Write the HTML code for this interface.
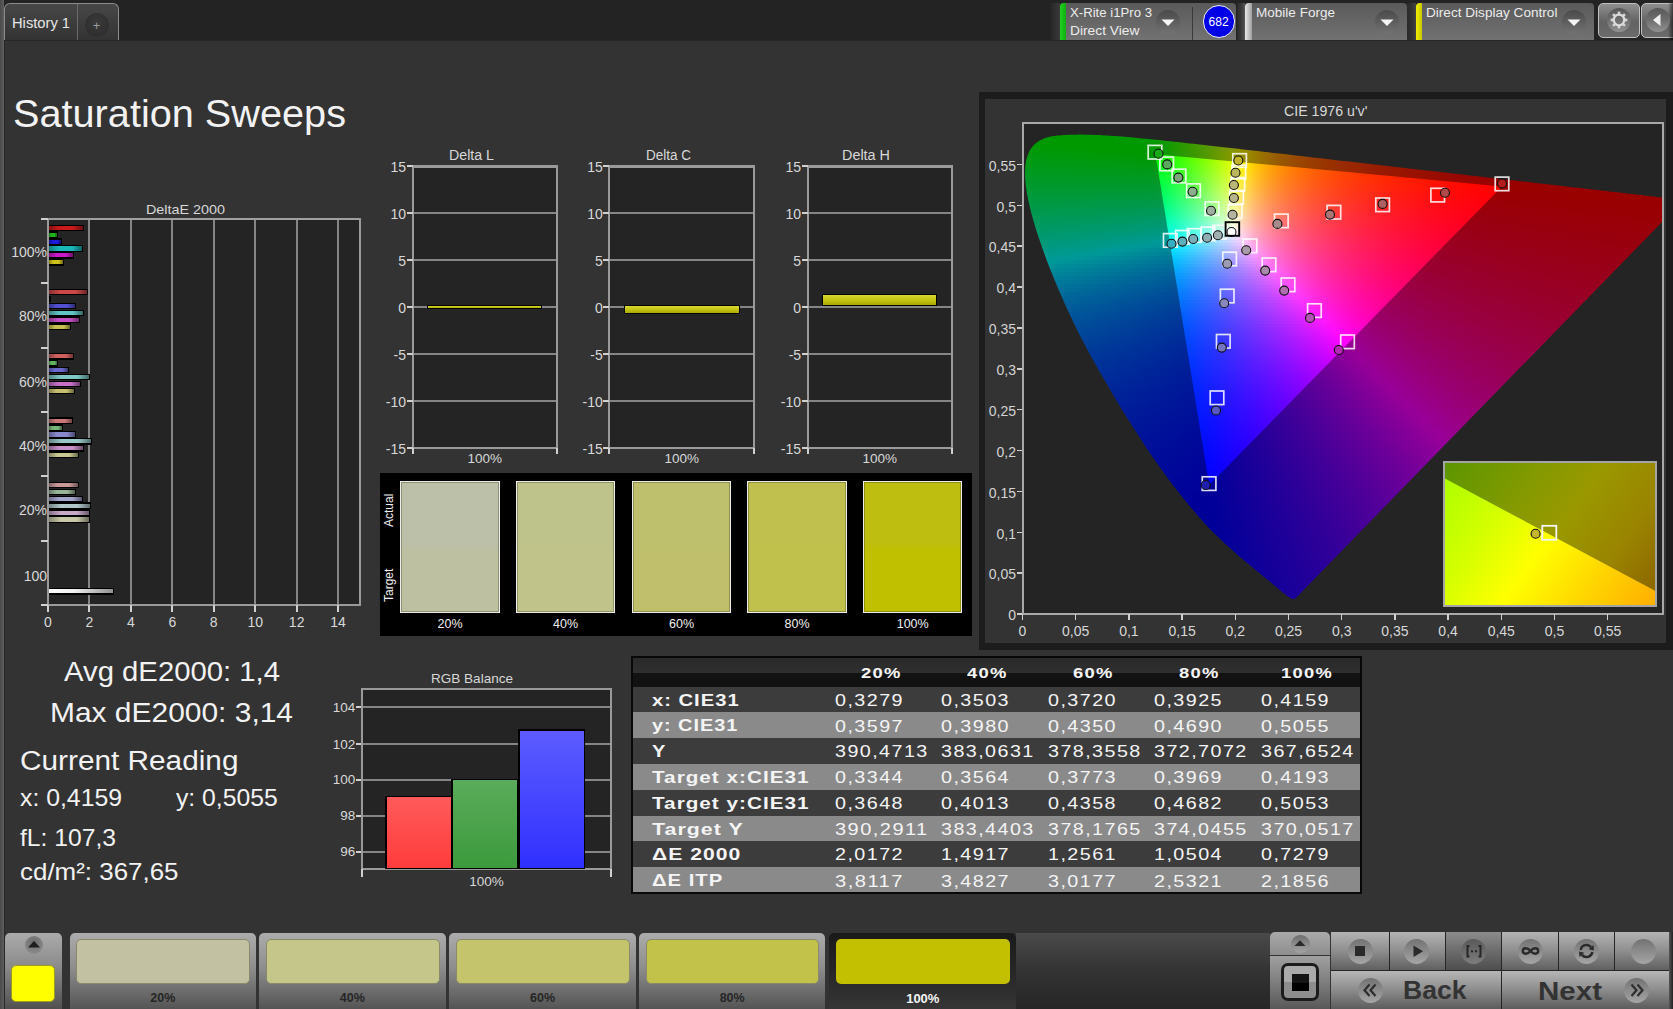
<!DOCTYPE html>
<html><head><meta charset="utf-8"><style>
html,body{margin:0;padding:0;}
body{width:1673px;height:1009px;overflow:hidden;position:relative;background:#333333;font-family:"Liberation Sans", sans-serif;}
.a{position:absolute;box-sizing:border-box;}
.t{position:absolute;white-space:pre;font-family:"Liberation Sans", sans-serif;}
</style></head><body>
<div class="a" style="left:0.00px;top:0.00px;width:1673.00px;height:40.00px;background:#232323"></div>
<div class="a" style="left:0.00px;top:0.00px;width:4.00px;height:1009.00px;background:linear-gradient(90deg,#4a4a4a,#5e5e5e)"></div>
<div class="a" style="left:4.00px;top:40.00px;width:1669.00px;height:1.00px;background:#262626"></div>
<div class="a" style="left:4.00px;top:40.00px;width:1.00px;height:969.00px;background:#282828"></div>
<div class="a" style="left:4.00px;top:3.00px;width:115.00px;height:37.00px;background:linear-gradient(#474747,#333333);border:1px solid #8c8c8c;border-bottom:none;border-radius:6px 6px 0 0"></div>
<div class="a" style="left:77.00px;top:4.00px;width:1.00px;height:36.00px;background:#6a6a6a"></div>
<div class="t" style="left:12.00px;top:16.10px;font-size:14px;line-height:14px;color:#e6e6e6;font-weight:400;transform:scaleX(1.0501);transform-origin:0 0;">History 1</div>
<div class="a" style="left:84.50px;top:13.00px;width:24.00px;height:24.00px;border-radius:50%;background:radial-gradient(circle at 50% 40%,#3a3a3a,#2f2f2f 70%,#3a3a3a)"></div>
<div class="t" style="left:92.70px;top:18.95px;font-size:13px;line-height:13px;color:#9a9a9a;font-weight:400;">+</div>
<div class="t" style="left:13.00px;top:94.35px;font-size:39px;line-height:39px;color:#f2f2f2;font-weight:400;transform:scaleX(1.0172);transform-origin:0 0;">Saturation Sweeps</div>
<div class="a" style="left:48.00px;top:219.00px;width:312.00px;height:386.00px;background:#242424"></div>
<div class="a" style="left:88.00px;top:219.00px;width:2.00px;height:386.00px;background:#858585"></div>
<div class="a" style="left:130.00px;top:219.00px;width:2.00px;height:386.00px;background:#858585"></div>
<div class="a" style="left:171.00px;top:219.00px;width:2.00px;height:386.00px;background:#858585"></div>
<div class="a" style="left:213.00px;top:219.00px;width:2.00px;height:386.00px;background:#858585"></div>
<div class="a" style="left:254.00px;top:219.00px;width:2.00px;height:386.00px;background:#858585"></div>
<div class="a" style="left:296.00px;top:219.00px;width:2.00px;height:386.00px;background:#858585"></div>
<div class="a" style="left:337.00px;top:219.00px;width:2.00px;height:386.00px;background:#858585"></div>
<div class="a" style="left:47.00px;top:218.00px;width:314.00px;height:2.00px;background:#a0a0a0"></div>
<div class="a" style="left:359.00px;top:218.00px;width:2.00px;height:387.00px;background:#9a9a9a"></div>
<div class="a" style="left:47.00px;top:218.00px;width:2.00px;height:388.00px;background:#9a9a9a"></div>
<div class="a" style="left:47.00px;top:604.00px;width:314.00px;height:2.00px;background:#9a9a9a"></div>
<div class="t" style="left:146.20px;top:202.53px;font-size:13.5px;line-height:13.5px;color:#d8d8d8;font-weight:400;transform:scaleX(1.0631);transform-origin:0 0;">DeltaE 2000</div>
<div class="a" style="left:41.00px;top:218.00px;width:7.00px;height:2.00px;background:#d0d0d0"></div>
<div class="a" style="left:41.00px;top:282.30px;width:7.00px;height:2.00px;background:#d0d0d0"></div>
<div class="a" style="left:41.00px;top:346.60px;width:7.00px;height:2.00px;background:#d0d0d0"></div>
<div class="a" style="left:41.00px;top:410.90px;width:7.00px;height:2.00px;background:#d0d0d0"></div>
<div class="a" style="left:41.00px;top:475.20px;width:7.00px;height:2.00px;background:#d0d0d0"></div>
<div class="a" style="left:41.00px;top:539.50px;width:7.00px;height:2.00px;background:#d0d0d0"></div>
<div class="a" style="left:41.00px;top:603.80px;width:7.00px;height:2.00px;background:#d0d0d0"></div>
<div class="a" style="left:47.00px;top:605.00px;width:2.00px;height:7.00px;background:#d0d0d0"></div>
<div class="t" style="left:44.10px;top:614.60px;font-size:14px;line-height:14px;color:#d8d8d8;font-weight:400;">0</div>
<div class="a" style="left:88.44px;top:605.00px;width:2.00px;height:7.00px;background:#d0d0d0"></div>
<div class="t" style="left:85.54px;top:614.60px;font-size:14px;line-height:14px;color:#d8d8d8;font-weight:400;">2</div>
<div class="a" style="left:129.88px;top:605.00px;width:2.00px;height:7.00px;background:#d0d0d0"></div>
<div class="t" style="left:126.98px;top:614.60px;font-size:14px;line-height:14px;color:#d8d8d8;font-weight:400;">4</div>
<div class="a" style="left:171.32px;top:605.00px;width:2.00px;height:7.00px;background:#d0d0d0"></div>
<div class="t" style="left:168.42px;top:614.60px;font-size:14px;line-height:14px;color:#d8d8d8;font-weight:400;">6</div>
<div class="a" style="left:212.76px;top:605.00px;width:2.00px;height:7.00px;background:#d0d0d0"></div>
<div class="t" style="left:209.86px;top:614.60px;font-size:14px;line-height:14px;color:#d8d8d8;font-weight:400;">8</div>
<div class="a" style="left:254.20px;top:605.00px;width:2.00px;height:7.00px;background:#d0d0d0"></div>
<div class="t" style="left:247.41px;top:614.60px;font-size:14px;line-height:14px;color:#d8d8d8;font-weight:400;">10</div>
<div class="a" style="left:295.64px;top:605.00px;width:2.00px;height:7.00px;background:#d0d0d0"></div>
<div class="t" style="left:288.85px;top:614.60px;font-size:14px;line-height:14px;color:#d8d8d8;font-weight:400;">12</div>
<div class="a" style="left:337.08px;top:605.00px;width:2.00px;height:7.00px;background:#d0d0d0"></div>
<div class="t" style="left:330.29px;top:614.60px;font-size:14px;line-height:14px;color:#d8d8d8;font-weight:400;">14</div>
<div class="t" style="left:11.19px;top:245.40px;font-size:14px;line-height:14px;color:#d8d8d8;font-weight:400;">100%</div>
<div class="t" style="left:18.97px;top:309.00px;font-size:14px;line-height:14px;color:#d8d8d8;font-weight:400;">80%</div>
<div class="t" style="left:18.97px;top:374.80px;font-size:14px;line-height:14px;color:#d8d8d8;font-weight:400;">60%</div>
<div class="t" style="left:18.97px;top:438.60px;font-size:14px;line-height:14px;color:#d8d8d8;font-weight:400;">40%</div>
<div class="t" style="left:18.97px;top:502.80px;font-size:14px;line-height:14px;color:#d8d8d8;font-weight:400;">20%</div>
<div class="t" style="left:23.64px;top:568.80px;font-size:14px;line-height:14px;color:#d8d8d8;font-weight:400;">100</div>
<div class="a" style="left:49.00px;top:224.50px;width:34.50px;height:6.60px;background:#000"></div>
<div class="a" style="left:49.00px;top:225.70px;width:33.50px;height:4.20px;background:linear-gradient(90deg,#c81a1aaa 0%,#c81a1a 30%,#c81a1a 70%,#c81a1a88 100%)"></div>
<div class="a" style="left:49.00px;top:231.40px;width:9.00px;height:6.60px;background:#000"></div>
<div class="a" style="left:49.00px;top:232.60px;width:8.00px;height:4.20px;background:linear-gradient(90deg,#1ab41aaa 0%,#1ab41a 30%,#1ab41a 70%,#1ab41a88 100%)"></div>
<div class="a" style="left:49.00px;top:238.30px;width:13.00px;height:6.60px;background:#000"></div>
<div class="a" style="left:49.00px;top:239.50px;width:12.00px;height:4.20px;background:linear-gradient(90deg,#1a1ad8aa 0%,#1a1ad8 30%,#1a1ad8 70%,#1a1ad888 100%)"></div>
<div class="a" style="left:49.00px;top:245.20px;width:34.00px;height:6.60px;background:#000"></div>
<div class="a" style="left:49.00px;top:246.40px;width:33.00px;height:4.20px;background:linear-gradient(90deg,#1ab8b8aa 0%,#1ab8b8 30%,#1ab8b8 70%,#1ab8b888 100%)"></div>
<div class="a" style="left:49.00px;top:252.10px;width:25.00px;height:6.60px;background:#000"></div>
<div class="a" style="left:49.00px;top:253.30px;width:24.00px;height:4.20px;background:linear-gradient(90deg,#c81ac8aa 0%,#c81ac8 30%,#c81ac8 70%,#c81ac888 100%)"></div>
<div class="a" style="left:49.00px;top:259.00px;width:15.00px;height:6.60px;background:#000"></div>
<div class="a" style="left:49.00px;top:260.20px;width:14.00px;height:4.20px;background:linear-gradient(90deg,#ccc01aaa 0%,#ccc01a 30%,#ccc01a 70%,#ccc01a88 100%)"></div>
<div class="a" style="left:49.00px;top:288.80px;width:38.50px;height:6.60px;background:#000"></div>
<div class="a" style="left:49.00px;top:290.00px;width:37.50px;height:4.20px;background:linear-gradient(90deg,#cc4848aa 0%,#cc4848 30%,#cc4848 70%,#cc484888 100%)"></div>
<div class="a" style="left:49.00px;top:295.70px;width:1.50px;height:6.60px;background:#000"></div>
<div class="a" style="left:49.00px;top:302.60px;width:27.40px;height:6.60px;background:#000"></div>
<div class="a" style="left:49.00px;top:303.80px;width:26.40px;height:4.20px;background:linear-gradient(90deg,#5050d0aa 0%,#5050d0 30%,#5050d0 70%,#5050d088 100%)"></div>
<div class="a" style="left:49.00px;top:309.50px;width:34.80px;height:6.60px;background:#000"></div>
<div class="a" style="left:49.00px;top:310.70px;width:33.80px;height:4.20px;background:linear-gradient(90deg,#60c4c4aa 0%,#60c4c4 30%,#60c4c4 70%,#60c4c488 100%)"></div>
<div class="a" style="left:49.00px;top:316.40px;width:30.50px;height:6.60px;background:#000"></div>
<div class="a" style="left:49.00px;top:317.60px;width:29.50px;height:4.20px;background:linear-gradient(90deg,#c450c4aa 0%,#c450c4 30%,#c450c4 70%,#c450c488 100%)"></div>
<div class="a" style="left:49.00px;top:323.30px;width:21.50px;height:6.60px;background:#000"></div>
<div class="a" style="left:49.00px;top:324.50px;width:20.50px;height:4.20px;background:linear-gradient(90deg,#c8c050aa 0%,#c8c050 30%,#c8c050 70%,#c8c05088 100%)"></div>
<div class="a" style="left:49.00px;top:353.10px;width:24.50px;height:6.60px;background:#000"></div>
<div class="a" style="left:49.00px;top:354.30px;width:23.50px;height:4.20px;background:linear-gradient(90deg,#d06060aa 0%,#d06060 30%,#d06060 70%,#d0606088 100%)"></div>
<div class="a" style="left:49.00px;top:360.00px;width:9.30px;height:6.60px;background:#000"></div>
<div class="a" style="left:49.00px;top:361.20px;width:8.30px;height:4.20px;background:linear-gradient(90deg,#60b460aa 0%,#60b460 30%,#60b460 70%,#60b46088 100%)"></div>
<div class="a" style="left:49.00px;top:366.90px;width:19.70px;height:6.60px;background:#000"></div>
<div class="a" style="left:49.00px;top:368.10px;width:18.70px;height:4.20px;background:linear-gradient(90deg,#6868ccaa 0%,#6868cc 30%,#6868cc 70%,#6868cc88 100%)"></div>
<div class="a" style="left:49.00px;top:373.80px;width:40.70px;height:6.60px;background:#000"></div>
<div class="a" style="left:49.00px;top:375.00px;width:39.70px;height:4.20px;background:linear-gradient(90deg,#80c8c8aa 0%,#80c8c8 30%,#80c8c8 70%,#80c8c888 100%)"></div>
<div class="a" style="left:49.00px;top:380.70px;width:31.50px;height:6.60px;background:#000"></div>
<div class="a" style="left:49.00px;top:381.90px;width:30.50px;height:4.20px;background:linear-gradient(90deg,#c870c8aa 0%,#c870c8 30%,#c870c8 70%,#c870c888 100%)"></div>
<div class="a" style="left:49.00px;top:387.60px;width:25.70px;height:6.60px;background:#000"></div>
<div class="a" style="left:49.00px;top:388.80px;width:24.70px;height:4.20px;background:linear-gradient(90deg,#c8c070aa 0%,#c8c070 30%,#c8c070 70%,#c8c07088 100%)"></div>
<div class="a" style="left:49.00px;top:417.40px;width:23.50px;height:6.60px;background:#000"></div>
<div class="a" style="left:49.00px;top:418.60px;width:22.50px;height:4.20px;background:linear-gradient(90deg,#cc7878aa 0%,#cc7878 30%,#cc7878 70%,#cc787888 100%)"></div>
<div class="a" style="left:49.00px;top:424.30px;width:13.50px;height:6.60px;background:#000"></div>
<div class="a" style="left:49.00px;top:425.50px;width:12.50px;height:4.20px;background:linear-gradient(90deg,#78b478aa 0%,#78b478 30%,#78b478 70%,#78b47888 100%)"></div>
<div class="a" style="left:49.00px;top:431.20px;width:27.40px;height:6.60px;background:#000"></div>
<div class="a" style="left:49.00px;top:432.40px;width:26.40px;height:4.20px;background:linear-gradient(90deg,#8888ccaa 0%,#8888cc 30%,#8888cc 70%,#8888cc88 100%)"></div>
<div class="a" style="left:49.00px;top:438.10px;width:42.90px;height:6.60px;background:#000"></div>
<div class="a" style="left:49.00px;top:439.30px;width:41.90px;height:4.20px;background:linear-gradient(90deg,#98c8c8aa 0%,#98c8c8 30%,#98c8c8 70%,#98c8c888 100%)"></div>
<div class="a" style="left:49.00px;top:445.00px;width:35.40px;height:6.60px;background:#000"></div>
<div class="a" style="left:49.00px;top:446.20px;width:34.40px;height:4.20px;background:linear-gradient(90deg,#c890c8aa 0%,#c890c8 30%,#c890c8 70%,#c890c888 100%)"></div>
<div class="a" style="left:49.00px;top:451.90px;width:30.00px;height:6.60px;background:#000"></div>
<div class="a" style="left:49.00px;top:453.10px;width:29.00px;height:4.20px;background:linear-gradient(90deg,#c8c890aa 0%,#c8c890 30%,#c8c890 70%,#c8c89088 100%)"></div>
<div class="a" style="left:49.00px;top:481.70px;width:30.20px;height:6.60px;background:#000"></div>
<div class="a" style="left:49.00px;top:482.90px;width:29.20px;height:4.20px;background:linear-gradient(90deg,#c89898aa 0%,#c89898 30%,#c89898 70%,#c8989888 100%)"></div>
<div class="a" style="left:49.00px;top:488.60px;width:26.80px;height:6.60px;background:#000"></div>
<div class="a" style="left:49.00px;top:489.80px;width:25.80px;height:4.20px;background:linear-gradient(90deg,#98b498aa 0%,#98b498 30%,#98b498 70%,#98b49888 100%)"></div>
<div class="a" style="left:49.00px;top:495.50px;width:34.30px;height:6.60px;background:#000"></div>
<div class="a" style="left:49.00px;top:496.70px;width:33.30px;height:4.20px;background:linear-gradient(90deg,#a4a4ccaa 0%,#a4a4cc 30%,#a4a4cc 70%,#a4a4cc88 100%)"></div>
<div class="a" style="left:49.00px;top:502.40px;width:42.40px;height:6.60px;background:#000"></div>
<div class="a" style="left:49.00px;top:503.60px;width:41.40px;height:4.20px;background:linear-gradient(90deg,#b0c8c8aa 0%,#b0c8c8 30%,#b0c8c8 70%,#b0c8c888 100%)"></div>
<div class="a" style="left:49.00px;top:509.30px;width:40.50px;height:6.60px;background:#000"></div>
<div class="a" style="left:49.00px;top:510.50px;width:39.50px;height:4.20px;background:linear-gradient(90deg,#c8a8c8aa 0%,#c8a8c8 30%,#c8a8c8 70%,#c8a8c888 100%)"></div>
<div class="a" style="left:49.00px;top:516.20px;width:40.50px;height:6.60px;background:#000"></div>
<div class="a" style="left:49.00px;top:517.40px;width:39.50px;height:4.20px;background:linear-gradient(90deg,#c8c8a8aa 0%,#c8c8a8 30%,#c8c8a8 70%,#c8c8a888 100%)"></div>
<div class="a" style="left:49.00px;top:587.50px;width:65.00px;height:7.00px;background:#000"></div>
<div class="a" style="left:49.00px;top:588.50px;width:64.00px;height:4.80px;background:linear-gradient(90deg,#ffffff,#f0f0f0 40%,#909090)"></div>
<div class="a" style="left:412.50px;top:166.30px;width:144.50px;height:281.50px;background:#242424"></div>
<div class="a" style="left:412.50px;top:212.00px;width:144.50px;height:2.00px;background:#858585"></div>
<div class="a" style="left:412.50px;top:259.00px;width:144.50px;height:2.00px;background:#858585"></div>
<div class="a" style="left:412.50px;top:306.00px;width:144.50px;height:2.00px;background:#858585"></div>
<div class="a" style="left:412.50px;top:353.00px;width:144.50px;height:2.00px;background:#858585"></div>
<div class="a" style="left:412.50px;top:400.00px;width:144.50px;height:2.00px;background:#858585"></div>
<div class="a" style="left:411.50px;top:164.80px;width:146.50px;height:3.00px;background:#9a9a9a"></div>
<div class="a" style="left:411.50px;top:446.80px;width:146.50px;height:2.00px;background:#9a9a9a"></div>
<div class="a" style="left:411.50px;top:165.30px;width:2.00px;height:283.50px;background:#9a9a9a"></div>
<div class="a" style="left:556.00px;top:165.30px;width:2.00px;height:283.50px;background:#9a9a9a"></div>
<div class="a" style="left:406.50px;top:165.30px;width:6.00px;height:2.00px;background:#d0d0d0"></div>
<div class="t" style="left:390.42px;top:160.30px;font-size:14px;line-height:14px;color:#d8d8d8;font-weight:400;">15</div>
<div class="a" style="left:406.50px;top:212.22px;width:6.00px;height:2.00px;background:#d0d0d0"></div>
<div class="t" style="left:390.42px;top:207.22px;font-size:14px;line-height:14px;color:#d8d8d8;font-weight:400;">10</div>
<div class="a" style="left:406.50px;top:259.13px;width:6.00px;height:2.00px;background:#d0d0d0"></div>
<div class="t" style="left:398.20px;top:254.13px;font-size:14px;line-height:14px;color:#d8d8d8;font-weight:400;">5</div>
<div class="a" style="left:406.50px;top:306.04px;width:6.00px;height:2.00px;background:#d0d0d0"></div>
<div class="t" style="left:398.20px;top:301.04px;font-size:14px;line-height:14px;color:#d8d8d8;font-weight:400;">0</div>
<div class="a" style="left:406.50px;top:352.96px;width:6.00px;height:2.00px;background:#d0d0d0"></div>
<div class="t" style="left:393.55px;top:347.96px;font-size:14px;line-height:14px;color:#d8d8d8;font-weight:400;">-5</div>
<div class="a" style="left:406.50px;top:399.88px;width:6.00px;height:2.00px;background:#d0d0d0"></div>
<div class="t" style="left:385.77px;top:394.88px;font-size:14px;line-height:14px;color:#d8d8d8;font-weight:400;">-10</div>
<div class="a" style="left:406.50px;top:446.79px;width:6.00px;height:2.00px;background:#d0d0d0"></div>
<div class="t" style="left:385.77px;top:441.79px;font-size:14px;line-height:14px;color:#d8d8d8;font-weight:400;">-15</div>
<div class="a" style="left:411.50px;top:447.80px;width:2.00px;height:6.00px;background:#d0d0d0"></div>
<div class="a" style="left:556.00px;top:447.80px;width:2.00px;height:6.00px;background:#d0d0d0"></div>
<div class="t" style="left:448.75px;top:148.40px;font-size:14px;line-height:14px;color:#d8d8d8;font-weight:400;transform:scaleX(1.0144);transform-origin:0 0;">Delta L</div>
<div class="t" style="left:467.48px;top:452.22px;font-size:13.5px;line-height:13.5px;color:#d8d8d8;font-weight:400;">100%</div>
<div class="a" style="left:427.40px;top:305.00px;width:115.10px;height:4.40px;background:#000"></div>
<div class="a" style="left:428.40px;top:306.00px;width:113.10px;height:2.10px;background:linear-gradient(#d8d830,#c0c010 60%,#a8a800)"></div>
<div class="a" style="left:609.30px;top:166.30px;width:144.70px;height:281.50px;background:#242424"></div>
<div class="a" style="left:609.30px;top:212.00px;width:144.70px;height:2.00px;background:#858585"></div>
<div class="a" style="left:609.30px;top:259.00px;width:144.70px;height:2.00px;background:#858585"></div>
<div class="a" style="left:609.30px;top:306.00px;width:144.70px;height:2.00px;background:#858585"></div>
<div class="a" style="left:609.30px;top:353.00px;width:144.70px;height:2.00px;background:#858585"></div>
<div class="a" style="left:609.30px;top:400.00px;width:144.70px;height:2.00px;background:#858585"></div>
<div class="a" style="left:608.30px;top:164.80px;width:146.70px;height:3.00px;background:#9a9a9a"></div>
<div class="a" style="left:608.30px;top:446.80px;width:146.70px;height:2.00px;background:#9a9a9a"></div>
<div class="a" style="left:608.30px;top:165.30px;width:2.00px;height:283.50px;background:#9a9a9a"></div>
<div class="a" style="left:753.00px;top:165.30px;width:2.00px;height:283.50px;background:#9a9a9a"></div>
<div class="a" style="left:603.30px;top:165.30px;width:6.00px;height:2.00px;background:#d0d0d0"></div>
<div class="t" style="left:587.22px;top:160.30px;font-size:14px;line-height:14px;color:#d8d8d8;font-weight:400;">15</div>
<div class="a" style="left:603.30px;top:212.22px;width:6.00px;height:2.00px;background:#d0d0d0"></div>
<div class="t" style="left:587.22px;top:207.22px;font-size:14px;line-height:14px;color:#d8d8d8;font-weight:400;">10</div>
<div class="a" style="left:603.30px;top:259.13px;width:6.00px;height:2.00px;background:#d0d0d0"></div>
<div class="t" style="left:595.00px;top:254.13px;font-size:14px;line-height:14px;color:#d8d8d8;font-weight:400;">5</div>
<div class="a" style="left:603.30px;top:306.04px;width:6.00px;height:2.00px;background:#d0d0d0"></div>
<div class="t" style="left:595.00px;top:301.04px;font-size:14px;line-height:14px;color:#d8d8d8;font-weight:400;">0</div>
<div class="a" style="left:603.30px;top:352.96px;width:6.00px;height:2.00px;background:#d0d0d0"></div>
<div class="t" style="left:590.35px;top:347.96px;font-size:14px;line-height:14px;color:#d8d8d8;font-weight:400;">-5</div>
<div class="a" style="left:603.30px;top:399.88px;width:6.00px;height:2.00px;background:#d0d0d0"></div>
<div class="t" style="left:582.57px;top:394.88px;font-size:14px;line-height:14px;color:#d8d8d8;font-weight:400;">-10</div>
<div class="a" style="left:603.30px;top:446.79px;width:6.00px;height:2.00px;background:#d0d0d0"></div>
<div class="t" style="left:582.57px;top:441.79px;font-size:14px;line-height:14px;color:#d8d8d8;font-weight:400;">-15</div>
<div class="a" style="left:608.30px;top:447.80px;width:2.00px;height:6.00px;background:#d0d0d0"></div>
<div class="a" style="left:753.00px;top:447.80px;width:2.00px;height:6.00px;background:#d0d0d0"></div>
<div class="t" style="left:645.65px;top:148.40px;font-size:14px;line-height:14px;color:#d8d8d8;font-weight:400;transform:scaleX(0.9639);transform-origin:0 0;">Delta C</div>
<div class="t" style="left:664.38px;top:452.22px;font-size:13.5px;line-height:13.5px;color:#d8d8d8;font-weight:400;">100%</div>
<div class="a" style="left:624.00px;top:305.00px;width:116.00px;height:9.00px;background:#000"></div>
<div class="a" style="left:625.00px;top:306.00px;width:114.00px;height:6.70px;background:linear-gradient(#d8d830,#c0c010 60%,#a8a800)"></div>
<div class="a" style="left:807.60px;top:166.30px;width:144.40px;height:281.50px;background:#242424"></div>
<div class="a" style="left:807.60px;top:212.00px;width:144.40px;height:2.00px;background:#858585"></div>
<div class="a" style="left:807.60px;top:259.00px;width:144.40px;height:2.00px;background:#858585"></div>
<div class="a" style="left:807.60px;top:306.00px;width:144.40px;height:2.00px;background:#858585"></div>
<div class="a" style="left:807.60px;top:353.00px;width:144.40px;height:2.00px;background:#858585"></div>
<div class="a" style="left:807.60px;top:400.00px;width:144.40px;height:2.00px;background:#858585"></div>
<div class="a" style="left:806.60px;top:164.80px;width:146.40px;height:3.00px;background:#9a9a9a"></div>
<div class="a" style="left:806.60px;top:446.80px;width:146.40px;height:2.00px;background:#9a9a9a"></div>
<div class="a" style="left:806.60px;top:165.30px;width:2.00px;height:283.50px;background:#9a9a9a"></div>
<div class="a" style="left:951.00px;top:165.30px;width:2.00px;height:283.50px;background:#9a9a9a"></div>
<div class="a" style="left:801.60px;top:165.30px;width:6.00px;height:2.00px;background:#d0d0d0"></div>
<div class="t" style="left:785.52px;top:160.30px;font-size:14px;line-height:14px;color:#d8d8d8;font-weight:400;">15</div>
<div class="a" style="left:801.60px;top:212.22px;width:6.00px;height:2.00px;background:#d0d0d0"></div>
<div class="t" style="left:785.52px;top:207.22px;font-size:14px;line-height:14px;color:#d8d8d8;font-weight:400;">10</div>
<div class="a" style="left:801.60px;top:259.13px;width:6.00px;height:2.00px;background:#d0d0d0"></div>
<div class="t" style="left:793.30px;top:254.13px;font-size:14px;line-height:14px;color:#d8d8d8;font-weight:400;">5</div>
<div class="a" style="left:801.60px;top:306.04px;width:6.00px;height:2.00px;background:#d0d0d0"></div>
<div class="t" style="left:793.30px;top:301.04px;font-size:14px;line-height:14px;color:#d8d8d8;font-weight:400;">0</div>
<div class="a" style="left:801.60px;top:352.96px;width:6.00px;height:2.00px;background:#d0d0d0"></div>
<div class="t" style="left:788.65px;top:347.96px;font-size:14px;line-height:14px;color:#d8d8d8;font-weight:400;">-5</div>
<div class="a" style="left:801.60px;top:399.88px;width:6.00px;height:2.00px;background:#d0d0d0"></div>
<div class="t" style="left:780.87px;top:394.88px;font-size:14px;line-height:14px;color:#d8d8d8;font-weight:400;">-10</div>
<div class="a" style="left:801.60px;top:446.79px;width:6.00px;height:2.00px;background:#d0d0d0"></div>
<div class="t" style="left:780.87px;top:441.79px;font-size:14px;line-height:14px;color:#d8d8d8;font-weight:400;">-15</div>
<div class="a" style="left:806.60px;top:447.80px;width:2.00px;height:6.00px;background:#d0d0d0"></div>
<div class="a" style="left:951.00px;top:447.80px;width:2.00px;height:6.00px;background:#d0d0d0"></div>
<div class="t" style="left:842.30px;top:148.40px;font-size:14px;line-height:14px;color:#d8d8d8;font-weight:400;transform:scaleX(1.0281);transform-origin:0 0;">Delta H</div>
<div class="t" style="left:862.53px;top:452.22px;font-size:13.5px;line-height:13.5px;color:#d8d8d8;font-weight:400;">100%</div>
<div class="a" style="left:822.30px;top:293.70px;width:114.50px;height:12.40px;background:#000"></div>
<div class="a" style="left:823.30px;top:294.70px;width:112.50px;height:10.10px;background:linear-gradient(#d8d830,#c0c010 60%,#a8a800)"></div>
<div class="a" style="left:380.00px;top:473.00px;width:591.50px;height:163.30px;background:#000"></div>
<div class="a" style="left:400.30px;top:481.40px;width:99.60px;height:131.20px;border:1px solid #ececec;box-shadow:inset 0 0 0 1px rgba(60,60,20,0.35);background:linear-gradient(#bcc0a8 0%,#bcc0a8 47%,#bec0a2 53%,#bec0a2 100%)"></div>
<div class="t" style="left:437.58px;top:617.88px;font-size:12.5px;line-height:12.5px;color:#f0f0f0;font-weight:400;">20%</div>
<div class="a" style="left:515.80px;top:481.40px;width:99.60px;height:131.20px;border:1px solid #ececec;box-shadow:inset 0 0 0 1px rgba(60,60,20,0.35);background:linear-gradient(#bec38c 0%,#bec38c 47%,#c0c48a 53%,#c0c48a 100%)"></div>
<div class="t" style="left:553.08px;top:617.88px;font-size:12.5px;line-height:12.5px;color:#f0f0f0;font-weight:400;">40%</div>
<div class="a" style="left:631.80px;top:481.40px;width:99.60px;height:131.20px;border:1px solid #ececec;box-shadow:inset 0 0 0 1px rgba(60,60,20,0.35);background:linear-gradient(#bec06e 0%,#bec06e 47%,#c0c06c 53%,#c0c06c 100%)"></div>
<div class="t" style="left:669.08px;top:617.88px;font-size:12.5px;line-height:12.5px;color:#f0f0f0;font-weight:400;">60%</div>
<div class="a" style="left:747.30px;top:481.40px;width:99.60px;height:131.20px;border:1px solid #ececec;box-shadow:inset 0 0 0 1px rgba(60,60,20,0.35);background:linear-gradient(#bfc04e 0%,#bfc04e 47%,#c0c04c 53%,#c0c04c 100%)"></div>
<div class="t" style="left:784.58px;top:617.88px;font-size:12.5px;line-height:12.5px;color:#f0f0f0;font-weight:400;">80%</div>
<div class="a" style="left:862.90px;top:481.40px;width:99.60px;height:131.20px;border:1px solid #ececec;box-shadow:inset 0 0 0 1px rgba(60,60,20,0.35);background:linear-gradient(#bebe10 0%,#bebe10 47%,#c0c000 53%,#c0c000 100%)"></div>
<div class="t" style="left:896.71px;top:617.88px;font-size:12.5px;line-height:12.5px;color:#f0f0f0;font-weight:400;">100%</div>
<div class="t" style="left:0.00px;top:-10.20px;font-size:12px;line-height:12px;color:#f0f0f0;font-weight:400;transform:rotate(-90deg);transform-origin:0 0;left:383px;top:527px;">Actual</div>
<div class="t" style="left:0.00px;top:-10.20px;font-size:12px;line-height:12px;color:#f0f0f0;font-weight:400;transform:rotate(-90deg);transform-origin:0 0;left:383px;top:602px;">Target</div>
<div class="a" style="left:979.00px;top:92.00px;width:694.00px;height:558.00px;background:#1c1c1c"></div>
<div class="a" style="left:985.00px;top:99.00px;width:681.00px;height:544.00px;background:#333333"></div>
<div class="a" style="left:1023px;top:123px;width:639px;height:491px;background:#242424;overflow:hidden"><div style="position:absolute;left:0px;top:5px;width:639px;height:474px;clip-path:polygon(272.4px 470.4px,272.3px 470.5px,272.1px 470.6px,271.9px 470.7px,271.7px 470.8px,271.5px 470.9px,271.3px 471.0px,271.1px 471.0px,270.9px 471.0px,270.7px 471.1px,270.5px 471.1px,270.3px 471.0px,270.0px 471.0px,269.7px 470.9px,269.3px 470.8px,268.9px 470.7px,268.4px 470.6px,268.0px 470.4px,267.6px 470.2px,267.1px 470.0px,266.7px 469.7px,266.3px 469.4px,265.8px 469.1px,265.3px 468.7px,264.8px 468.4px,264.3px 468.0px,263.7px 467.6px,263.1px 467.1px,262.5px 466.6px,261.8px 466.1px,261.1px 465.5px,260.3px 464.9px,259.5px 464.2px,258.6px 463.5px,257.7px 462.8px,256.7px 462.0px,255.8px 461.2px,254.7px 460.3px,253.7px 459.4px,252.6px 458.5px,251.4px 457.5px,250.3px 456.5px,249.0px 455.5px,247.7px 454.4px,246.4px 453.3px,245.0px 452.1px,243.6px 451.0px,242.1px 449.7px,240.5px 448.4px,238.8px 447.0px,237.0px 445.6px,235.2px 444.1px,233.3px 442.5px,231.3px 440.9px,229.3px 439.2px,227.2px 437.5px,225.1px 435.8px,222.9px 434.0px,220.6px 432.1px,218.3px 430.1px,215.8px 428.0px,213.3px 425.8px,210.7px 423.5px,208.0px 421.1px,205.2px 418.6px,202.3px 415.9px,199.3px 413.1px,196.2px 410.1px,193.2px 407.2px,190.0px 404.0px,186.6px 400.7px,183.1px 397.0px,179.4px 392.9px,175.5px 388.4px,171.3px 383.6px,167.0px 378.4px,162.5px 373.0px,157.8px 367.2px,153.1px 361.1px,148.2px 354.7px,143.2px 347.9px,138.0px 340.8px,132.7px 333.4px,127.4px 325.7px,122.0px 317.7px,116.5px 309.3px,110.9px 300.6px,105.2px 291.6px,99.5px 282.4px,93.8px 273.0px,88.2px 263.6px,82.7px 254.1px,77.0px 244.4px,71.5px 234.5px,66.0px 224.7px,60.7px 214.8px,55.7px 205.2px,51.0px 195.6px,46.5px 186.0px,42.1px 176.4px,38.0px 167.0px,34.0px 157.9px,30.4px 149.1px,26.9px 140.5px,23.7px 132.2px,20.7px 124.1px,18.0px 116.3px,15.4px 108.8px,13.1px 101.8px,11.1px 95.1px,9.3px 88.7px,7.7px 82.7px,6.4px 77.1px,5.2px 71.7px,4.2px 66.6px,3.4px 61.8px,2.8px 57.4px,2.4px 53.2px,2.1px 49.3px,2.0px 45.6px,2.1px 42.1px,2.3px 38.8px,2.6px 35.7px,3.1px 32.8px,3.8px 30.2px,4.6px 27.7px,5.5px 25.3px,6.5px 23.1px,7.7px 21.1px,9.0px 19.2px,10.4px 17.6px,12.0px 16.0px,13.6px 14.6px,15.2px 13.4px,17.0px 12.3px,18.9px 11.4px,20.9px 10.5px,22.9px 9.8px,25.0px 9.2px,27.2px 8.6px,29.4px 8.2px,31.6px 7.9px,33.9px 7.6px,36.3px 7.4px,38.7px 7.2px,41.1px 7.0px,43.5px 6.9px,46.0px 6.8px,48.5px 6.7px,51.0px 6.7px,53.5px 6.7px,56.0px 6.6px,58.5px 6.6px,61.0px 6.7px,63.6px 6.7px,66.1px 6.8px,68.7px 6.8px,71.2px 6.9px,73.8px 7.0px,76.4px 7.1px,79.1px 7.3px,81.7px 7.4px,84.4px 7.6px,87.2px 7.8px,89.9px 7.9px,92.7px 8.1px,95.6px 8.3px,98.5px 8.6px,101.4px 8.8px,104.4px 9.1px,107.4px 9.3px,110.4px 9.6px,113.5px 9.9px,116.7px 10.2px,119.9px 10.5px,123.1px 10.8px,126.4px 11.1px,129.8px 11.4px,133.2px 11.8px,136.6px 12.1px,140.1px 12.5px,143.7px 12.9px,147.4px 13.3px,151.1px 13.7px,154.9px 14.1px,158.7px 14.5px,162.6px 14.9px,166.6px 15.4px,170.6px 15.8px,174.7px 16.3px,178.9px 16.7px,183.2px 17.2px,187.5px 17.7px,191.9px 18.2px,196.4px 18.7px,200.9px 19.2px,205.6px 19.7px,210.3px 20.3px,215.0px 20.8px,219.9px 21.4px,224.8px 21.9px,229.8px 22.5px,234.9px 23.1px,240.1px 23.7px,245.3px 24.3px,250.6px 24.9px,256.0px 25.5px,261.5px 26.1px,267.0px 26.8px,272.6px 27.4px,278.3px 28.1px,284.0px 28.7px,289.9px 29.4px,295.8px 30.1px,301.8px 30.8px,307.8px 31.5px,313.9px 32.2px,320.0px 32.9px,326.2px 33.6px,332.5px 34.3px,338.8px 35.0px,345.2px 35.7px,351.5px 36.5px,357.9px 37.2px,364.4px 37.9px,370.9px 38.7px,377.4px 39.4px,383.8px 40.2px,390.2px 40.9px,396.5px 41.7px,402.8px 42.4px,409.1px 43.1px,415.3px 43.8px,421.5px 44.5px,427.7px 45.2px,433.9px 45.9px,440.1px 46.6px,446.2px 47.4px,452.3px 48.1px,458.3px 48.7px,464.2px 49.4px,469.9px 50.1px,475.6px 50.7px,481.2px 51.3px,486.6px 52.0px,492.0px 52.6px,497.2px 53.2px,502.4px 53.8px,507.4px 54.3px,512.4px 54.9px,517.2px 55.5px,521.9px 56.0px,526.5px 56.5px,530.9px 57.1px,535.2px 57.6px,539.4px 58.0px,543.5px 58.5px,547.5px 59.0px,551.3px 59.4px,555.1px 59.8px,558.7px 60.3px,562.2px 60.7px,565.6px 61.0px,568.9px 61.4px,572.1px 61.8px,575.1px 62.1px,577.9px 62.4px,580.5px 62.7px,583.2px 63.1px,586.2px 63.4px,589.7px 63.8px,593.9px 64.3px,598.6px 64.8px,603.7px 65.4px,608.8px 66.0px,613.5px 66.6px,617.8px 67.0px,621.5px 67.5px,624.9px 67.9px,628.1px 68.2px,631.0px 68.6px,633.7px 68.9px,636.3px 69.2px,638.5px 69.4px,640.4px 69.6px,642.1px 69.8px,643.7px 70.0px,645.4px 70.2px,647.3px 70.4px,649.5px 70.7px,652.0px 71.0px,654.6px 71.3px,657.0px 71.5px,659.1px 71.8px,660.5px 71.9px)"><div style="position:absolute;left:0;top:0px;width:639px;height:4px;background:linear-gradient(90deg,#009900 0px,#009900 16px,#009900 32px,#009900 48px,#009900 64px,#009900 80px,#009900 96px,#009900 112px,#009900 128px,#159900 144px,#2c9900 160px,#469900 176px,#629900 192px,#819900 208px,#999000 224px,#997500 240px,#996100 256px,#995100 272px,#994400 288px,#993a00 304px,#993200 320px,#992a00 336px,#992400 352px,#991f00 368px,#991a00 384px,#991600 400px,#991200 416px,#990f00 432px,#990c00 448px,#990900 464px,#990700 480px,#990500 496px,#990300 512px,#990100 528px,#990000 544px,#990000 560px,#990000 576px,#990000 592px,#990000 608px,#990000 624px,#990000 639px)"></div><div style="position:absolute;left:0;top:4px;width:639px;height:4px;background:linear-gradient(90deg,#009900 0px,#009900 16px,#009900 32px,#009900 48px,#009900 64px,#009900 80px,#009900 96px,#009900 112px,#009900 128px,#149900 144px,#2c9900 160px,#469900 176px,#629900 192px,#819900 208px,#998f00 224px,#997400 240px,#996000 256px,#995000 272px,#994300 288px,#993900 304px,#993100 320px,#992a00 336px,#992300 352px,#991e00 368px,#991900 384px,#991500 400px,#991200 416px,#990e00 432px,#990b00 448px,#990900 464px,#990600 480px,#990400 496px,#990200 512px,#990000 528px,#990000 544px,#990000 560px,#990000 576px,#990000 592px,#990000 608px,#990000 624px,#990000 639px)"></div><div style="position:absolute;left:0;top:8px;width:639px;height:4px;background:linear-gradient(90deg,#009900 0px,#009900 16px,#009900 32px,#009900 48px,#009900 64px,#009900 80px,#009900 96px,#009900 112px,#009900 128px,#149900 144px,#2c9900 160px,#469900 176px,#629900 192px,#829900 208px,#998e00 224px,#997300 240px,#995f00 256px,#994f00 272px,#994300 288px,#993800 304px,#993000 320px,#992900 336px,#992300 352px,#991d00 368px,#991900 384px,#991500 400px,#991100 416px,#990e00 432px,#990b00 448px,#990800 464px,#990600 480px,#990400 496px,#990200 512px,#990000 528px,#990000 544px,#990000 560px,#990000 576px,#990000 592px,#990000 608px,#990000 624px,#990000 639px)"></div><div style="position:absolute;left:0;top:12px;width:639px;height:4px;background:linear-gradient(90deg,#009900 0px,#009900 16px,#009900 32px,#009900 48px,#009900 64px,#009900 80px,#009900 96px,#009900 112px,#009900 128px,#139900 144px,#2b9900 160px,#469900 176px,#639900 192px,#829900 208px,#998d00 224px,#997200 240px,#995e00 256px,#994e00 272px,#994200 288px,#993800 304px,#992f00 320px,#992800 336px,#992200 352px,#991d00 368px,#991800 384px,#991400 400px,#991100 416px,#990d00 432px,#990a00 448px,#990800 464px,#990500 480px,#990300 496px,#990100 512px,#990000 528px,#990000 544px,#990000 560px,#990000 576px,#990000 592px,#990000 608px,#990000 624px,#990000 639px)"></div><div style="position:absolute;left:0;top:16px;width:639px;height:4px;background:linear-gradient(90deg,#009904 0px,#009903 16px,#009901 32px,#009900 48px,#009900 64px,#009900 80px,#009900 96px,#009900 112px,#009900 128px,#129900 144px,#2b9900 160px,#459900 176px,#639900 192px,#839900 208px,#998c00 224px,#997100 240px,#995d00 256px,#994d00 272px,#994100 288px,#993700 304px,#992f00 320px,#992700 336px,#992100 352px,#991c00 368px,#991800 384px,#991400 400px,#991000 416px,#990d00 432px,#990a00 448px,#990700 464px,#990500 480px,#990300 496px,#990100 512px,#990000 528px,#990000 544px,#990000 560px,#990000 576px,#990000 592px,#990000 608px,#990000 624px,#990000 639px)"></div><div style="position:absolute;left:0;top:20px;width:639px;height:4px;background:linear-gradient(90deg,#009908 0px,#009907 16px,#009905 32px,#009904 48px,#009902 64px,#009901 80px,#009900 96px,#009900 112px,#009900 128px,#119900 144px,#2a9900 160px,#459900 176px,#639900 192px,#849900 208px,#998b00 224px,#997000 240px,#995c00 256px,#994d00 272px,#994000 288px,#993600 304px,#992e00 320px,#992700 336px,#992100 352px,#991b00 368px,#991700 384px,#991300 400px,#990f00 416px,#990c00 432px,#990900 448px,#990700 464px,#990400 480px,#990200 496px,#990000 512px,#990000 528px,#990000 544px,#990000 560px,#990000 576px,#990000 592px,#990000 608px,#990000 624px,#990000 639px)"></div><div style="position:absolute;left:0;top:24px;width:639px;height:4px;background:linear-gradient(90deg,#00990c 0px,#00990b 16px,#00990a 32px,#009908 48px,#009907 64px,#009905 80px,#009904 96px,#009902 112px,#009900 128px,#119900 144px,#2a9900 160px,#459900 176px,#639900 192px,#849900 208px,#998a00 224px,#996f00 240px,#995b00 256px,#994c00 272px,#993f00 288px,#993500 304px,#992d00 320px,#992600 336px,#992000 352px,#991b00 368px,#991600 384px,#991200 400px,#990f00 416px,#990c00 432px,#990900 448px,#990600 464px,#990400 480px,#990200 496px,#990000 512px,#990000 528px,#990000 544px,#990000 560px,#990000 576px,#990000 592px,#990000 608px,#990000 624px,#990000 639px)"></div><div style="position:absolute;left:0;top:28px;width:639px;height:4px;background:linear-gradient(90deg,#009910 0px,#00990f 16px,#00990e 32px,#00990d 48px,#00990b 64px,#00990a 80px,#009909 96px,#009907 112px,#009906 128px,#109904 144px,#299902 160px,#459900 176px,#639900 192px,#859900 208px,#998a00 224px,#996e00 240px,#995a00 256px,#994b00 272px,#993e00 288px,#993400 304px,#992c00 320px,#992500 336px,#991f00 352px,#991a00 368px,#991600 384px,#991200 400px,#990e00 416px,#990b00 432px,#990800 448px,#990600 464px,#990300 480px,#990100 496px,#990000 512px,#990000 528px,#990000 544px,#990000 560px,#990000 576px,#990000 592px,#990000 608px,#990000 624px,#990000 639px)"></div><div style="position:absolute;left:0;top:32px;width:639px;height:4px;background:linear-gradient(90deg,#009914 0px,#009913 16px,#009912 32px,#009911 48px,#009910 64px,#00990f 80px,#00990e 96px,#00990c 112px,#00990b 128px,#0f9909 144px,#299908 160px,#449906 176px,#639904 192px,#859901 208px,#998900 224px,#996d00 240px,#995900 256px,#994a00 272px,#993e00 288px,#993400 304px,#992b00 320px,#992500 336px,#991f00 352px,#991900 368px,#991500 384px,#991100 400px,#990e00 416px,#990b00 432px,#990800 448px,#990500 464px,#990300 480px,#990100 496px,#990000 512px,#990000 528px,#990000 544px,#990000 560px,#990000 576px,#990000 592px,#990000 608px,#990000 624px,#990000 639px)"></div><div style="position:absolute;left:0;top:36px;width:639px;height:4px;background:linear-gradient(90deg,#009918 0px,#009917 16px,#009916 32px,#009916 48px,#009915 64px,#009914 80px,#009913 96px,#009912 112px,#009910 128px,#0e990f 144px,#28990e 160px,#44990c 176px,#63990a 192px,#869908 208px,#998805 224px,#996c02 240px,#995800 256px,#994900 272px,#993d00 288px,#993300 304px,#992b00 320px,#992400 336px,#991e00 352px,#991900 368px,#991400 384px,#991100 400px,#990d00 416px,#990a00 432px,#990700 448px,#990500 464px,#990200 480px,#990000 496px,#990000 512px,#990000 528px,#990000 544px,#990000 560px,#990000 576px,#990000 592px,#990000 608px,#990000 624px,#990000 639px)"></div><div style="position:absolute;left:0;top:40px;width:639px;height:4px;background:linear-gradient(90deg,#00991c 0px,#00991c 16px,#00991b 32px,#00991a 48px,#009919 64px,#009919 80px,#009918 96px,#009917 112px,#009916 128px,#0d9915 144px,#279914 160px,#449912 176px,#649911 192px,#87990f 208px,#99870c 224px,#996b08 240px,#995705 256px,#994803 272px,#993c01 288px,#993200 304px,#992a00 320px,#992300 336px,#991d00 352px,#991800 368px,#991400 384px,#991000 400px,#990c00 416px,#990900 432px,#990700 448px,#990400 464px,#990200 480px,#990000 496px,#990000 512px,#990000 528px,#990000 544px,#990000 560px,#990000 576px,#990000 592px,#990000 608px,#990000 624px,#990000 639px)"></div><div style="position:absolute;left:0;top:44px;width:639px;height:4px;background:linear-gradient(90deg,#009920 0px,#009920 16px,#00991f 32px,#00991f 48px,#00991e 64px,#00991e 80px,#00991d 96px,#00991c 112px,#00991c 128px,#0d991b 144px,#27991a 160px,#449919 176px,#649918 192px,#879916 208px,#998612 224px,#996a0d 240px,#99560a 256px,#994707 272px,#993b05 288px,#993103 304px,#992902 320px,#992201 336px,#991c00 352px,#991700 368px,#991300 384px,#990f00 400px,#990c00 416px,#990900 432px,#990600 448px,#990400 464px,#990100 480px,#990000 496px,#990000 512px,#990000 528px,#990000 544px,#990000 560px,#990000 576px,#990000 592px,#990000 608px,#990000 624px,#990000 639px)"></div><div style="position:absolute;left:0;top:48px;width:639px;height:4px;background:linear-gradient(90deg,#009925 0px,#009924 16px,#009924 32px,#009924 48px,#009923 64px,#009923 80px,#009922 96px,#009922 112px,#009921 128px,#0c9921 144px,#269920 160px,#43991f 176px,#64991f 192px,#88991e 208px,#998519 224px,#996913 240px,#99550f 256px,#99460b 272px,#993a09 288px,#993007 304px,#992805 320px,#992203 336px,#991c02 352px,#991701 368px,#991200 384px,#990f00 400px,#990b00 416px,#990800 432px,#990600 448px,#990300 464px,#990100 480px,#990000 496px,#990000 512px,#990000 528px,#990000 544px,#990000 560px,#990000 576px,#990000 592px,#990000 608px,#990000 624px,#990000 639px)"></div><div style="position:absolute;left:0;top:52px;width:639px;height:4px;background:linear-gradient(90deg,#009929 0px,#009929 16px,#009929 32px,#009929 48px,#009928 64px,#009928 80px,#009928 96px,#009928 112px,#009927 128px,#0b9927 144px,#269927 160px,#439926 176px,#649926 192px,#899925 208px,#998420 224px,#996819 240px,#995414 256px,#994510 272px,#99390d 288px,#992f0a 304px,#992708 320px,#992106 336px,#991b05 352px,#991604 368px,#991203 384px,#990e02 400px,#990b01 416px,#990800 432px,#990500 448px,#990300 464px,#990000 480px,#990000 496px,#990000 512px,#990000 528px,#990000 544px,#990000 560px,#990000 576px,#990000 592px,#990000 608px,#990000 624px,#990000 639px)"></div><div style="position:absolute;left:0;top:56px;width:639px;height:4px;background:linear-gradient(90deg,#00992e 0px,#00992e 16px,#00992e 32px,#00992e 48px,#00992d 64px,#00992d 80px,#00992d 96px,#00992d 112px,#00992d 128px,#0a992d 144px,#25992d 160px,#43992d 176px,#64992d 192px,#89992d 208px,#998326 224px,#99671e 240px,#995318 256px,#994414 272px,#993810 288px,#992f0e 304px,#99270b 320px,#992009 336px,#991a08 352px,#991506 368px,#991105 384px,#990d04 400px,#990a03 416px,#990702 432px,#990501 448px,#990200 464px,#990000 480px,#990000 496px,#990000 512px,#990000 528px,#990000 544px,#990000 560px,#990000 576px,#990000 592px,#990000 608px,#990000 624px,#990000 639px)"></div><div style="position:absolute;left:0;top:60px;width:639px;height:4px;background:linear-gradient(90deg,#009932 0px,#009932 16px,#009932 32px,#009933 48px,#009933 64px,#009933 80px,#009933 96px,#009933 112px,#009934 128px,#099934 144px,#249934 160px,#439934 176px,#649935 192px,#8a9935 208px,#99822d 224px,#996624 240px,#99521d 256px,#994318 272px,#993714 288px,#992e11 304px,#99260e 320px,#991f0c 336px,#991a0a 352px,#991509 368px,#991007 384px,#990d06 400px,#990a05 416px,#990704 432px,#990403 448px,#990202 464px,#990001 480px,#990001 496px,#990000 512px,#990000 528px,#990000 544px,#990000 560px,#990000 576px,#990000 592px,#990000 608px,#990000 624px,#990000 639px)"></div><div style="position:absolute;left:0;top:64px;width:639px;height:4px;background:linear-gradient(90deg,#009937 0px,#009937 16px,#009937 32px,#009938 48px,#009938 64px,#009938 80px,#009939 96px,#009939 112px,#00993a 128px,#08993a 144px,#24993b 160px,#42993c 176px,#65993d 192px,#8b993d 208px,#998134 224px,#99652a 240px,#995122 256px,#99421d 272px,#993618 288px,#992d15 304px,#992512 320px,#991e0f 336px,#99190d 352px,#99140b 368px,#99100a 384px,#990c08 400px,#990907 416px,#990606 432px,#990305 448px,#990104 464px,#990003 480px,#990002 496px,#990002 512px,#990001 528px,#990000 544px,#990000 560px,#990000 576px,#990000 592px,#990000 608px,#990000 624px,#990000 639px)"></div><div style="position:absolute;left:0;top:68px;width:639px;height:4px;background:linear-gradient(90deg,#00993b 0px,#00993c 16px,#00993c 32px,#00993d 48px,#00993d 64px,#00993e 80px,#00993f 96px,#009940 112px,#009940 128px,#079941 144px,#239942 160px,#429943 176px,#659945 192px,#8c9946 208px,#99803c 224px,#996430 240px,#995028 256px,#994121 272px,#99361c 288px,#992c18 304px,#992415 320px,#991e12 336px,#991810 352px,#99130e 368px,#990f0c 384px,#990c0a 400px,#990809 416px,#990508 432px,#990307 448px,#990106 464px,#990005 480px,#990004 496px,#990003 512px,#990003 528px,#990002 544px,#990001 560px,#990001 576px,#990000 592px,#990000 608px,#990000 624px,#990000 639px)"></div><div style="position:absolute;left:0;top:72px;width:639px;height:4px;background:linear-gradient(90deg,#009940 0px,#009941 16px,#009941 32px,#009942 48px,#009943 64px,#009944 80px,#009945 96px,#009946 112px,#009947 128px,#069948 144px,#22994a 160px,#42994b 176px,#65994d 192px,#8c994f 208px,#997e43 224px,#996336 240px,#994f2d 256px,#994026 272px,#993520 288px,#992b1c 304px,#992318 320px,#991d15 336px,#991712 352px,#991310 368px,#990e0e 384px,#990b0d 400px,#99080b 416px,#99050a 432px,#990209 448px,#990007 464px,#990006 480px,#990006 496px,#990005 512px,#990004 528px,#990003 544px,#990003 560px,#990002 576px,#990002 592px,#990001 608px,#990001 624px,#990000 639px)"></div><div style="position:absolute;left:0;top:76px;width:639px;height:4px;background:linear-gradient(90deg,#009945 0px,#009946 16px,#009947 32px,#009948 48px,#009949 64px,#00994a 80px,#00994b 96px,#00994c 112px,#00994e 128px,#05994f 144px,#229951 160px,#429953 176px,#659955 192px,#8d9958 208px,#997d4a 224px,#99623c 240px,#994e32 256px,#993f2a 272px,#993424 288px,#992a1f 304px,#99231b 320px,#991c18 336px,#991715 352px,#991213 368px,#990e11 384px,#990a0f 400px,#99070d 416px,#99040c 432px,#99020a 448px,#990009 464px,#990008 480px,#990007 496px,#990006 512px,#990005 528px,#990005 544px,#990004 560px,#990003 576px,#990003 592px,#990002 608px,#990002 624px,#990001 639px)"></div><div style="position:absolute;left:0;top:80px;width:639px;height:4px;background:linear-gradient(90deg,#00994a 0px,#00994b 16px,#00994c 32px,#00994d 48px,#00994e 64px,#009950 80px,#009951 96px,#009953 112px,#009955 128px,#049957 144px,#219959 160px,#41995b 176px,#65995e 192px,#8e9961 208px,#997c52 224px,#996142 240px,#994d37 256px,#993e2f 272px,#993328 288px,#992923 304px,#99221f 320px,#991b1b 336px,#991618 352px,#991115 368px,#990d13 384px,#990a11 400px,#99060f 416px,#99040e 432px,#99010c 448px,#99000b 464px,#99000a 480px,#990009 496px,#990008 512px,#990007 528px,#990006 544px,#990005 560px,#990005 576px,#990004 592px,#990003 608px,#990003 624px,#990002 639px)"></div><div style="position:absolute;left:0;top:84px;width:639px;height:4px;background:linear-gradient(90deg,#00994f 0px,#009950 16px,#009951 32px,#009953 48px,#009954 64px,#009956 80px,#009958 96px,#00995a 112px,#00995c 128px,#03995e 144px,#209961 160px,#419964 176px,#659967 192px,#8f996b 208px,#997b59 224px,#996049 240px,#994c3d 256px,#993d33 272px,#99322c 288px,#992827 304px,#992122 320px,#991a1e 336px,#99151b 352px,#991018 368px,#990c15 384px,#990913 400px,#990611 416px,#990310 432px,#99010e 448px,#99000d 464px,#99000c 480px,#99000a 496px,#990009 512px,#990008 528px,#990008 544px,#990007 560px,#990006 576px,#990005 592px,#990005 608px,#990004 624px,#990004 639px)"></div><div style="position:absolute;left:0;top:88px;width:639px;height:4px;background:linear-gradient(90deg,#009954 0px,#009955 16px,#009957 32px,#009959 48px,#00995a 64px,#00995c 80px,#00995e 96px,#009961 112px,#009963 128px,#029966 144px,#209969 160px,#41996d 176px,#669970 192px,#909975 208px,#997a61 224px,#995f4f 240px,#994b42 256px,#993c38 272px,#993130 288px,#99282a 304px,#992025 320px,#991a21 336px,#99141e 352px,#99101b 368px,#990c18 384px,#990816 400px,#990514 416px,#990212 432px,#990010 448px,#99000f 464px,#99000d 480px,#99000c 496px,#99000b 512px,#99000a 528px,#990009 544px,#990008 560px,#990007 576px,#990007 592px,#990006 608px,#990005 624px,#990005 639px)"></div><div style="position:absolute;left:0;top:92px;width:639px;height:4px;background:linear-gradient(90deg,#009959 0px,#00995b 16px,#00995d 32px,#00995e 48px,#009960 64px,#009963 80px,#009965 96px,#009968 112px,#00996b 128px,#01996e 144px,#1f9971 160px,#409975 176px,#66997a 192px,#91997f 208px,#997969 224px,#995d55 240px,#994a47 256px,#993b3d 272px,#993035 288px,#99272e 304px,#991f29 320px,#991924 336px,#991420 352px,#990f1d 368px,#990b1a 384px,#990818 400px,#990516 416px,#990214 432px,#990012 448px,#990010 464px,#99000f 480px,#99000e 496px,#99000d 512px,#99000b 528px,#99000a 544px,#99000a 560px,#990009 576px,#990008 592px,#990007 608px,#990007 624px,#990006 639px)"></div><div style="position:absolute;left:0;top:96px;width:639px;height:4px;background:linear-gradient(90deg,#00995f 0px,#009960 16px,#009962 32px,#009964 48px,#009967 64px,#009969 80px,#00996c 96px,#00996f 112px,#009972 128px,#009976 144px,#1e997a 160px,#40997f 176px,#669984 192px,#92998a 208px,#997871 224px,#995c5c 240px,#99494d 256px,#993a42 272px,#992f39 288px,#992632 304px,#991e2c 320px,#991827 336px,#991323 352px,#990e20 368px,#990a1d 384px,#99071a 400px,#990418 416px,#990116 432px,#990014 448px,#990012 464px,#990011 480px,#99000f 496px,#99000e 512px,#99000d 528px,#99000c 544px,#99000b 560px,#99000a 576px,#990009 592px,#990008 608px,#990008 624px,#990007 639px)"></div><div style="position:absolute;left:0;top:100px;width:639px;height:4px;background:linear-gradient(90deg,#009964 0px,#009966 16px,#009968 32px,#00996b 48px,#00996d 64px,#009970 80px,#009973 96px,#009976 112px,#00997a 128px,#00997e 144px,#1d9983 160px,#409988 176px,#66998e 192px,#939995 208px,#997679 224px,#995b63 240px,#994852 256px,#993946 272px,#992e3d 288px,#992536 304px,#991d2f 320px,#99172a 336px,#991226 352px,#990e22 368px,#990a1f 384px,#99061c 400px,#99031a 416px,#990118 432px,#990016 448px,#990014 464px,#990012 480px,#990011 496px,#990010 512px,#99000e 528px,#99000d 544px,#99000c 560px,#99000b 576px,#99000a 592px,#99000a 608px,#990009 624px,#990008 639px)"></div><div style="position:absolute;left:0;top:104px;width:639px;height:4px;background:linear-gradient(90deg,#009969 0px,#00996c 16px,#00996e 32px,#009971 48px,#009974 64px,#009977 80px,#00997a 96px,#00997e 112px,#009982 128px,#009987 144px,#1c998c 160px,#3f9992 176px,#679999 192px,#8d9299 208px,#997581 224px,#995a69 240px,#994658 256px,#99384b 272px,#992d41 288px,#992439 304px,#991c33 320px,#99162e 336px,#991129 352px,#990d25 368px,#990922 384px,#99061f 400px,#99031c 416px,#99001a 432px,#990018 448px,#990016 464px,#990014 480px,#990013 496px,#990011 512px,#990010 528px,#99000f 544px,#99000e 560px,#99000d 576px,#99000c 592px,#99000b 608px,#99000a 624px,#990009 639px)"></div><div style="position:absolute;left:0;top:108px;width:639px;height:4px;background:linear-gradient(90deg,#00996f 0px,#009971 16px,#009974 32px,#009977 48px,#00997a 64px,#00997e 80px,#009982 96px,#009986 112px,#00998b 128px,#009990 144px,#1b9996 160px,#3e9699 176px,#608f99 192px,#848899 208px,#99748a 224px,#995970 240px,#99455e 256px,#993750 272px,#992c46 288px,#99233d 304px,#991c36 320px,#991631 336px,#99102c 352px,#990c28 368px,#990824 384px,#990521 400px,#99021e 416px,#99001c 432px,#99001a 448px,#990018 464px,#990016 480px,#990014 496px,#990013 512px,#990012 528px,#990010 544px,#99000f 560px,#99000e 576px,#99000d 592px,#99000c 608px,#99000b 624px,#99000b 639px)"></div><div style="position:absolute;left:0;top:112px;width:639px;height:4px;background:linear-gradient(90deg,#009975 0px,#009977 16px,#00997a 32px,#00997e 48px,#009981 64px,#009985 80px,#009989 96px,#00998e 112px,#009993 128px,#009999 144px,#199399 160px,#398d99 176px,#5a8699 192px,#7c7f99 208px,#997392 224px,#995777 240px,#994464 256px,#993655 272px,#992b4a 288px,#992241 304px,#991b3a 320px,#991534 336px,#99102f 352px,#990b2a 368px,#990827 384px,#990423 400px,#990120 416px,#99001e 432px,#99001c 448px,#99001a 464px,#990018 480px,#990016 496px,#990014 512px,#990013 528px,#990012 544px,#990011 560px,#99000f 576px,#99000e 592px,#99000d 608px,#99000d 624px,#99000c 639px)"></div><div style="position:absolute;left:0;top:116px;width:639px;height:4px;background:linear-gradient(90deg,#00997a 0px,#00997d 16px,#009981 32px,#009984 48px,#009988 64px,#00998c 80px,#009991 96px,#009996 112px,#009699 128px,#009099 144px,#178a99 160px,#358499 176px,#557e99 192px,#757799 208px,#977099 224px,#99567e 240px,#994369 256px,#99355a 272px,#992a4e 288px,#992145 304px,#991a3d 320px,#991437 336px,#990f32 352px,#990b2d 368px,#990729 384px,#990426 400px,#990123 416px,#990020 432px,#99001e 448px,#99001b 464px,#990019 480px,#990018 496px,#990016 512px,#990015 528px,#990013 544px,#990012 560px,#990011 576px,#990010 592px,#99000f 608px,#99000e 624px,#99000d 639px)"></div><div style="position:absolute;left:0;top:120px;width:639px;height:4px;background:linear-gradient(90deg,#009980 0px,#009984 16px,#009987 32px,#00998b 48px,#00998f 64px,#009994 80px,#009999 96px,#009499 112px,#008e99 128px,#008899 144px,#158299 160px,#327c99 176px,#507699 192px,#6f6f99 208px,#8f6999 224px,#995585 240px,#99426f 256px,#99345f 272px,#992953 288px,#992049 304px,#991941 320px,#99133a 336px,#990e35 352px,#990a30 368px,#99062c 384px,#990328 400px,#990025 416px,#990022 432px,#990020 448px,#99001d 464px,#99001b 480px,#990019 496px,#990018 512px,#990016 528px,#990015 544px,#990013 560px,#990012 576px,#990011 592px,#990010 608px,#99000f 624px,#99000e 639px)"></div><div style="position:absolute;left:0;top:124px;width:639px;height:4px;background:linear-gradient(90deg,#009986 0px,#00998a 16px,#00998e 32px,#009992 48px,#009997 64px,#009799 80px,#009199 96px,#008c99 112px,#008799 128px,#008199 144px,#137b99 160px,#2f7599 176px,#4b6f99 192px,#696999 208px,#876299 224px,#99548c 240px,#994175 256px,#993264 272px,#992857 288px,#991f4d 304px,#991845 320px,#99123e 336px,#990d38 352px,#990933 368px,#99052e 384px,#99022a 400px,#990027 416px,#990024 432px,#990022 448px,#99001f 464px,#99001d 480px,#99001b 496px,#990019 512px,#990018 528px,#990016 544px,#990015 560px,#990013 576px,#990012 592px,#990011 608px,#990010 624px,#99000f 639px)"></div><div style="position:absolute;left:0;top:128px;width:639px;height:4px;background:linear-gradient(90deg,#00998c 0px,#009990 16px,#009994 32px,#009999 48px,#009499 64px,#008f99 80px,#008a99 96px,#008599 112px,#008099 128px,#007a99 144px,#117499 160px,#2c6f99 176px,#476999 192px,#636299 208px,#815c99 224px,#995294 240px,#993f7b 256px,#99316a 272px,#99275c 288px,#991e51 304px,#991748 320px,#991141 336px,#990c3b 352px,#990835 368px,#990531 384px,#99022d 400px,#990029 416px,#990026 432px,#990024 448px,#990021 464px,#99001f 480px,#99001d 496px,#99001b 512px,#990019 528px,#990018 544px,#990016 560px,#990015 576px,#990014 592px,#990012 608px,#990011 624px,#990010 639px)"></div><div style="position:absolute;left:0;top:132px;width:639px;height:4px;background:linear-gradient(90deg,#009993 0px,#009997 16px,#009799 32px,#009299 48px,#008d99 64px,#008999 80px,#008499 96px,#007e99 112px,#007999 128px,#007499 144px,#106e99 160px,#296999 176px,#436399 192px,#5e5d99 208px,#7a5699 224px,#975099 240px,#993e82 256px,#99306f 272px,#992560 288px,#991d55 304px,#99164c 320px,#991044 336px,#990c3e 352px,#990838 368px,#990433 384px,#99012f 400px,#99002c 416px,#990028 432px,#990026 448px,#990023 464px,#990021 480px,#99001e 496px,#99001d 512px,#99001b 528px,#990019 544px,#990018 560px,#990016 576px,#990015 592px,#990014 608px,#990013 624px,#990012 639px)"></div><div style="position:absolute;left:0;top:136px;width:639px;height:4px;background:linear-gradient(90deg,#009999 0px,#009599 16px,#009099 32px,#008c99 48px,#008799 64px,#008299 80px,#007d99 96px,#007899 112px,#007399 128px,#006e99 144px,#0e6899 160px,#276399 176px,#405d99 192px,#5a5799 208px,#755199 224px,#904b99 240px,#993d88 256px,#992f74 272px,#992465 288px,#991c59 304px,#99154f 320px,#991047 336px,#990b41 352px,#99073b 368px,#990336 384px,#990032 400px,#99002e 416px,#99002b 432px,#990028 448px,#990025 464px,#990022 480px,#990020 496px,#99001e 512px,#99001c 528px,#99001b 544px,#990019 560px,#990018 576px,#990016 592px,#990015 608px,#990014 624px,#990013 639px)"></div><div style="position:absolute;left:0;top:140px;width:639px;height:4px;background:linear-gradient(90deg,#009399 0px,#008e99 16px,#008a99 32px,#008699 48px,#008199 64px,#007c99 80px,#007899 96px,#007399 112px,#006e99 128px,#006899 144px,#0d6399 160px,#245e99 176px,#3d5899 192px,#565299 208px,#6f4c99 224px,#8a4699 240px,#993c8e 256px,#992e79 272px,#99236a 288px,#991b5d 304px,#991453 320px,#990f4b 336px,#990a44 352px,#99063e 368px,#990339 384px,#990034 400px,#990030 416px,#99002d 432px,#99002a 448px,#990027 464px,#990024 480px,#990022 496px,#990020 512px,#99001e 528px,#99001c 544px,#99001a 560px,#990019 576px,#990018 592px,#990016 608px,#990015 624px,#990014 639px)"></div><div style="position:absolute;left:0;top:144px;width:639px;height:4px;background:linear-gradient(90deg,#008d99 0px,#008999 16px,#008499 32px,#008099 48px,#007c99 64px,#007799 80px,#007299 96px,#006d99 112px,#006899 128px,#006399 144px,#0b5e99 160px,#225999 176px,#3a5399 192px,#524e99 208px,#6a4899 224px,#844299 240px,#993a94 256px,#992d7f 272px,#99226e 288px,#991a61 304px,#991357 320px,#990e4e 336px,#990947 352px,#990541 368px,#99023b 384px,#990037 400px,#990032 416px,#99002f 432px,#99002c 448px,#990029 464px,#990026 480px,#990024 496px,#990021 512px,#99001f 528px,#99001e 544px,#99001c 560px,#99001a 576px,#990019 592px,#990018 608px,#990016 624px,#990015 639px)"></div><div style="position:absolute;left:0;top:148px;width:639px;height:4px;background:linear-gradient(90deg,#008799 0px,#008399 16px,#007f99 32px,#007b99 48px,#007699 64px,#007299 80px,#006d99 96px,#006899 112px,#006499 128px,#005f99 144px,#0a5a99 160px,#205499 176px,#374f99 192px,#4e4a99 208px,#664499 224px,#7e3e99 240px,#973899 256px,#992b84 272px,#992173 288px,#991966 304px,#99125b 320px,#990d52 336px,#99084a 352px,#990443 368px,#99013e 384px,#990039 400px,#990035 416px,#990031 432px,#99002e 448px,#99002b 464px,#990028 480px,#990025 496px,#990023 512px,#990021 528px,#99001f 544px,#99001d 560px,#99001c 576px,#99001a 592px,#990019 608px,#990018 624px,#990016 639px)"></div><div style="position:absolute;left:0;top:152px;width:639px;height:4px;background:linear-gradient(90deg,#008299 0px,#007e99 16px,#007a99 32px,#007699 48px,#007199 64px,#006d99 80px,#006899 96px,#006499 112px,#005f99 128px,#005a99 144px,#095599 160px,#1e5099 176px,#344b99 192px,#4a4699 208px,#614099 224px,#793a99 240px,#913599 256px,#992a8a 272px,#992078 288px,#99186a 304px,#99115e 320px,#990c55 336px,#99074d 352px,#990446 368px,#990040 384px,#99003b 400px,#990037 416px,#990033 432px,#990030 448px,#99002c 464px,#99002a 480px,#990027 496px,#990025 512px,#990023 528px,#990021 544px,#99001f 560px,#99001d 576px,#99001c 592px,#99001a 608px,#990019 624px,#990018 639px)"></div><div style="position:absolute;left:0;top:156px;width:639px;height:4px;background:linear-gradient(90deg,#007d99 0px,#007999 16px,#007599 32px,#007199 48px,#006d99 64px,#006899 80px,#006499 96px,#005f99 112px,#005b99 128px,#005699 144px,#085199 160px,#1c4c99 176px,#324799 192px,#474299 208px,#5d3c99 224px,#743799 240px,#8b3199 256px,#99298f 272px,#991f7d 288px,#99176e 304px,#991062 320px,#990b58 336px,#990750 352px,#990349 368px,#990043 384px,#99003e 400px,#990039 416px,#990035 432px,#990032 448px,#99002e 464px,#99002b 480px,#990029 496px,#990026 512px,#990024 528px,#990022 544px,#990020 560px,#99001f 576px,#99001d 592px,#99001b 608px,#99001a 624px,#990019 639px)"></div><div style="position:absolute;left:0;top:160px;width:639px;height:4px;background:linear-gradient(90deg,#007999 0px,#007599 16px,#007199 32px,#006d99 48px,#006899 64px,#006499 80px,#006099 96px,#005b99 112px,#005799 128px,#005299 144px,#074d99 160px,#1b4899 176px,#2f4399 192px,#443e99 208px,#5a3999 224px,#703499 240px,#862e99 256px,#992895 272px,#991e82 288px,#991672 304px,#990f66 320px,#990a5c 336px,#990653 352px,#99024c 368px,#990046 384px,#990040 400px,#99003c 416px,#990037 432px,#990034 448px,#990030 464px,#99002d 480px,#99002b 496px,#990028 512px,#990026 528px,#990024 544px,#990022 560px,#990020 576px,#99001e 592px,#99001d 608px,#99001b 624px,#99001a 639px)"></div><div style="position:absolute;left:0;top:164px;width:639px;height:4px;background:linear-gradient(90deg,#007499 0px,#007099 16px,#006c99 32px,#006899 48px,#006499 64px,#006099 80px,#005c99 96px,#005799 112px,#005399 128px,#004e99 144px,#064a99 160px,#194599 176px,#2d4099 192px,#413b99 208px,#563699 224px,#6b3199 240px,#812b99 256px,#972699 272px,#991c87 288px,#991577 304px,#990e6a 320px,#99095f 336px,#990556 352px,#99014f 368px,#990049 384px,#990043 400px,#99003e 416px,#99003a 432px,#990036 448px,#990032 464px,#99002f 480px,#99002c 496px,#99002a 512px,#990027 528px,#990025 544px,#990023 560px,#990021 576px,#990020 592px,#99001e 608px,#99001d 624px,#99001b 639px)"></div><div style="position:absolute;left:0;top:168px;width:639px;height:4px;background:linear-gradient(90deg,#007099 0px,#006c99 16px,#006899 32px,#006499 48px,#006099 64px,#005c99 80px,#005899 96px,#005499 112px,#004f99 128px,#004b99 144px,#054699 160px,#184299 176px,#2b3d99 192px,#3f3899 208px,#533399 224px,#672e99 240px,#7c2999 256px,#922399 272px,#991b8c 288px,#99147b 304px,#990d6e 320px,#990863 336px,#99045a 352px,#990052 368px,#99004b 384px,#990045 400px,#990040 416px,#99003c 432px,#990038 448px,#990034 464px,#990031 480px,#99002e 496px,#99002b 512px,#990029 528px,#990027 544px,#990025 560px,#990023 576px,#990021 592px,#99001f 608px,#99001e 624px,#99001c 639px)"></div><div style="position:absolute;left:0;top:172px;width:639px;height:4px;background:linear-gradient(90deg,#006c99 0px,#006899 16px,#006599 32px,#006199 48px,#005d99 64px,#005999 80px,#005499 96px,#005099 112px,#004c99 128px,#004899 144px,#044399 160px,#163f99 176px,#293a99 192px,#3c3599 208px,#503099 224px,#632b99 240px,#782699 256px,#8d2199 272px,#991a91 288px,#99127f 304px,#990c72 320px,#990766 336px,#99035d 352px,#990055 368px,#99004e 384px,#990048 400px,#990043 416px,#99003e 432px,#99003a 448px,#990036 464px,#990033 480px,#990030 496px,#99002d 512px,#99002b 528px,#990028 544px,#990026 560px,#990024 576px,#990022 592px,#990021 608px,#99001f 624px,#99001e 639px)"></div><div style="position:absolute;left:0;top:176px;width:639px;height:4px;background:linear-gradient(90deg,#006899 0px,#006599 16px,#006199 32px,#005d99 48px,#005999 64px,#005599 80px,#005199 96px,#004d99 112px,#004999 128px,#004499 144px,#034099 160px,#153c99 176px,#273799 192px,#3a3299 208px,#4d2e99 224px,#602999 240px,#742499 256px,#881f99 272px,#991996 288px,#991184 304px,#990b76 320px,#99066a 336px,#990260 352px,#990058 368px,#990051 384px,#99004a 400px,#990045 416px,#990040 432px,#99003c 448px,#990038 464px,#990035 480px,#990032 496px,#99002f 512px,#99002c 528px,#99002a 544px,#990028 560px,#990026 576px,#990024 592px,#990022 608px,#990020 624px,#99001f 639px)"></div><div style="position:absolute;left:0;top:180px;width:639px;height:4px;background:linear-gradient(90deg,#006599 0px,#006199 16px,#005d99 32px,#005a99 48px,#005699 64px,#005299 80px,#004e99 96px,#004a99 112px,#004699 128px,#004199 144px,#023d99 160px,#143999 176px,#253499 192px,#373099 208px,#4a2b99 224px,#5d2699 240px,#702199 256px,#831c99 272px,#971799 288px,#991088 304px,#990a7a 320px,#99056d 336px,#990163 352px,#99005b 368px,#990053 384px,#99004d 400px,#990047 416px,#990042 432px,#99003e 448px,#99003a 464px,#990037 480px,#990033 496px,#990030 512px,#99002e 528px,#99002b 544px,#990029 560px,#990027 576px,#990025 592px,#990023 608px,#990022 624px,#990020 639px)"></div><div style="position:absolute;left:0;top:184px;width:639px;height:4px;background:linear-gradient(90deg,#006199 0px,#005e99 16px,#005a99 32px,#005699 48px,#005399 64px,#004f99 80px,#004b99 96px,#004799 112px,#004399 128px,#003f99 144px,#023a99 160px,#133699 176px,#243299 192px,#352d99 208px,#472999 224px,#592499 240px,#6c1f99 256px,#7f1a99 272px,#921699 288px,#990f8d 304px,#99097e 320px,#990471 336px,#990067 352px,#99005e 368px,#990056 384px,#990050 400px,#99004a 416px,#990045 432px,#990040 448px,#99003c 464px,#990038 480px,#990035 496px,#990032 512px,#99002f 528px,#99002d 544px,#99002b 560px,#990028 576px,#990026 592px,#990025 608px,#990023 624px,#990021 639px)"></div><div style="position:absolute;left:0;top:188px;width:639px;height:4px;background:linear-gradient(90deg,#005e99 0px,#005b99 16px,#005799 32px,#005399 48px,#005099 64px,#004c99 80px,#004899 96px,#004499 112px,#004099 128px,#003c99 144px,#013899 160px,#113499 176px,#222f99 192px,#332b99 208px,#452699 224px,#562299 240px,#681d99 256px,#7b1999 272px,#8e1499 288px,#990e91 304px,#990882 320px,#990475 336px,#99006a 352px,#990061 368px,#990059 384px,#990052 400px,#99004c 416px,#990047 432px,#990042 448px,#99003e 464px,#99003a 480px,#990037 496px,#990034 512px,#990031 528px,#99002e 544px,#99002c 560px,#99002a 576px,#990028 592px,#990026 608px,#990024 624px,#990023 639px)"></div><div style="position:absolute;left:0;top:192px;width:639px;height:4px;background:linear-gradient(90deg,#005b99 0px,#005799 16px,#005499 32px,#005099 48px,#004d99 64px,#004999 80px,#004599 96px,#004199 112px,#003d99 128px,#003999 144px,#003599 160px,#103199 176px,#212d99 192px,#312999 208px,#422499 224px,#532099 240px,#651b99 256px,#771799 272px,#891299 288px,#990d96 304px,#990786 320px,#990378 336px,#99006d 352px,#990064 368px,#99005c 384px,#990055 400px,#99004f 416px,#990049 432px,#990044 448px,#990040 464px,#99003c 480px,#990039 496px,#990036 512px,#990033 528px,#990030 544px,#99002e 560px,#99002b 576px,#990029 592px,#990027 608px,#990025 624px,#990024 639px)"></div><div style="position:absolute;left:0;top:196px;width:639px;height:4px;background:linear-gradient(90deg,#005899 0px,#005599 16px,#005199 32px,#004e99 48px,#004a99 64px,#004699 80px,#004399 96px,#003f99 112px,#003b99 128px,#003799 144px,#003399 160px,#0f2f99 176px,#1f2b99 192px,#2f2799 208px,#402299 224px,#511e99 240px,#621999 256px,#731599 272px,#851099 288px,#970c99 304px,#99068a 320px,#99027c 336px,#990071 352px,#990067 368px,#99005f 384px,#990057 400px,#990051 416px,#99004c 432px,#990047 448px,#990042 464px,#99003e 480px,#99003b 496px,#990037 512px,#990034 528px,#990032 544px,#99002f 560px,#99002d 576px,#99002b 592px,#990029 608px,#990027 624px,#990025 639px)"></div><div style="position:absolute;left:0;top:200px;width:639px;height:4px;background:linear-gradient(90deg,#005599 0px,#005299 16px,#004e99 32px,#004b99 48px,#004799 64px,#004499 80px,#004099 96px,#003c99 112px,#003899 128px,#003599 144px,#003199 160px,#0e2d99 176px,#1e2999 192px,#2e2599 208px,#3e2099 224px,#4e1c99 240px,#5f1899 256px,#701399 272px,#810f99 288px,#930a99 304px,#99058e 320px,#990180 336px,#990074 352px,#99006a 368px,#990061 384px,#99005a 400px,#990054 416px,#99004e 432px,#990049 448px,#990044 464px,#990040 480px,#99003c 496px,#990039 512px,#990036 528px,#990033 544px,#990031 560px,#99002e 576px,#99002c 592px,#99002a 608px,#990028 624px,#990026 639px)"></div><div style="position:absolute;left:0;top:204px;width:639px;height:4px;background:linear-gradient(90deg,#005299 0px,#004f99 16px,#004c99 32px,#004899 48px,#004599 64px,#004199 80px,#003e99 96px,#003a99 112px,#003699 128px,#003299 144px,#002f99 160px,#0d2b99 176px,#1d2799 192px,#2c2399 208px,#3c1f99 224px,#4c1a99 240px,#5c1699 256px,#6d1299 272px,#7d0d99 288px,#8f0999 304px,#990492 320px,#990084 336px,#990077 352px,#99006d 368px,#990064 384px,#99005d 400px,#990056 416px,#990050 432px,#99004b 448px,#990046 464px,#990042 480px,#99003e 496px,#99003b 512px,#990038 528px,#990035 544px,#990032 560px,#990030 576px,#99002d 592px,#99002b 608px,#990029 624px,#990028 639px)"></div><div style="position:absolute;left:0;top:208px;width:639px;height:4px;background:linear-gradient(90deg,#005099 0px,#004c99 16px,#004999 32px,#004699 48px,#004299 64px,#003f99 80px,#003b99 96px,#003899 112px,#003499 128px,#003099 144px,#002d99 160px,#0c2999 176px,#1b2599 192px,#2a2199 208px,#3a1d99 224px,#491999 240px,#591499 256px,#691099 272px,#7a0c99 288px,#8b0799 304px,#990396 320px,#990087 336px,#99007b 352px,#990070 368px,#990067 384px,#99005f 400px,#990058 416px,#990052 432px,#99004d 448px,#990048 464px,#990044 480px,#990040 496px,#99003d 512px,#990039 528px,#990036 544px,#990034 560px,#990031 576px,#99002f 592px,#99002d 608px,#99002b 624px,#990029 639px)"></div><div style="position:absolute;left:0;top:212px;width:639px;height:4px;background:linear-gradient(90deg,#004d99 0px,#004a99 16px,#004799 32px,#004399 48px,#004099 64px,#003d99 80px,#003999 96px,#003699 112px,#003299 128px,#002e99 144px,#002b99 160px,#0c2799 176px,#1a2399 192px,#291f99 208px,#381b99 224px,#471799 240px,#571399 256px,#660f99 272px,#760b99 288px,#870699 304px,#970299 320px,#99008b 336px,#99007e 352px,#990073 368px,#99006a 384px,#990062 400px,#99005b 416px,#990055 432px,#99004f 448px,#99004a 464px,#990046 480px,#990042 496px,#99003e 512px,#99003b 528px,#990038 544px,#990035 560px,#990033 576px,#990030 592px,#99002e 608px,#99002c 624px,#99002a 639px)"></div><div style="position:absolute;left:0;top:216px;width:639px;height:4px;background:linear-gradient(90deg,#004b99 0px,#004899 16px,#004499 32px,#004199 48px,#003e99 64px,#003a99 80px,#003799 96px,#003399 112px,#003099 128px,#002c99 144px,#002999 160px,#0b2599 176px,#192199 192px,#271d99 208px,#361999 224px,#451699 240px,#541199 256px,#630d99 272px,#730999 288px,#830599 304px,#930199 320px,#99008f 336px,#990082 352px,#990077 368px,#99006d 384px,#990065 400px,#99005d 416px,#990057 432px,#990051 448px,#99004c 464px,#990048 480px,#990044 496px,#990040 512px,#99003d 528px,#99003a 544px,#990037 560px,#990034 576px,#990032 592px,#99002f 608px,#99002d 624px,#99002b 639px)"></div><div style="position:absolute;left:0;top:220px;width:639px;height:4px;background:linear-gradient(90deg,#004899 0px,#004599 16px,#004299 32px,#003f99 48px,#003c99 64px,#003899 80px,#003599 96px,#003199 112px,#002e99 128px,#002a99 144px,#002799 160px,#0a2399 176px,#182099 192px,#261c99 208px,#341899 224px,#431499 240px,#521099 256px,#610c99 272px,#700899 288px,#800499 304px,#8f0099 320px,#990093 336px,#990085 352px,#99007a 368px,#990070 384px,#990067 400px,#990060 416px,#990059 432px,#990054 448px,#99004e 464px,#99004a 480px,#990046 496px,#990042 512px,#99003e 528px,#99003b 544px,#990038 560px,#990035 576px,#990033 592px,#990031 608px,#99002f 624px,#99002d 639px)"></div><div style="position:absolute;left:0;top:224px;width:639px;height:4px;background:linear-gradient(90deg,#004699 0px,#004399 16px,#004099 32px,#003d99 48px,#003a99 64px,#003699 80px,#003399 96px,#003099 112px,#002c99 128px,#002999 144px,#002599 160px,#092299 176px,#171e99 192px,#251a99 208px,#331699 224px,#411399 240px,#4f0f99 256px,#5e0b99 272px,#6d0799 288px,#7c0399 304px,#8c0099 320px,#990097 336px,#990089 352px,#99007d 368px,#990073 384px,#99006a 400px,#990062 416px,#99005c 432px,#990056 448px,#990051 464px,#99004c 480px,#990047 496px,#990044 512px,#990040 528px,#99003d 544px,#99003a 560px,#990037 576px,#990034 592px,#990032 608px,#990030 624px,#99002e 639px)"></div><div style="position:absolute;left:0;top:228px;width:639px;height:4px;background:linear-gradient(90deg,#004499 0px,#004199 16px,#003e99 32px,#003b99 48px,#003899 64px,#003499 80px,#003199 96px,#002e99 112px,#002a99 128px,#002799 144px,#002399 160px,#092099 176px,#161c99 192px,#231999 208px,#311599 224px,#3f1199 240px,#4d0d99 256px,#5c0a99 272px,#6a0699 288px,#790299 304px,#880099 320px,#970099 336px,#99008c 352px,#990080 368px,#990076 384px,#99006d 400px,#990065 416px,#99005e 432px,#990058 448px,#990053 464px,#99004e 480px,#990049 496px,#990045 512px,#990042 528px,#99003e 544px,#99003b 560px,#990038 576px,#990036 592px,#990033 608px,#990031 624px,#99002f 639px)"></div><div style="position:absolute;left:0;top:232px;width:639px;height:4px;background:linear-gradient(90deg,#004299 0px,#003f99 16px,#003c99 32px,#003999 48px,#003699 64px,#003299 80px,#002f99 96px,#002c99 112px,#002999 128px,#002599 144px,#002299 160px,#081e99 176px,#151b99 192px,#221799 208px,#301499 224px,#3d1099 240px,#4b0c99 256px,#590899 272px,#670599 288px,#760199 304px,#850099 320px,#940099 336px,#990090 352px,#990083 368px,#990079 384px,#990070 400px,#990068 416px,#990061 432px,#99005a 448px,#990055 464px,#990050 480px,#99004b 496px,#990047 512px,#990043 528px,#990040 544px,#99003d 560px,#99003a 576px,#990037 592px,#990035 608px,#990032 624px,#990030 639px)"></div><div style="position:absolute;left:0;top:236px;width:639px;height:4px;background:linear-gradient(90deg,#004099 0px,#003d99 16px,#003a99 32px,#003799 48px,#003499 64px,#003199 80px,#002e99 96px,#002a99 112px,#002799 128px,#002499 144px,#002099 160px,#071d99 176px,#141999 192px,#211699 208px,#2e1299 224px,#3b0f99 240px,#490b99 256px,#570799 272px,#650499 288px,#730099 304px,#810099 320px,#900099 336px,#990093 352px,#990087 368px,#99007c 384px,#990072 400px,#99006a 416px,#990063 432px,#99005d 448px,#990057 464px,#990052 480px,#99004d 496px,#990049 512px,#990045 528px,#990042 544px,#99003e 560px,#99003b 576px,#990039 592px,#990036 608px,#990034 624px,#990032 639px)"></div><div style="position:absolute;left:0;top:240px;width:639px;height:4px;background:linear-gradient(90deg,#003e99 0px,#003b99 16px,#003899 32px,#003599 48px,#003299 64px,#002f99 80px,#002c99 96px,#002999 112px,#002599 128px,#002299 144px,#001f99 160px,#071c99 176px,#131899 192px,#201599 208px,#2d1199 224px,#3a0e99 240px,#470a99 256px,#550699 272px,#620399 288px,#700099 304px,#7e0099 320px,#8d0099 336px,#990097 352px,#99008a 368px,#99007f 384px,#990075 400px,#99006d 416px,#990065 432px,#99005f 448px,#990059 464px,#990054 480px,#99004f 496px,#99004b 512px,#990047 528px,#990043 544px,#990040 560px,#99003d 576px,#99003a 592px,#990037 608px,#990035 624px,#990033 639px)"></div><div style="position:absolute;left:0;top:244px;width:639px;height:4px;background:linear-gradient(90deg,#003c99 0px,#003999 16px,#003699 32px,#003399 48px,#003099 64px,#002d99 80px,#002a99 96px,#002799 112px,#002499 128px,#002199 144px,#001d99 160px,#061a99 176px,#121799 192px,#1f1399 208px,#2b1099 224px,#380c99 240px,#450999 256px,#520599 272px,#600299 288px,#6d0099 304px,#7b0099 320px,#890099 336px,#970099 352px,#99008d 368px,#990082 384px,#990078 400px,#99006f 416px,#990068 432px,#990061 448px,#99005b 464px,#990056 480px,#990051 496px,#99004c 512px,#990048 528px,#990045 544px,#990041 560px,#99003e 576px,#99003c 592px,#990039 608px,#990036 624px,#990034 639px)"></div><div style="position:absolute;left:0;top:248px;width:639px;height:4px;background:linear-gradient(90deg,#003a99 0px,#003899 16px,#003599 32px,#003299 48px,#002f99 64px,#002c99 80px,#002999 96px,#002699 112px,#002299 128px,#001f99 144px,#001c99 160px,#051999 176px,#111699 192px,#1e1299 208px,#2a0f99 224px,#370b99 240px,#430899 256px,#500499 272px,#5d0199 288px,#6b0099 304px,#780099 320px,#860099 336px,#940099 352px,#990091 368px,#990085 384px,#99007b 400px,#990072 416px,#99006a 432px,#990063 448px,#99005d 464px,#990058 480px,#990053 496px,#99004e 512px,#99004a 528px,#990046 544px,#990043 560px,#990040 576px,#99003d 592px,#99003a 608px,#990038 624px,#990036 639px)"></div><div style="position:absolute;left:0;top:252px;width:639px;height:4px;background:linear-gradient(90deg,#003999 0px,#003699 16px,#003399 32px,#003099 48px,#002d99 64px,#002a99 80px,#002799 96px,#002499 112px,#002199 128px,#001e99 144px,#001b99 160px,#051899 176px,#111499 192px,#1d1199 208px,#290e99 224px,#350a99 240px,#420799 256px,#4e0399 272px,#5b0099 288px,#680099 304px,#750099 320px,#830099 336px,#910099 352px,#990094 368px,#990088 384px,#99007d 400px,#990074 416px,#99006d 432px,#990066 448px,#99005f 464px,#99005a 480px,#990055 496px,#990050 512px,#99004c 528px,#990048 544px,#990045 560px,#990041 576px,#99003e 592px,#99003c 608px,#990039 624px,#990037 639px)"></div><div style="position:absolute;left:0;top:256px;width:639px;height:4px;background:linear-gradient(90deg,#003799 0px,#003499 16px,#003199 32px,#002e99 48px,#002c99 64px,#002999 80px,#002699 96px,#002399 112px,#002099 128px,#001d99 144px,#001999 160px,#041699 176px,#101399 192px,#1c1099 208px,#280d99 224px,#340999 240px,#400699 256px,#4c0299 272px,#590099 288px,#660099 304px,#730099 320px,#800099 336px,#8d0099 352px,#990097 368px,#99008b 384px,#990080 400px,#990077 416px,#99006f 432px,#990068 448px,#990061 464px,#99005c 480px,#990057 496px,#990052 512px,#99004e 528px,#99004a 544px,#990046 560px,#990043 576px,#990040 592px,#99003d 608px,#99003a 624px,#990038 639px)"></div><div style="position:absolute;left:0;top:260px;width:639px;height:4px;background:linear-gradient(90deg,#003599 0px,#003399 16px,#003099 32px,#002d99 48px,#002a99 64px,#002799 80px,#002499 96px,#002199 112px,#001e99 128px,#001b99 144px,#001899 160px,#041599 176px,#0f1299 192px,#1b0f99 208px,#260c99 224px,#320899 240px,#3e0599 256px,#4b0299 272px,#570099 288px,#630099 304px,#700099 320px,#7d0099 336px,#8a0099 352px,#970099 368px,#99008e 384px,#990083 400px,#99007a 416px,#990071 432px,#99006a 448px,#990064 464px,#99005e 480px,#990059 496px,#990054 512px,#99004f 528px,#99004b 544px,#990048 560px,#990044 576px,#990041 592px,#99003e 608px,#99003c 624px,#990039 639px)"></div><div style="position:absolute;left:0;top:264px;width:639px;height:4px;background:linear-gradient(90deg,#003499 0px,#003199 16px,#002e99 32px,#002b99 48px,#002999 64px,#002699 80px,#002399 96px,#002099 112px,#001d99 128px,#001a99 144px,#001799 160px,#031499 176px,#0e1199 192px,#1a0e99 208px,#250b99 224px,#310799 240px,#3d0499 256px,#490199 272px,#550099 288px,#610099 304px,#6e0099 320px,#7a0099 336px,#870099 352px,#940099 368px,#990091 384px,#990086 400px,#99007c 416px,#990074 432px,#99006c 448px,#990066 464px,#990060 480px,#99005a 496px,#990056 512px,#990051 528px,#99004d 544px,#990049 560px,#990046 576px,#990043 592px,#990040 608px,#99003d 624px,#99003b 639px)"></div><div style="position:absolute;left:0;top:268px;width:639px;height:4px;background:linear-gradient(90deg,#003299 0px,#003099 16px,#002d99 32px,#002a99 48px,#002799 64px,#002499 80px,#002299 96px,#001f99 112px,#001c99 128px,#001999 144px,#001699 160px,#031399 176px,#0e1099 192px,#190d99 208px,#240a99 224px,#300699 240px,#3b0399 256px,#470099 272px,#530099 288px,#5f0099 304px,#6b0099 320px,#780099 336px,#840099 352px,#910099 368px,#990094 384px,#990089 400px,#99007f 416px,#990076 432px,#99006f 448px,#990068 464px,#990062 480px,#99005c 496px,#990057 512px,#990053 528px,#99004f 544px,#99004b 560px,#990047 576px,#990044 592px,#990041 608px,#99003e 624px,#99003c 639px)"></div><div style="position:absolute;left:0;top:272px;width:639px;height:4px;background:linear-gradient(90deg,#003199 0px,#002e99 16px,#002b99 32px,#002999 48px,#002699 64px,#002399 80px,#002099 96px,#001e99 112px,#001b99 128px,#001899 144px,#001599 160px,#021299 176px,#0d0f99 192px,#180c99 208px,#230999 224px,#2e0599 240px,#3a0299 256px,#450099 272px,#510099 288px,#5d0099 304px,#690099 320px,#750099 336px,#810099 352px,#8e0099 368px,#990097 384px,#99008c 400px,#990082 416px,#990079 432px,#990071 448px,#99006a 464px,#990064 480px,#99005e 496px,#990059 512px,#990055 528px,#990050 544px,#99004d 560px,#990049 576px,#990046 592px,#990043 608px,#990040 624px,#99003d 639px)"></div><div style="position:absolute;left:0;top:276px;width:639px;height:4px;background:linear-gradient(90deg,#002f99 0px,#002d99 16px,#002a99 32px,#002799 48px,#002599 64px,#002299 80px,#001f99 96px,#001c99 112px,#001999 128px,#001799 144px,#001499 160px,#021199 176px,#0c0e99 192px,#170b99 208px,#220899 224px,#2d0599 240px,#380299 256px,#440099 272px,#4f0099 288px,#5b0099 304px,#670099 320px,#730099 336px,#7f0099 352px,#8b0099 368px,#970099 384px,#99008f 400px,#990084 416px,#99007b 432px,#990073 448px,#99006c 464px,#990066 480px,#990060 496px,#99005b 512px,#990056 528px,#990052 544px,#99004e 560px,#99004b 576px,#990047 592px,#990044 608px,#990041 624px,#99003f 639px)"></div><div style="position:absolute;left:0;top:280px;width:639px;height:4px;background:linear-gradient(90deg,#002e99 0px,#002b99 16px,#002999 32px,#002699 48px,#002399 64px,#002199 80px,#001e99 96px,#001b99 112px,#001899 128px,#001699 144px,#001399 160px,#011099 176px,#0c0d99 192px,#160a99 208px,#210799 224px,#2c0499 240px,#370199 256px,#420099 272px,#4e0099 288px,#590099 304px,#650099 320px,#700099 336px,#7c0099 352px,#880099 368px,#940099 384px,#990092 400px,#990087 416px,#99007e 432px,#990076 448px,#99006f 464px,#990068 480px,#990062 496px,#99005d 512px,#990058 528px,#990054 544px,#990050 560px,#99004c 576px,#990049 592px,#990045 608px,#990043 624px,#990040 639px)"></div><div style="position:absolute;left:0;top:284px;width:639px;height:4px;background:linear-gradient(90deg,#002c99 0px,#002a99 16px,#002799 32px,#002599 48px,#002299 64px,#001f99 80px,#001d99 96px,#001a99 112px,#001799 128px,#001499 144px,#001299 160px,#010f99 176px,#0b0c99 192px,#160999 208px,#200699 224px,#2b0399 240px,#360099 256px,#410099 272px,#4c0099 288px,#570099 304px,#620099 320px,#6e0099 336px,#7a0099 352px,#850099 368px,#910099 384px,#990095 400px,#99008a 416px,#990080 432px,#990078 448px,#990071 464px,#99006a 480px,#990064 496px,#99005f 512px,#99005a 528px,#990055 544px,#990051 560px,#99004e 576px,#99004a 592px,#990047 608px,#990044 624px,#990041 639px)"></div><div style="position:absolute;left:0;top:288px;width:639px;height:4px;background:linear-gradient(90deg,#002b99 0px,#002999 16px,#002699 32px,#002499 48px,#002199 64px,#001e99 80px,#001c99 96px,#001999 112px,#001699 128px,#001399 144px,#001199 160px,#000e99 176px,#0b0b99 192px,#150899 208px,#1f0599 224px,#2a0299 240px,#340099 256px,#3f0099 272px,#4a0099 288px,#550099 304px,#600099 320px,#6c0099 336px,#770099 352px,#830099 368px,#8f0099 384px,#990098 400px,#99008d 416px,#990083 432px,#99007b 448px,#990073 464px,#99006c 480px,#990066 496px,#990061 512px,#99005c 528px,#990057 544px,#990053 560px,#99004f 576px,#99004c 592px,#990048 608px,#990045 624px,#990043 639px)"></div><div style="position:absolute;left:0;top:292px;width:639px;height:4px;background:linear-gradient(90deg,#002a99 0px,#002799 16px,#002599 32px,#002299 48px,#002099 64px,#001d99 80px,#001b99 96px,#001899 112px,#001599 128px,#001299 144px,#001099 160px,#000d99 176px,#0a0a99 192px,#140799 208px,#1e0499 224px,#290199 240px,#330099 256px,#3e0099 272px,#490099 288px,#530099 304px,#5e0099 320px,#6a0099 336px,#750099 352px,#800099 368px,#8c0099 384px,#970099 400px,#99008f 416px,#990086 432px,#99007d 448px,#990075 464px,#99006e 480px,#990068 496px,#990063 512px,#99005e 528px,#990059 544px,#990055 560px,#990051 576px,#99004d 592px,#99004a 608px,#990047 624px,#990044 639px)"></div><div style="position:absolute;left:0;top:296px;width:639px;height:4px;background:linear-gradient(90deg,#002999 0px,#002699 16px,#002499 32px,#002199 48px,#001f99 64px,#001c99 80px,#001999 96px,#001799 112px,#001499 128px,#001199 144px,#000f99 160px,#000c99 176px,#090999 192px,#130699 208px,#1e0499 224px,#280199 240px,#320099 256px,#3d0099 272px,#470099 288px,#520099 304px,#5d0099 320px,#670099 336px,#730099 352px,#7e0099 368px,#890099 384px,#950099 400px,#990092 416px,#990088 432px,#99007f 448px,#990078 464px,#990071 480px,#99006a 496px,#990065 512px,#99005f 528px,#99005b 544px,#990056 560px,#990052 576px,#99004f 592px,#99004b 608px,#990048 624px,#990045 639px)"></div><div style="position:absolute;left:0;top:300px;width:639px;height:4px;background:linear-gradient(90deg,#002799 0px,#002599 16px,#002399 32px,#002099 48px,#001e99 64px,#001b99 80px,#001899 96px,#001699 112px,#001399 128px,#001199 144px,#000e99 160px,#000b99 176px,#090899 192px,#130699 208px,#1d0399 224px,#270099 240px,#310099 256px,#3b0099 272px,#460099 288px,#500099 304px,#5b0099 320px,#650099 336px,#700099 352px,#7b0099 368px,#860099 384px,#920099 400px,#990095 416px,#99008b 432px,#990082 448px,#99007a 464px,#990073 480px,#99006c 496px,#990066 512px,#990061 528px,#99005c 544px,#990058 560px,#990054 576px,#990050 592px,#99004d 608px,#990049 624px,#990047 639px)"></div><div style="position:absolute;left:0;top:304px;width:639px;height:4px;background:linear-gradient(90deg,#002699 0px,#002499 16px,#002199 32px,#001f99 48px,#001c99 64px,#001a99 80px,#001799 96px,#001599 112px,#001299 128px,#001099 144px,#000d99 160px,#000a99 176px,#080899 192px,#120599 208px,#1c0299 224px,#260099 240px,#300099 256px,#3a0099 272px,#440099 288px,#4e0099 304px,#590099 320px,#630099 336px,#6e0099 352px,#790099 368px,#840099 384px,#8f0099 400px,#990098 416px,#99008d 432px,#990084 448px,#99007c 464px,#990075 480px,#99006e 496px,#990068 512px,#990063 528px,#99005e 544px,#99005a 560px,#990055 576px,#990052 592px,#99004e 608px,#99004b 624px,#990048 639px)"></div><div style="position:absolute;left:0;top:308px;width:639px;height:4px;background:linear-gradient(90deg,#002599 0px,#002399 16px,#002099 32px,#001e99 48px,#001b99 64px,#001999 80px,#001699 96px,#001499 112px,#001199 128px,#000f99 144px,#000c99 160px,#000a99 176px,#080799 192px,#110499 208px,#1b0199 224px,#250099 240px,#2f0099 256px,#390099 272px,#430099 288px,#4d0099 304px,#570099 320px,#620099 336px,#6c0099 352px,#770099 368px,#820099 384px,#8c0099 400px,#970099 416px,#990090 432px,#990087 448px,#99007e 464px,#990077 480px,#990070 496px,#99006a 512px,#990065 528px,#990060 544px,#99005b 560px,#990057 576px,#990053 592px,#990050 608px,#99004c 624px,#990049 639px)"></div><div style="position:absolute;left:0;top:312px;width:639px;height:4px;background:linear-gradient(90deg,#002499 0px,#002299 16px,#001f99 32px,#001d99 48px,#001a99 64px,#001899 80px,#001699 96px,#001399 112px,#001099 128px,#000e99 144px,#000b99 160px,#000999 176px,#070699 192px,#110399 208px,#1a0199 224px,#240099 240px,#2e0099 256px,#370099 272px,#410099 288px,#4b0099 304px,#550099 320px,#600099 336px,#6a0099 352px,#750099 368px,#7f0099 384px,#8a0099 400px,#950099 416px,#990093 432px,#990089 448px,#990081 464px,#990079 480px,#990072 496px,#99006c 512px,#990067 528px,#990061 544px,#99005d 560px,#990059 576px,#990055 592px,#990051 608px,#99004e 624px,#99004b 639px)"></div><div style="position:absolute;left:0;top:316px;width:639px;height:4px;background:linear-gradient(90deg,#002399 0px,#002199 16px,#001e99 32px,#001c99 48px,#001999 64px,#001799 80px,#001599 96px,#001299 112px,#001099 128px,#000d99 144px,#000b99 160px,#000899 176px,#070599 192px,#100399 208px,#1a0099 224px,#230099 240px,#2d0099 256px,#360099 272px,#400099 288px,#4a0099 304px,#540099 320px,#5e0099 336px,#680099 352px,#720099 368px,#7d0099 384px,#870099 400px,#920099 416px,#990095 432px,#99008c 448px,#990083 464px,#99007b 480px,#990074 496px,#99006e 512px,#990068 528px,#990063 544px,#99005e 560px,#99005a 576px,#990056 592px,#990052 608px,#99004f 624px,#99004c 639px)"></div><div style="position:absolute;left:0;top:320px;width:639px;height:4px;background:linear-gradient(90deg,#002299 0px,#002099 16px,#001d99 32px,#001b99 48px,#001999 64px,#001699 80px,#001499 96px,#001199 112px,#000f99 128px,#000c99 144px,#000a99 160px,#000799 176px,#060599 192px,#100299 208px,#190099 224px,#220099 240px,#2c0099 256px,#350099 272px,#3f0099 288px,#480099 304px,#520099 320px,#5c0099 336px,#660099 352px,#700099 368px,#7b0099 384px,#850099 400px,#900099 416px,#990098 432px,#99008e 448px,#990085 464px,#99007d 480px,#990076 496px,#990070 512px,#99006a 528px,#990065 544px,#990060 560px,#99005c 576px,#990058 592px,#990054 608px,#990050 624px,#99004d 639px)"></div><div style="position:absolute;left:0;top:324px;width:639px;height:4px;background:linear-gradient(90deg,#002199 0px,#001f99 16px,#001c99 32px,#001a99 48px,#001899 64px,#001599 80px,#001399 96px,#001099 112px,#000e99 128px,#000b99 144px,#000999 160px,#000699 176px,#060499 192px,#0f0199 208px,#180099 224px,#210099 240px,#2b0099 256px,#340099 272px,#3d0099 288px,#470099 304px,#510099 320px,#5b0099 336px,#640099 352px,#6e0099 368px,#780099 384px,#830099 400px,#8d0099 416px,#970099 432px,#990090 448px,#990088 464px,#990080 480px,#990078 496px,#990072 512px,#99006c 528px,#990067 544px,#990062 560px,#99005d 576px,#990059 592px,#990055 608px,#990052 624px,#99004f 639px)"></div><div style="position:absolute;left:0;top:328px;width:639px;height:4px;background:linear-gradient(90deg,#002099 0px,#001e99 16px,#001b99 32px,#001999 48px,#001799 64px,#001499 80px,#001299 96px,#001099 112px,#000d99 128px,#000b99 144px,#000899 160px,#000699 176px,#060399 192px,#0e0199 208px,#170099 224px,#210099 240px,#2a0099 256px,#330099 272px,#3c0099 288px,#460099 304px,#4f0099 320px,#590099 336px,#630099 352px,#6c0099 368px,#760099 384px,#800099 400px,#8b0099 416px,#950099 432px,#990093 448px,#99008a 464px,#990082 480px,#99007a 496px,#990074 512px,#99006e 528px,#990068 544px,#990064 560px,#99005f 576px,#99005b 592px,#990057 608px,#990053 624px,#990050 639px)"></div><div style="position:absolute;left:0;top:332px;width:639px;height:4px;background:linear-gradient(90deg,#001f99 0px,#001d99 16px,#001a99 32px,#001899 48px,#001699 64px,#001399 80px,#001199 96px,#000f99 112px,#000c99 128px,#000a99 144px,#000899 160px,#000599 176px,#050399 192px,#0e0099 208px,#170099 224px,#200099 240px,#290099 256px,#320099 272px,#3b0099 288px,#440099 304px,#4e0099 320px,#570099 336px,#610099 352px,#6b0099 368px,#740099 384px,#7e0099 400px,#880099 416px,#920099 432px,#990095 448px,#99008c 464px,#990084 480px,#99007d 496px,#990076 512px,#990070 528px,#99006a 544px,#990065 560px,#990061 576px,#99005c 592px,#990058 608px,#990055 624px,#990051 639px)"></div><div style="position:absolute;left:0;top:336px;width:639px;height:4px;background:linear-gradient(90deg,#001e99 0px,#001c99 16px,#001999 32px,#001799 48px,#001599 64px,#001399 80px,#001099 96px,#000e99 112px,#000c99 128px,#000999 144px,#000799 160px,#000499 176px,#050299 192px,#0d0099 208px,#160099 224px,#1f0099 240px,#280099 256px,#310099 272px,#3a0099 288px,#430099 304px,#4c0099 320px,#560099 336px,#5f0099 352px,#690099 368px,#720099 384px,#7c0099 400px,#860099 416px,#900099 432px,#990098 448px,#99008f 464px,#990086 480px,#99007f 496px,#990078 512px,#990072 528px,#99006c 544px,#990067 560px,#990062 576px,#99005e 592px,#99005a 608px,#990056 624px,#990053 639px)"></div><div style="position:absolute;left:0;top:340px;width:639px;height:4px;background:linear-gradient(90deg,#001d99 0px,#001b99 16px,#001999 32px,#001699 48px,#001499 64px,#001299 80px,#001099 96px,#000d99 112px,#000b99 128px,#000999 144px,#000699 160px,#000499 176px,#040199 192px,#0d0099 208px,#150099 224px,#1e0099 240px,#270099 256px,#300099 272px,#390099 288px,#420099 304px,#4b0099 320px,#540099 336px,#5e0099 352px,#670099 368px,#700099 384px,#7a0099 400px,#840099 416px,#8e0099 432px,#970099 448px,#990091 464px,#990088 480px,#990081 496px,#99007a 512px,#990074 528px,#99006e 544px,#990069 560px,#990064 576px,#99005f 592px,#99005b 608px,#990057 624px,#990054 639px)"></div><div style="position:absolute;left:0;top:344px;width:639px;height:4px;background:linear-gradient(90deg,#001c99 0px,#001a99 16px,#001899 32px,#001699 48px,#001399 64px,#001199 80px,#000f99 96px,#000c99 112px,#000a99 128px,#000899 144px,#000699 160px,#000399 176px,#040199 192px,#0c0099 208px,#150099 224px,#1d0099 240px,#260099 256px,#2f0099 272px,#380099 288px,#410099 304px,#4a0099 320px,#530099 336px,#5c0099 352px,#650099 368px,#6f0099 384px,#780099 400px,#820099 416px,#8b0099 432px,#950099 448px,#990093 464px,#99008b 480px,#990083 496px,#99007c 512px,#990075 528px,#990070 544px,#99006a 560px,#990065 576px,#990061 592px,#99005d 608px,#990059 624px,#990055 639px)"></div><div style="position:absolute;left:0;top:348px;width:639px;height:4px;background:linear-gradient(90deg,#001b99 0px,#001999 16px,#001799 32px,#001599 48px,#001299 64px,#001099 80px,#000e99 96px,#000c99 112px,#000999 128px,#000799 144px,#000599 160px,#000399 176px,#040099 192px,#0c0099 208px,#140099 224px,#1d0099 240px,#250099 256px,#2e0099 272px,#370099 288px,#3f0099 304px,#480099 320px,#510099 336px,#5a0099 352px,#630099 368px,#6d0099 384px,#760099 400px,#7f0099 416px,#890099 432px,#930099 448px,#990096 464px,#99008d 480px,#990085 496px,#99007e 512px,#990077 528px,#990071 544px,#99006c 560px,#990067 576px,#990062 592px,#99005e 608px,#99005a 624px,#990057 639px)"></div><div style="position:absolute;left:0;top:352px;width:639px;height:4px;background:linear-gradient(90deg,#001a99 0px,#001899 16px,#001699 32px,#001499 48px,#001299 64px,#001099 80px,#000d99 96px,#000b99 112px,#000999 128px,#000799 144px,#000499 160px,#000299 176px,#030099 192px,#0b0099 208px,#140099 224px,#1c0099 240px,#240099 256px,#2d0099 272px,#360099 288px,#3e0099 304px,#470099 320px,#500099 336px,#590099 352px,#620099 368px,#6b0099 384px,#740099 400px,#7d0099 416px,#870099 432px,#900099 448px,#990098 464px,#99008f 480px,#990087 496px,#990080 512px,#990079 528px,#990073 544px,#99006e 560px,#990069 576px,#990064 592px,#990060 608px,#99005c 624px,#990058 639px)"></div><div style="position:absolute;left:0;top:356px;width:639px;height:4px;background:linear-gradient(90deg,#001999 0px,#001799 16px,#001599 32px,#001399 48px,#001199 64px,#000f99 80px,#000d99 96px,#000a99 112px,#000899 128px,#000699 144px,#000499 160px,#000199 176px,#030099 192px,#0b0099 208px,#130099 224px,#1b0099 240px,#240099 256px,#2c0099 272px,#350099 288px,#3d0099 304px,#460099 320px,#4f0099 336px,#570099 352px,#600099 368px,#690099 384px,#720099 400px,#7b0099 416px,#850099 432px,#8e0099 448px,#970099 464px,#990091 480px,#990089 496px,#990082 512px,#99007b 528px,#990075 544px,#99006f 560px,#99006a 576px,#990066 592px,#990061 608px,#99005d 624px,#99005a 639px)"></div><div style="position:absolute;left:0;top:360px;width:639px;height:4px;background:linear-gradient(90deg,#001999 0px,#001799 16px,#001499 32px,#001299 48px,#001099 64px,#000e99 80px,#000c99 96px,#000a99 112px,#000799 128px,#000599 144px,#000399 160px,#000199 176px,#020099 192px,#0a0099 208px,#130099 224px,#1b0099 240px,#230099 256px,#2b0099 272px,#340099 288px,#3c0099 304px,#450099 320px,#4d0099 336px,#560099 352px,#5f0099 368px,#680099 384px,#700099 400px,#7a0099 416px,#830099 432px,#8c0099 448px,#950099 464px,#990094 480px,#99008b 496px,#990084 512px,#99007d 528px,#990077 544px,#990071 560px,#99006c 576px,#990067 592px,#990063 608px,#99005f 624px,#99005b 639px)"></div><div style="position:absolute;left:0;top:364px;width:639px;height:4px;background:linear-gradient(90deg,#001899 0px,#001699 16px,#001499 32px,#001299 48px,#000f99 64px,#000d99 80px,#000b99 96px,#000999 112px,#000799 128px,#000599 144px,#000299 160px,#000099 176px,#020099 192px,#0a0099 208px,#120099 224px,#1a0099 240px,#220099 256px,#2a0099 272px,#330099 288px,#3b0099 304px,#430099 320px,#4c0099 336px,#540099 352px,#5d0099 368px,#660099 384px,#6f0099 400px,#780099 416px,#810099 432px,#8a0099 448px,#930099 464px,#990096 480px,#99008d 496px,#990086 512px,#99007f 528px,#990079 544px,#990073 560px,#99006e 576px,#990069 592px,#990064 608px,#990060 624px,#99005c 639px)"></div><div style="position:absolute;left:0;top:368px;width:639px;height:4px;background:linear-gradient(90deg,#001799 0px,#001599 16px,#001399 32px,#001199 48px,#000f99 64px,#000d99 80px,#000b99 96px,#000899 112px,#000699 128px,#000499 144px,#000299 160px,#000099 176px,#020099 192px,#0a0099 208px,#110099 224px,#190099 240px,#210099 256px,#2a0099 272px,#320099 288px,#3a0099 304px,#420099 320px,#4b0099 336px,#530099 352px,#5c0099 368px,#640099 384px,#6d0099 400px,#760099 416px,#7f0099 432px,#880099 448px,#910099 464px,#990098 480px,#990090 496px,#990088 512px,#990081 528px,#99007a 544px,#990075 560px,#99006f 576px,#99006a 592px,#990066 608px,#990062 624px,#99005e 639px)"></div><div style="position:absolute;left:0;top:372px;width:639px;height:4px;background:linear-gradient(90deg,#001699 0px,#001499 16px,#001299 32px,#001099 48px,#000e99 64px,#000c99 80px,#000a99 96px,#000899 112px,#000699 128px,#000399 144px,#000199 160px,#000099 176px,#010099 192px,#090099 208px,#110099 224px,#190099 240px,#210099 256px,#290099 272px,#310099 288px,#390099 304px,#410099 320px,#490099 336px,#520099 352px,#5a0099 368px,#630099 384px,#6b0099 400px,#740099 416px,#7d0099 432px,#860099 448px,#8e0099 464px,#970099 480px,#990092 496px,#99008a 512px,#990083 528px,#99007c 544px,#990076 560px,#990071 576px,#99006c 592px,#990067 608px,#990063 624px,#99005f 639px)"></div><div style="position:absolute;left:0;top:376px;width:639px;height:4px;background:linear-gradient(90deg,#001699 0px,#001499 16px,#001199 32px,#000f99 48px,#000d99 64px,#000b99 80px,#000999 96px,#000799 112px,#000599 128px,#000399 144px,#000199 160px,#000099 176px,#010099 192px,#090099 208px,#100099 224px,#180099 240px,#200099 256px,#280099 272px,#300099 288px,#380099 304px,#400099 320px,#480099 336px,#500099 352px,#590099 368px,#610099 384px,#6a0099 400px,#720099 416px,#7b0099 432px,#840099 448px,#8c0099 464px,#950099 480px,#990094 496px,#99008c 512px,#990085 528px,#99007e 544px,#990078 560px,#990073 576px,#99006d 592px,#990069 608px,#990064 624px,#990061 639px)"></div><div style="position:absolute;left:0;top:380px;width:639px;height:4px;background:linear-gradient(90deg,#001599 0px,#001399 16px,#001199 32px,#000f99 48px,#000d99 64px,#000b99 80px,#000999 96px,#000799 112px,#000499 128px,#000299 144px,#000099 160px,#000099 176px,#010099 192px,#080099 208px,#100099 224px,#180099 240px,#1f0099 256px,#270099 272px,#2f0099 288px,#370099 304px,#3f0099 320px,#470099 336px,#4f0099 352px,#570099 368px,#600099 384px,#680099 400px,#710099 416px,#790099 432px,#820099 448px,#8a0099 464px,#930099 480px,#990096 496px,#99008e 512px,#990087 528px,#990080 544px,#99007a 560px,#990074 576px,#99006f 592px,#99006a 608px,#990066 624px,#990062 639px)"></div><div style="position:absolute;left:0;top:384px;width:639px;height:4px;background:linear-gradient(90deg,#001499 0px,#001299 16px,#001099 32px,#000e99 48px,#000c99 64px,#000a99 80px,#000899 96px,#000699 112px,#000499 128px,#000299 144px,#000099 160px,#000099 176px,#010099 192px,#080099 208px,#0f0099 224px,#170099 240px,#1f0099 256px,#260099 272px,#2e0099 288px,#360099 304px,#3e0099 320px,#460099 336px,#4e0099 352px,#560099 368px,#5e0099 384px,#670099 400px,#6f0099 416px,#770099 432px,#800099 448px,#880099 464px,#910099 480px,#990098 496px,#990090 512px,#990089 528px,#990082 544px,#99007c 560px,#990076 576px,#990071 592px,#99006c 608px,#990067 624px,#990063 639px)"></div><div style="position:absolute;left:0;top:388px;width:639px;height:4px;background:linear-gradient(90deg,#001399 0px,#001199 16px,#000f99 32px,#000d99 48px,#000b99 64px,#000999 80px,#000799 96px,#000599 112px,#000399 128px,#000199 144px,#000099 160px,#000099 176px,#000099 192px,#080099 208px,#0f0099 224px,#160099 240px,#1e0099 256px,#260099 272px,#2d0099 288px,#350099 304px,#3d0099 320px,#450099 336px,#4d0099 352px,#550099 368px,#5d0099 384px,#650099 400px,#6d0099 416px,#760099 432px,#7e0099 448px,#860099 464px,#8f0099 480px,#980099 496px,#990092 512px,#99008b 528px,#990084 544px,#99007d 560px,#990078 576px,#990072 592px,#99006d 608px,#990069 624px,#990065 639px)"></div><div style="position:absolute;left:0;top:392px;width:639px;height:4px;background:linear-gradient(90deg,#001399 0px,#001199 16px,#000f99 32px,#000d99 48px,#000b99 64px,#000999 80px,#000799 96px,#000599 112px,#000399 128px,#000199 144px,#000099 160px,#000099 176px,#000099 192px,#070099 208px,#0f0099 224px,#160099 240px,#1d0099 256px,#250099 272px,#2d0099 288px,#340099 304px,#3c0099 320px,#440099 336px,#4c0099 352px,#530099 368px,#5b0099 384px,#630099 400px,#6c0099 416px,#740099 432px,#7c0099 448px,#840099 464px,#8d0099 480px,#950099 496px,#990094 512px,#99008d 528px,#990086 544px,#99007f 560px,#990079 576px,#990074 592px,#99006f 608px,#99006a 624px,#990066 639px)"></div><div style="position:absolute;left:0;top:396px;width:639px;height:4px;background:linear-gradient(90deg,#001299 0px,#001099 16px,#000e99 32px,#000c99 48px,#000a99 64px,#000899 80px,#000699 96px,#000499 112px,#000299 128px,#000099 144px,#000099 160px,#000099 176px,#000099 192px,#070099 208px,#0e0099 224px,#150099 240px,#1d0099 256px,#240099 272px,#2c0099 288px,#330099 304px,#3b0099 320px,#430099 336px,#4a0099 352px,#520099 368px,#5a0099 384px,#620099 400px,#6a0099 416px,#720099 432px,#7a0099 448px,#830099 464px,#8b0099 480px,#930099 496px,#990096 512px,#99008e 528px,#990087 544px,#990081 560px,#99007b 576px,#990076 592px,#990070 608px,#99006c 624px,#990068 639px)"></div><div style="position:absolute;left:0;top:400px;width:639px;height:4px;background:linear-gradient(90deg,#001199 0px,#000f99 16px,#000e99 32px,#000c99 48px,#000a99 64px,#000899 80px,#000699 96px,#000499 112px,#000299 128px,#000099 144px,#000099 160px,#000099 176px,#000099 192px,#060099 208px,#0e0099 224px,#150099 240px,#1c0099 256px,#240099 272px,#2b0099 288px,#320099 304px,#3a0099 320px,#420099 336px,#490099 352px,#510099 368px,#590099 384px,#610099 400px,#690099 416px,#710099 432px,#790099 448px,#810099 464px,#890099 480px,#910099 496px,#990098 512px,#990090 528px,#990089 544px,#990083 560px,#99007d 576px,#990077 592px,#990072 608px,#99006d 624px,#990069 639px)"></div><div style="position:absolute;left:0;top:404px;width:639px;height:4px;background:linear-gradient(90deg,#001199 0px,#000f99 16px,#000d99 32px,#000b99 48px,#000999 64px,#000799 80px,#000599 96px,#000399 112px,#000199 128px,#000099 144px,#000099 160px,#000099 176px,#000099 192px,#060099 208px,#0d0099 224px,#140099 240px,#1c0099 256px,#230099 272px,#2a0099 288px,#320099 304px,#390099 320px,#410099 336px,#480099 352px,#500099 368px,#570099 384px,#5f0099 400px,#670099 416px,#6f0099 432px,#770099 448px,#7f0099 464px,#870099 480px,#8f0099 496px,#980099 512px,#990092 528px,#99008b 544px,#990084 560px,#99007e 576px,#990079 592px,#990074 608px,#99006f 624px,#99006b 639px)"></div><div style="position:absolute;left:0;top:408px;width:639px;height:4px;background:linear-gradient(90deg,#001099 0px,#000e99 16px,#000c99 32px,#000a99 48px,#000899 64px,#000799 80px,#000599 96px,#000399 112px,#000199 128px,#000099 144px,#000099 160px,#000099 176px,#000099 192px,#060099 208px,#0d0099 224px,#140099 240px,#1b0099 256px,#220099 272px,#290099 288px,#310099 304px,#380099 320px,#400099 336px,#470099 352px,#4f0099 368px,#560099 384px,#5e0099 400px,#660099 416px,#6d0099 432px,#750099 448px,#7d0099 464px,#850099 480px,#8d0099 496px,#950099 512px,#990094 528px,#99008d 544px,#990086 560px,#990080 576px,#99007a 592px,#990075 608px,#990070 624px,#99006c 639px)"></div><div style="position:absolute;left:0;top:412px;width:639px;height:4px;background:linear-gradient(90deg,#000f99 0px,#000e99 16px,#000c99 32px,#000a99 48px,#000899 64px,#000699 80px,#000499 96px,#000299 112px,#000099 128px,#000099 144px,#000099 160px,#000099 176px,#000099 192px,#050099 208px,#0c0099 224px,#130099 240px,#1a0099 256px,#220099 272px,#290099 288px,#300099 304px,#370099 320px,#3f0099 336px,#460099 352px,#4d0099 368px,#550099 384px,#5d0099 400px,#640099 416px,#6c0099 432px,#740099 448px,#7c0099 464px,#830099 480px,#8b0099 496px,#930099 512px,#990096 528px,#99008f 544px,#990088 560px,#990082 576px,#99007c 592px,#990077 608px,#990072 624px,#99006d 639px)"></div><div style="position:absolute;left:0;top:416px;width:639px;height:4px;background:linear-gradient(90deg,#000f99 0px,#000d99 16px,#000b99 32px,#000999 48px,#000799 64px,#000699 80px,#000499 96px,#000299 112px,#000099 128px,#000099 144px,#000099 160px,#000099 176px,#000099 192px,#050099 208px,#0c0099 224px,#130099 240px,#1a0099 256px,#210099 272px,#280099 288px,#2f0099 304px,#360099 320px,#3e0099 336px,#450099 352px,#4c0099 368px,#540099 384px,#5b0099 400px,#630099 416px,#6a0099 432px,#720099 448px,#7a0099 464px,#820099 480px,#8a0099 496px,#920099 512px,#990098 528px,#990091 544px,#99008a 560px,#990084 576px,#99007e 592px,#990078 608px,#990073 624px,#99006f 639px)"></div><div style="position:absolute;left:0;top:420px;width:639px;height:4px;background:linear-gradient(90deg,#000e99 0px,#000c99 16px,#000b99 32px,#000999 48px,#000799 64px,#000599 80px,#000399 96px,#000199 112px,#000099 128px,#000099 144px,#000099 160px,#000099 176px,#000099 192px,#050099 208px,#0c0099 224px,#120099 240px,#190099 256px,#200099 272px,#270099 288px,#2e0099 304px,#350099 320px,#3d0099 336px,#440099 352px,#4b0099 368px,#530099 384px,#5a0099 400px,#610099 416px,#690099 432px,#710099 448px,#780099 464px,#800099 480px,#880099 496px,#900099 512px,#980099 528px,#990093 544px,#99008c 560px,#990085 576px,#99007f 592px,#99007a 608px,#990075 624px,#990070 639px)"></div><div style="position:absolute;left:0;top:424px;width:639px;height:4px;background:linear-gradient(90deg,#000e99 0px,#000c99 16px,#000a99 32px,#000899 48px,#000699 64px,#000499 80px,#000399 96px,#000199 112px,#000099 128px,#000099 144px,#000099 160px,#000099 176px,#000099 192px,#040099 208px,#0b0099 224px,#120099 240px,#190099 256px,#200099 272px,#270099 288px,#2e0099 304px,#350099 320px,#3c0099 336px,#430099 352px,#4a0099 368px,#510099 384px,#590099 400px,#600099 416px,#680099 432px,#6f0099 448px,#770099 464px,#7e0099 480px,#860099 496px,#8e0099 512px,#960099 528px,#990095 544px,#99008e 560px,#990087 576px,#990081 592px,#99007b 608px,#990076 624px,#990072 639px)"></div><div style="position:absolute;left:0;top:428px;width:639px;height:4px;background:linear-gradient(90deg,#000d99 0px,#000b99 16px,#000999 32px,#000899 48px,#000699 64px,#000499 80px,#000299 96px,#000099 112px,#000099 128px,#000099 144px,#000099 160px,#000099 176px,#000099 192px,#040099 208px,#0b0099 224px,#110099 240px,#180099 256px,#1f0099 272px,#260099 288px,#2d0099 304px,#340099 320px,#3b0099 336px,#420099 352px,#490099 368px,#500099 384px,#580099 400px,#5f0099 416px,#660099 432px,#6e0099 448px,#750099 464px,#7d0099 480px,#840099 496px,#8c0099 512px,#940099 528px,#990097 544px,#99008f 560px,#990089 576px,#990083 592px,#99007d 608px,#990078 624px,#990073 639px)"></div><div style="position:absolute;left:0;top:432px;width:639px;height:4px;background:linear-gradient(90deg,#000c99 0px,#000b99 16px,#000999 32px,#000799 48px,#000599 64px,#000399 80px,#000299 96px,#000099 112px,#000099 128px,#000099 144px,#000099 160px,#000099 176px,#000099 192px,#040099 208px,#0a0099 224px,#110099 240px,#180099 256px,#1e0099 272px,#250099 288px,#2c0099 304px,#330099 320px,#3a0099 336px,#410099 352px,#480099 368px,#4f0099 384px,#560099 400px,#5e0099 416px,#650099 432px,#6c0099 448px,#740099 464px,#7b0099 480px,#830099 496px,#8a0099 512px,#920099 528px,#990099 544px,#990091 560px,#99008a 576px,#990084 592px,#99007f 608px,#990079 624px,#990075 639px)"></div><div style="position:absolute;left:0;top:436px;width:639px;height:4px;background:linear-gradient(90deg,#000c99 0px,#000a99 16px,#000899 32px,#000799 48px,#000599 64px,#000399 80px,#000199 96px,#000099 112px,#000099 128px,#000099 144px,#000099 160px,#000099 176px,#000099 192px,#040099 208px,#0a0099 224px,#110099 240px,#170099 256px,#1e0099 272px,#250099 288px,#2b0099 304px,#320099 320px,#390099 336px,#400099 352px,#470099 368px,#4e0099 384px,#550099 400px,#5c0099 416px,#630099 432px,#6b0099 448px,#720099 464px,#790099 480px,#810099 496px,#880099 512px,#900099 528px,#980099 544px,#990093 560px,#99008c 576px,#990086 592px,#990080 608px,#99007b 624px,#990076 639px)"></div><div style="position:absolute;left:0;top:440px;width:639px;height:4px;background:linear-gradient(90deg,#000b99 0px,#000a99 16px,#000899 32px,#000699 48px,#000499 64px,#000399 80px,#000199 96px,#000099 112px,#000099 128px,#000099 144px,#000099 160px,#000099 176px,#000099 192px,#030099 208px,#0a0099 224px,#100099 240px,#170099 256px,#1d0099 272px,#240099 288px,#2b0099 304px,#310099 320px,#380099 336px,#3f0099 352px,#460099 368px,#4d0099 384px,#540099 400px,#5b0099 416px,#620099 432px,#690099 448px,#710099 464px,#780099 480px,#7f0099 496px,#870099 512px,#8e0099 528px,#960099 544px,#990095 560px,#99008e 576px,#990088 592px,#990082 608px,#99007c 624px,#990078 639px)"></div><div style="position:absolute;left:0;top:444px;width:639px;height:4px;background:linear-gradient(90deg,#000b99 0px,#000999 16px,#000799 32px,#000699 48px,#000499 64px,#000299 80px,#000099 96px,#000099 112px,#000099 128px,#000099 144px,#000099 160px,#000099 176px,#000099 192px,#030099 208px,#090099 224px,#100099 240px,#160099 256px,#1d0099 272px,#230099 288px,#2a0099 304px,#310099 320px,#370099 336px,#3e0099 352px,#450099 368px,#4c0099 384px,#530099 400px,#5a0099 416px,#610099 432px,#680099 448px,#6f0099 464px,#760099 480px,#7e0099 496px,#850099 512px,#8c0099 528px,#940099 544px,#990097 560px,#990090 576px,#990089 592px,#990083 608px,#99007e 624px,#990079 639px)"></div><div style="position:absolute;left:0;top:448px;width:639px;height:4px;background:linear-gradient(90deg,#000a99 0px,#000999 16px,#000799 32px,#000599 48px,#000399 64px,#000299 80px,#000099 96px,#000099 112px,#000099 128px,#000099 144px,#000099 160px,#000099 176px,#000099 192px,#030099 208px,#090099 224px,#0f0099 240px,#160099 256px,#1c0099 272px,#230099 288px,#290099 304px,#300099 320px,#370099 336px,#3d0099 352px,#440099 368px,#4b0099 384px,#520099 400px,#590099 416px,#600099 432px,#670099 448px,#6e0099 464px,#750099 480px,#7c0099 496px,#830099 512px,#8b0099 528px,#920099 544px,#990099 560px,#990092 576px,#99008b 592px,#990085 608px,#99007f 624px,#99007b 639px)"></div><div style="position:absolute;left:0;top:452px;width:639px;height:4px;background:linear-gradient(90deg,#000a99 0px,#000899 16px,#000699 32px,#000599 48px,#000399 64px,#000199 80px,#000099 96px,#000099 112px,#000099 128px,#000099 144px,#000099 160px,#000099 176px,#000099 192px,#020099 208px,#090099 224px,#0f0099 240px,#150099 256px,#1c0099 272px,#220099 288px,#290099 304px,#2f0099 320px,#360099 336px,#3c0099 352px,#430099 368px,#4a0099 384px,#510099 400px,#580099 416px,#5e0099 432px,#650099 448px,#6c0099 464px,#730099 480px,#7b0099 496px,#820099 512px,#890099 528px,#900099 544px,#980099 560px,#990093 576px,#99008d 592px,#990087 608px,#990081 624px,#99007c 639px)"></div><div style="position:absolute;left:0;top:456px;width:639px;height:4px;background:linear-gradient(90deg,#000999 0px,#000899 16px,#000699 32px,#000499 48px,#000299 64px,#000199 80px,#000099 96px,#000099 112px,#000099 128px,#000099 144px,#000099 160px,#000099 176px,#000099 192px,#020099 208px,#080099 224px,#0f0099 240px,#150099 256px,#1b0099 272px,#220099 288px,#280099 304px,#2f0099 320px,#350099 336px,#3c0099 352px,#420099 368px,#490099 384px,#500099 400px,#560099 416px,#5d0099 432px,#640099 448px,#6b0099 464px,#720099 480px,#790099 496px,#800099 512px,#870099 528px,#8e0099 544px,#960099 560px,#990095 576px,#99008e 592px,#990088 608px,#990083 624px,#99007e 639px)"></div><div style="position:absolute;left:0;top:460px;width:639px;height:4px;background:linear-gradient(90deg,#000999 0px,#000799 16px,#000599 32px,#000499 48px,#000299 64px,#000099 80px,#000099 96px,#000099 112px,#000099 128px,#000099 144px,#000099 160px,#000099 176px,#000099 192px,#020099 208px,#080099 224px,#0e0099 240px,#140099 256px,#1b0099 272px,#210099 288px,#270099 304px,#2e0099 320px,#340099 336px,#3b0099 352px,#410099 368px,#480099 384px,#4f0099 400px,#550099 416px,#5c0099 432px,#630099 448px,#6a0099 464px,#710099 480px,#780099 496px,#7f0099 512px,#860099 528px,#8d0099 544px,#940099 560px,#990097 576px,#990090 592px,#99008a 608px,#990084 624px,#99007f 639px)"></div><div style="position:absolute;left:0;top:464px;width:639px;height:4px;background:linear-gradient(90deg,#000899 0px,#000799 16px,#000599 32px,#000399 48px,#000299 64px,#000099 80px,#000099 96px,#000099 112px,#000099 128px,#000099 144px,#000099 160px,#000099 176px,#000099 192px,#020099 208px,#080099 224px,#0e0099 240px,#140099 256px,#1a0099 272px,#200099 288px,#270099 304px,#2d0099 320px,#340099 336px,#3a0099 352px,#400099 368px,#470099 384px,#4e0099 400px,#540099 416px,#5b0099 432px,#620099 448px,#680099 464px,#6f0099 480px,#760099 496px,#7d0099 512px,#840099 528px,#8b0099 544px,#920099 560px,#990099 576px,#990092 592px,#99008c 608px,#990086 624px,#990081 639px)"></div><div style="position:absolute;left:0;top:468px;width:639px;height:4px;background:linear-gradient(90deg,#000899 0px,#000699 16px,#000599 32px,#000399 48px,#000199 64px,#000099 80px,#000099 96px,#000099 112px,#000099 128px,#000099 144px,#000099 160px,#000099 176px,#000099 192px,#010099 208px,#070099 224px,#0d0099 240px,#140099 256px,#1a0099 272px,#200099 288px,#260099 304px,#2c0099 320px,#330099 336px,#390099 352px,#400099 368px,#460099 384px,#4d0099 400px,#530099 416px,#5a0099 432px,#600099 448px,#670099 464px,#6e0099 480px,#750099 496px,#7c0099 512px,#830099 528px,#890099 544px,#900099 560px,#980099 576px,#990094 592px,#99008d 608px,#990087 624px,#990082 639px)"></div><div style="position:absolute;left:0;top:472px;width:639px;height:4px;background:linear-gradient(90deg,#000799 0px,#000699 16px,#000499 32px,#000299 48px,#000199 64px,#000099 80px,#000099 96px,#000099 112px,#000099 128px,#000099 144px,#000099 160px,#000099 176px,#000099 192px,#010099 208px,#070099 224px,#0d0099 240px,#130099 256px,#190099 272px,#1f0099 288px,#260099 304px,#2c0099 320px,#320099 336px,#380099 352px,#3f0099 368px,#450099 384px,#4c0099 400px,#520099 416px,#590099 432px,#5f0099 448px,#660099 464px,#6d0099 480px,#730099 496px,#7a0099 512px,#810099 528px,#880099 544px,#8f0099 560px,#960099 576px,#990095 592px,#99008f 608px,#990089 624px,#990084 639px)"></div></div><div style="position:absolute;left:131px;top:30px;width:350px;height:333px;clip-path:polygon(348.05px 33.54px,1.50px 1.16px,55.17px 331.92px)"><div style="position:absolute;left:0;top:0px;width:350px;height:3px;background:linear-gradient(90deg,#00ff01 0px,#14ff00 10px,#2dff00 20px,#48ff00 30px,#64ff00 40px,#82ff00 50px,#a2ff00 60px,#c3ff00 70px,#e7ff00 80px,#fff100 90px,#ffd100 100px,#ffb700 110px,#ffa100 120px,#ff8f00 130px,#ff7f00 140px,#ff7200 150px,#ff6600 160px,#ff5c00 170px,#ff5200 180px,#ff4a00 190px,#ff4300 200px,#ff3c00 210px,#ff3600 220px,#ff3000 230px,#ff2b00 240px,#ff2600 250px,#ff2200 260px,#ff1e00 270px,#ff1a00 280px,#ff1700 290px,#ff1400 300px,#ff1100 310px,#ff0e00 320px,#ff0b00 330px,#ff0900 340px,#ff0600 350px)"></div><div style="position:absolute;left:0;top:3px;width:350px;height:3px;background:linear-gradient(90deg,#00ff08 0px,#13ff06 10px,#2dff04 20px,#47ff02 30px,#64ff00 40px,#82ff00 50px,#a2ff00 60px,#c4ff00 70px,#e8ff00 80px,#fff000 90px,#ffd000 100px,#ffb600 110px,#ffa000 120px,#ff8e00 130px,#ff7e00 140px,#ff7100 150px,#ff6500 160px,#ff5b00 170px,#ff5100 180px,#ff4900 190px,#ff4200 200px,#ff3b00 210px,#ff3500 220px,#ff2f00 230px,#ff2a00 240px,#ff2600 250px,#ff2100 260px,#ff1d00 270px,#ff1a00 280px,#ff1600 290px,#ff1300 300px,#ff1000 310px,#ff0d00 320px,#ff0a00 330px,#ff0800 340px,#ff0600 350px)"></div><div style="position:absolute;left:0;top:6px;width:350px;height:3px;background:linear-gradient(90deg,#00ff0e 0px,#12ff0d 10px,#2cff0b 20px,#47ff09 30px,#63ff07 40px,#82ff05 50px,#a2ff02 60px,#c4ff00 70px,#e9ff00 80px,#ffef00 90px,#ffcf00 100px,#ffb500 110px,#ff9f00 120px,#ff8d00 130px,#ff7d00 140px,#ff7000 150px,#ff6400 160px,#ff5900 170px,#ff5000 180px,#ff4800 190px,#ff4100 200px,#ff3a00 210px,#ff3400 220px,#ff2e00 230px,#ff2900 240px,#ff2500 250px,#ff2000 260px,#ff1d00 270px,#ff1900 280px,#ff1500 290px,#ff1200 300px,#ff0f00 310px,#ff0c00 320px,#ff0a00 330px,#ff0700 340px,#ff0500 350px)"></div><div style="position:absolute;left:0;top:9px;width:350px;height:3px;background:linear-gradient(90deg,#00ff15 0px,#11ff14 10px,#2bff12 20px,#46ff10 30px,#63ff0e 40px,#81ff0c 50px,#a2ff0a 60px,#c5ff08 70px,#eaff06 80px,#ffed03 90px,#ffcd00 100px,#ffb300 110px,#ff9e00 120px,#ff8b00 130px,#ff7c00 140px,#ff6e00 150px,#ff6300 160px,#ff5800 170px,#ff4f00 180px,#ff4700 190px,#ff4000 200px,#ff3900 210px,#ff3300 220px,#ff2e00 230px,#ff2900 240px,#ff2400 250px,#ff2000 260px,#ff1c00 270px,#ff1800 280px,#ff1500 290px,#ff1200 300px,#ff0f00 310px,#ff0c00 320px,#ff0900 330px,#ff0700 340px,#ff0400 350px)"></div><div style="position:absolute;left:0;top:12px;width:350px;height:3px;background:linear-gradient(90deg,#00ff1c 0px,#10ff1b 10px,#2aff19 20px,#45ff18 30px,#62ff16 40px,#81ff14 50px,#a2ff12 60px,#c5ff10 70px,#ebff0e 80px,#ffec0b 90px,#ffcc08 100px,#ffb205 110px,#ff9c03 120px,#ff8a01 130px,#ff7b00 140px,#ff6d00 150px,#ff6200 160px,#ff5700 170px,#ff4e00 180px,#ff4600 190px,#ff3f00 200px,#ff3800 210px,#ff3200 220px,#ff2d00 230px,#ff2800 240px,#ff2300 250px,#ff1f00 260px,#ff1b00 270px,#ff1700 280px,#ff1400 290px,#ff1100 300px,#ff0e00 310px,#ff0b00 320px,#ff0900 330px,#ff0600 340px,#ff0400 350px)"></div><div style="position:absolute;left:0;top:15px;width:350px;height:3px;background:linear-gradient(90deg,#00ff23 0px,#0fff22 10px,#29ff21 20px,#45ff1f 30px,#62ff1e 40px,#81ff1c 50px,#a2ff1b 60px,#c6ff19 70px,#ecff17 80px,#ffeb14 90px,#ffcb0f 100px,#ffb10c 110px,#ff9b09 120px,#ff8906 130px,#ff7a04 140px,#ff6c02 150px,#ff6101 160px,#ff5600 170px,#ff4d00 180px,#ff4500 190px,#ff3e00 200px,#ff3700 210px,#ff3100 220px,#ff2c00 230px,#ff2700 240px,#ff2200 250px,#ff1e00 260px,#ff1a00 270px,#ff1700 280px,#ff1300 290px,#ff1000 300px,#ff0d00 310px,#ff0a00 320px,#ff0800 330px,#ff0500 340px,#ff0300 350px)"></div><div style="position:absolute;left:0;top:18px;width:350px;height:3px;background:linear-gradient(90deg,#00ff2a 0px,#0eff29 10px,#28ff28 20px,#44ff27 30px,#62ff26 40px,#81ff24 50px,#a3ff23 60px,#c6ff22 70px,#edff20 80px,#ffea1c 90px,#ffca17 100px,#ffb012 110px,#ff9a0f 120px,#ff880c 130px,#ff7809 140px,#ff6b07 150px,#ff6005 160px,#ff5504 170px,#ff4c02 180px,#ff4401 190px,#ff3d00 200px,#ff3600 210px,#ff3000 220px,#ff2b00 230px,#ff2600 240px,#ff2200 250px,#ff1d00 260px,#ff1900 270px,#ff1600 280px,#ff1300 290px,#ff0f00 300px,#ff0d00 310px,#ff0a00 320px,#ff0700 330px,#ff0500 340px,#ff0300 350px)"></div><div style="position:absolute;left:0;top:21px;width:350px;height:3px;background:linear-gradient(90deg,#00ff31 0px,#0dff31 10px,#27ff30 20px,#43ff2f 30px,#61ff2e 40px,#81ff2d 50px,#a3ff2c 60px,#c7ff2b 70px,#eeff29 80px,#ffe925 90px,#ffc81e 100px,#ffae19 110px,#ff9915 120px,#ff8712 130px,#ff770f 140px,#ff6a0c 150px,#ff5e0a 160px,#ff5408 170px,#ff4b06 180px,#ff4305 190px,#ff3c03 200px,#ff3502 210px,#ff3001 220px,#ff2a00 230px,#ff2500 240px,#ff2100 250px,#ff1d00 260px,#ff1900 270px,#ff1500 280px,#ff1200 290px,#ff0f00 300px,#ff0c00 310px,#ff0900 320px,#ff0700 330px,#ff0400 340px,#ff0200 350px)"></div><div style="position:absolute;left:0;top:24px;width:350px;height:3px;background:linear-gradient(90deg,#00ff39 0px,#0cff38 10px,#26ff37 20px,#43ff37 30px,#61ff36 40px,#81ff35 50px,#a3ff35 60px,#c7ff34 70px,#efff33 80px,#ffe72d 90px,#ffc726 100px,#ffad20 110px,#ff981c 120px,#ff8618 130px,#ff7614 140px,#ff6911 150px,#ff5d0f 160px,#ff530c 170px,#ff4a0a 180px,#ff4209 190px,#ff3b07 200px,#ff3506 210px,#ff2f04 220px,#ff2903 230px,#ff2402 240px,#ff2001 250px,#ff1c00 260px,#ff1800 270px,#ff1400 280px,#ff1100 290px,#ff0e00 300px,#ff0b00 310px,#ff0800 320px,#ff0600 330px,#ff0400 340px,#ff0100 350px)"></div><div style="position:absolute;left:0;top:27px;width:350px;height:3px;background:linear-gradient(90deg,#00ff40 0px,#0aff40 10px,#25ff3f 20px,#42ff3f 30px,#60ff3e 40px,#80ff3e 50px,#a3ff3d 60px,#c8ff3d 70px,#f0ff3c 80px,#ffe636 90px,#ffc62e 100px,#ffac27 110px,#ff9622 120px,#ff841d 130px,#ff751a 140px,#ff6816 150px,#ff5c13 160px,#ff5211 170px,#ff490f 180px,#ff410d 190px,#ff3a0b 200px,#ff3409 210px,#ff2e08 220px,#ff2806 230px,#ff2405 240px,#ff1f04 250px,#ff1b03 260px,#ff1702 270px,#ff1401 280px,#ff1000 290px,#ff0d00 300px,#ff0a00 310px,#ff0800 320px,#ff0500 330px,#ff0300 340px,#ff0100 350px)"></div><div style="position:absolute;left:0;top:30px;width:350px;height:3px;background:linear-gradient(90deg,#00ff48 0px,#09ff48 10px,#24ff47 20px,#41ff47 30px,#60ff47 40px,#80ff47 50px,#a3ff47 60px,#c9ff46 70px,#f1ff46 80px,#ffe53f 90px,#ffc536 100px,#ffab2e 110px,#ff9528 120px,#ff8323 130px,#ff741f 140px,#ff671b 150px,#ff5b18 160px,#ff5115 170px,#ff4813 180px,#ff4010 190px,#ff390e 200px,#ff330d 210px,#ff2d0b 220px,#ff280a 230px,#ff2308 240px,#ff1e07 250px,#ff1a06 260px,#ff1605 270px,#ff1304 280px,#ff1003 290px,#ff0d02 300px,#ff0a01 310px,#ff0700 320px,#ff0500 330px,#ff0200 340px,#ff0000 350px)"></div><div style="position:absolute;left:0;top:33px;width:350px;height:3px;background:linear-gradient(90deg,#00ff4f 0px,#08ff50 10px,#23ff50 20px,#40ff50 30px,#5fff50 40px,#80ff50 50px,#a3ff50 60px,#c9ff50 70px,#f2ff50 80px,#ffe448 90px,#ffc33e 100px,#ffa936 110px,#ff942f 120px,#ff8229 130px,#ff7324 140px,#ff6520 150px,#ff5a1d 160px,#ff501a 170px,#ff4717 180px,#ff3f14 190px,#ff3812 200px,#ff3210 210px,#ff2c0e 220px,#ff270d 230px,#ff220b 240px,#ff1d0a 250px,#ff1909 260px,#ff1607 270px,#ff1206 280px,#ff0f05 290px,#ff0c04 300px,#ff0904 310px,#ff0603 320px,#ff0402 330px,#ff0201 340px,#ff0001 350px)"></div><div style="position:absolute;left:0;top:36px;width:350px;height:3px;background:linear-gradient(90deg,#00ff57 0px,#07ff58 10px,#22ff58 20px,#40ff58 30px,#5fff59 40px,#80ff59 50px,#a4ff59 60px,#caff5a 70px,#f3ff5a 80px,#ffe251 90px,#ffc246 100px,#ffa83d 110px,#ff9335 120px,#ff812f 130px,#ff712a 140px,#ff6425 150px,#ff5922 160px,#ff4f1e 170px,#ff461b 180px,#ff3e18 190px,#ff3716 200px,#ff3114 210px,#ff2b12 220px,#ff2610 230px,#ff210e 240px,#ff1d0d 250px,#ff190b 260px,#ff150a 270px,#ff1109 280px,#ff0e08 290px,#ff0b07 300px,#ff0806 310px,#ff0605 320px,#ff0304 330px,#ff0103 340px,#ff0003 350px)"></div><div style="position:absolute;left:0;top:39px;width:350px;height:3px;background:linear-gradient(90deg,#00ff5f 0px,#06ff60 10px,#21ff60 20px,#3fff61 30px,#5eff62 40px,#80ff62 50px,#a4ff63 60px,#caff64 70px,#f4ff65 80px,#ffe15a 90px,#ffc14e 100px,#ffa744 110px,#ff913c 120px,#ff7f35 130px,#ff7030 140px,#ff632b 150px,#ff5826 160px,#ff4e23 170px,#ff451f 180px,#ff3d1c 190px,#ff361a 200px,#ff3017 210px,#ff2a15 220px,#ff2513 230px,#ff2011 240px,#ff1c10 250px,#ff180e 260px,#ff140d 270px,#ff110c 280px,#ff0d0a 290px,#ff0a09 300px,#ff0808 310px,#ff0507 320px,#ff0306 330px,#ff0006 340px,#ff0005 350px)"></div><div style="position:absolute;left:0;top:42px;width:350px;height:3px;background:linear-gradient(90deg,#00ff67 0px,#04ff68 10px,#20ff69 20px,#3eff6a 30px,#5eff6b 40px,#80ff6c 50px,#a4ff6d 60px,#cbff6e 70px,#f5ff70 80px,#ffe063 90px,#ffbf56 100px,#ffa54b 110px,#ff9043 120px,#ff7e3b 130px,#ff6f35 140px,#ff6230 150px,#ff572b 160px,#ff4d27 170px,#ff4424 180px,#ff3c20 190px,#ff351e 200px,#ff2f1b 210px,#ff2919 220px,#ff2417 230px,#ff1f15 240px,#ff1b13 250px,#ff1711 260px,#ff1310 270px,#ff100e 280px,#ff0d0d 290px,#ff0a0c 300px,#ff070b 310px,#ff040a 320px,#ff0209 330px,#ff0008 340px,#ff0007 350px)"></div><div style="position:absolute;left:0;top:45px;width:350px;height:3px;background:linear-gradient(90deg,#00ff70 0px,#03ff71 10px,#1fff72 20px,#3dff73 30px,#5dff74 40px,#7fff76 50px,#a4ff77 60px,#ccff79 70px,#f6ff7b 80px,#ffdf6d 90px,#ffbe5e 100px,#ffa453 110px,#ff8f49 120px,#ff7d41 130px,#ff6e3b 140px,#ff6135 150px,#ff5530 160px,#ff4c2c 170px,#ff4328 180px,#ff3b24 190px,#ff3421 200px,#ff2e1f 210px,#ff281c 220px,#ff231a 230px,#ff1e18 240px,#ff1a16 250px,#ff1614 260px,#ff1212 270px,#ff0f11 280px,#ff0c10 290px,#ff090e 300px,#ff060d 310px,#ff040c 320px,#ff010b 330px,#ff000a 340px,#ff0009 350px)"></div><div style="position:absolute;left:0;top:48px;width:350px;height:3px;background:linear-gradient(90deg,#00ff78 0px,#02ff79 10px,#1eff7b 20px,#3cff7c 30px,#5dff7e 40px,#7fff80 50px,#a4ff82 60px,#ccff84 70px,#f7ff86 80px,#ffdd76 90px,#ffbd67 100px,#ffa35a 110px,#ff8d50 120px,#ff7b48 130px,#ff6c40 140px,#ff5f3a 150px,#ff5435 160px,#ff4a30 170px,#ff422c 180px,#ff3a28 190px,#ff3325 200px,#ff2d22 210px,#ff2720 220px,#ff221d 230px,#ff1d1b 240px,#ff1919 250px,#ff1517 260px,#ff1215 270px,#ff0e14 280px,#ff0b12 290px,#ff0811 300px,#ff060f 310px,#ff030e 320px,#ff010d 330px,#ff000c 340px,#ff000b 350px)"></div><div style="position:absolute;left:0;top:51px;width:350px;height:3px;background:linear-gradient(90deg,#00ff81 0px,#00ff82 10px,#1dff84 20px,#3cff86 30px,#5cff88 40px,#7fff8a 50px,#a5ff8c 60px,#cdff8f 70px,#f9ff91 80px,#ffdc80 90px,#ffbb6f 100px,#ffa162 110px,#ff8c57 120px,#ff7a4e 130px,#ff6b46 140px,#ff5e40 150px,#ff533a 160px,#ff4935 170px,#ff4130 180px,#ff392d 190px,#ff3229 200px,#ff2c26 210px,#ff2623 220px,#ff2120 230px,#ff1d1e 240px,#ff181c 250px,#ff141a 260px,#ff1118 270px,#ff0d16 280px,#ff0a15 290px,#ff0713 300px,#ff0512 310px,#ff0211 320px,#ff000f 330px,#ff000e 340px,#ff000d 350px)"></div><div style="position:absolute;left:0;top:54px;width:350px;height:3px;background:linear-gradient(90deg,#00ff89 0px,#00ff8b 10px,#1cff8d 20px,#3bff90 30px,#5cff92 40px,#7fff94 50px,#a5ff97 60px,#ceff9a 70px,#faff9d 80px,#ffda89 90px,#ffba78 100px,#ffa069 110px,#ff8b5e 120px,#ff7954 130px,#ff6a4c 140px,#ff5d45 150px,#ff523f 160px,#ff4839 170px,#ff4035 180px,#ff3831 190px,#ff312d 200px,#ff2b29 210px,#ff2526 220px,#ff2024 230px,#ff1c21 240px,#ff181f 250px,#ff141d 260px,#ff101b 270px,#ff0d19 280px,#ff0a17 290px,#ff0716 300px,#ff0414 310px,#ff0213 320px,#ff0012 330px,#ff0010 340px,#ff000f 350px)"></div><div style="position:absolute;left:0;top:57px;width:350px;height:3px;background:linear-gradient(90deg,#00ff92 0px,#00ff95 10px,#1bff97 20px,#3aff99 30px,#5bff9c 40px,#7fff9f 50px,#a5ffa2 60px,#ceffa5 70px,#fbffa9 80px,#ffd993 90px,#ffb880 100px,#ff9e71 110px,#ff8965 120px,#ff785a 130px,#ff6952 140px,#ff5c4a 150px,#ff5144 160px,#ff473e 170px,#ff3e39 180px,#ff3735 190px,#ff3031 200px,#ff2a2d 210px,#ff242a 220px,#ff1f27 230px,#ff1b24 240px,#ff1722 250px,#ff1320 260px,#ff0f1e 270px,#ff0c1c 280px,#ff091a 290px,#ff0618 300px,#ff0317 310px,#ff0115 320px,#ff0014 330px,#ff0013 340px,#ff0011 350px)"></div><div style="position:absolute;left:0;top:60px;width:350px;height:3px;background:linear-gradient(90deg,#00ff9b 0px,#00ff9e 10px,#1affa1 20px,#39ffa3 30px,#5affa7 40px,#7effaa 50px,#a5ffad 60px,#cfffb1 70px,#fcffb5 80px,#ffd89d 90px,#ffb789 100px,#ff9d79 110px,#ff886c 120px,#ff7661 130px,#ff6758 140px,#ff5b50 150px,#ff4f49 160px,#ff4643 170px,#ff3d3e 180px,#ff3639 190px,#ff2f35 200px,#ff2931 210px,#ff232d 220px,#ff1f2a 230px,#ff1a28 240px,#ff1625 250px,#ff1223 260px,#ff0e20 270px,#ff0b1e 280px,#ff081c 290px,#ff051b 300px,#ff0319 310px,#ff0018 320px,#ff0016 330px,#ff0015 340px,#ff0013 350px)"></div><div style="position:absolute;left:0;top:63px;width:350px;height:3px;background:linear-gradient(90deg,#00ffa5 0px,#00ffa7 10px,#18ffaa 20px,#38ffae 30px,#5affb1 40px,#7effb5 50px,#a5ffb9 60px,#d0ffbd 70px,#feffc2 80px,#ffd6a7 90px,#ffb692 100px,#ff9c81 110px,#ff8673 120px,#ff7567 130px,#ff665d 140px,#ff5955 150px,#ff4e4e 160px,#ff4548 170px,#ff3c42 180px,#ff353d 190px,#ff2e39 200px,#ff2835 210px,#ff2331 220px,#ff1e2e 230px,#ff192b 240px,#ff1528 250px,#ff1126 260px,#ff0e23 270px,#ff0a21 280px,#ff071f 290px,#ff051d 300px,#ff021c 310px,#ff001a 320px,#ff0018 330px,#ff0017 340px,#ff0016 350px)"></div><div style="position:absolute;left:0;top:66px;width:350px;height:3px;background:linear-gradient(90deg,#00ffae 0px,#00ffb1 10px,#17ffb5 20px,#37ffb8 30px,#59ffbc 40px,#7effc0 50px,#a6ffc5 60px,#d0ffca 70px,#ffffcf 80px,#ffd5b2 90px,#ffb49b 100px,#ff9a89 110px,#ff857a 120px,#ff736e 130px,#ff6563 140px,#ff585b 150px,#ff4d53 160px,#ff444c 170px,#ff3b46 180px,#ff3441 190px,#ff2d3d 200px,#ff2738 210px,#ff2235 220px,#ff1d31 230px,#ff182e 240px,#ff142b 250px,#ff1028 260px,#ff0d26 270px,#ff0a24 280px,#ff0722 290px,#ff0420 300px,#ff011e 310px,#ff001c 320px,#ff001b 330px,#ff0019 340px,#ff0018 350px)"></div><div style="position:absolute;left:0;top:69px;width:350px;height:3px;background:linear-gradient(90deg,#00ffb8 0px,#00ffbb 10px,#16ffbf 20px,#36ffc3 30px,#59ffc7 40px,#7effcc 50px,#a6ffd1 60px,#d1ffd6 70px,#fffedb 80px,#ffd3bc 90px,#ffb3a4 100px,#ff9991 110px,#ff8481 120px,#ff7274 130px,#ff6369 140px,#ff5760 150px,#ff4c58 160px,#ff4251 170px,#ff3a4b 180px,#ff3345 190px,#ff2c40 200px,#ff263c 210px,#ff2138 220px,#ff1c35 230px,#ff1731 240px,#ff132e 250px,#ff0f2b 260px,#ff0c29 270px,#ff0927 280px,#ff0624 290px,#ff0322 300px,#ff0020 310px,#ff001f 320px,#ff001d 330px,#ff001b 340px,#ff001a 350px)"></div><div style="position:absolute;left:0;top:72px;width:350px;height:3px;background:linear-gradient(90deg,#00ffc1 0px,#00ffc5 10px,#15ffc9 20px,#35ffce 30px,#58ffd3 40px,#7dffd8 50px,#a6ffdd 60px,#d2ffe3 70px,#fffce7 80px,#ffd2c6 90px,#ffb1ad 100px,#ff9799 110px,#ff8288 120px,#ff717b 130px,#ff626f 140px,#ff5566 150px,#ff4b5d 160px,#ff4156 170px,#ff394f 180px,#ff314a 190px,#ff2b44 200px,#ff2540 210px,#ff203c 220px,#ff1b38 230px,#ff1634 240px,#ff1231 250px,#ff0f2e 260px,#ff0b2c 270px,#ff0829 280px,#ff0527 290px,#ff0225 300px,#ff0023 310px,#ff0021 320px,#ff001f 330px,#ff001e 340px,#ff001c 350px)"></div><div style="position:absolute;left:0;top:75px;width:350px;height:3px;background:linear-gradient(90deg,#00ffcb 0px,#00ffd0 10px,#13ffd4 20px,#34ffd9 30px,#57ffde 40px,#7dffe4 50px,#a6ffea 60px,#d3fff1 70px,#fffbf4 80px,#ffd0d1 90px,#ffb0b6 100px,#ff96a1 110px,#ff8190 120px,#ff6f81 130px,#ff6175 140px,#ff546b 150px,#ff4962 160px,#ff405b 170px,#ff3854 180px,#ff304e 190px,#ff2a48 200px,#ff2444 210px,#ff1f3f 220px,#ff1a3b 230px,#ff1538 240px,#ff1134 250px,#ff0e31 260px,#ff0a2f 270px,#ff072c 280px,#ff042a 290px,#ff0227 300px,#ff0025 310px,#ff0023 320px,#ff0022 330px,#ff0020 340px,#ff001e 350px)"></div><div style="position:absolute;left:0;top:78px;width:350px;height:3px;background:linear-gradient(90deg,#00ffd5 0px,#00ffda 10px,#12ffdf 20px,#33ffe4 30px,#57ffea 40px,#7dfff0 50px,#a7fff7 60px,#d4fffe 70px,#fdf8ff 80px,#ffcfdc 90px,#ffaec0 100px,#ff94a9 110px,#ff7f97 120px,#ff6e88 130px,#ff5f7c 140px,#ff5371 150px,#ff4868 160px,#ff3f60 170px,#ff3758 180px,#ff2f52 190px,#ff294c 200px,#ff2347 210px,#ff1e43 220px,#ff193f 230px,#ff153b 240px,#ff1138 250px,#ff0d34 260px,#ff0a31 270px,#ff062f 280px,#ff032c 290px,#ff012a 300px,#ff0028 310px,#ff0026 320px,#ff0024 330px,#ff0022 340px,#ff0020 350px)"></div><div style="position:absolute;left:0;top:81px;width:350px;height:3px;background:linear-gradient(90deg,#00ffe0 0px,#00ffe5 10px,#11ffea 20px,#32fff0 30px,#56fff6 40px,#7dfffd 50px,#a3faff 60px,#caf2ff 70px,#f1ebff 80px,#ffcde7 90px,#ffadc9 100px,#ff93b2 110px,#ff7e9f 120px,#ff6d8f 130px,#ff5e82 140px,#ff5277 150px,#ff476d 160px,#ff3e64 170px,#ff355d 180px,#ff2e56 190px,#ff2851 200px,#ff224b 210px,#ff1d47 220px,#ff1842 230px,#ff143e 240px,#ff103b 250px,#ff0c37 260px,#ff0934 270px,#ff0632 280px,#ff032f 290px,#ff002d 300px,#ff002a 310px,#ff0028 320px,#ff0026 330px,#ff0024 340px,#ff0023 350px)"></div><div style="position:absolute;left:0;top:84px;width:350px;height:3px;background:linear-gradient(90deg,#00ffea 0px,#00fff0 10px,#0ffff6 20px,#31fffc 30px,#54fbff 40px,#77f4ff 50px,#9bedff 60px,#c0e6ff 70px,#e6dfff 80px,#ffccf2 90px,#ffabd3 100px,#ff91ba 110px,#ff7ca6 120px,#ff6b96 130px,#ff5d88 140px,#ff507c 150px,#ff4672 160px,#ff3c69 170px,#ff3462 180px,#ff2d5b 190px,#ff2755 200px,#ff214f 210px,#ff1c4a 220px,#ff1746 230px,#ff1342 240px,#ff0f3e 250px,#ff0b3a 260px,#ff0837 270px,#ff0534 280px,#ff0232 290px,#ff002f 300px,#ff002d 310px,#ff002b 320px,#ff0029 330px,#ff0027 340px,#ff0025 350px)"></div><div style="position:absolute;left:0;top:87px;width:350px;height:3px;background:linear-gradient(90deg,#00fff5 0px,#00fffb 10px,#0efdff 20px,#2ef6ff 30px,#4ff0ff 40px,#71e9ff 50px,#94e2ff 60px,#b8dbff 70px,#dcd3ff 80px,#ffcafd 90px,#ffa9dc 100px,#ff90c3 110px,#ff7bae 120px,#ff6a9d 130px,#ff5b8e 140px,#ff4f82 150px,#ff4477 160px,#ff3b6e 170px,#ff3366 180px,#ff2c5f 190px,#ff2659 200px,#ff2053 210px,#ff1b4e 220px,#ff1649 230px,#ff1245 240px,#ff0e41 250px,#ff0a3d 260px,#ff073a 270px,#ff0437 280px,#ff0134 290px,#ff0032 300px,#ff002f 310px,#ff002d 320px,#ff002b 330px,#ff0029 340px,#ff0027 350px)"></div><div style="position:absolute;left:0;top:90px;width:350px;height:3px;background:linear-gradient(90deg,#00feff 0px,#00f8ff 10px,#0cf2ff 20px,#2bebff 30px,#4be5ff 40px,#6cdeff 50px,#8dd7ff 60px,#afd0ff 70px,#d2c9ff 80px,#f6c2ff 90px,#ffa8e6 100px,#ff8ecb 110px,#ff79b5 120px,#ff68a4 130px,#ff5a95 140px,#ff4e88 150px,#ff437d 160px,#ff3a73 170px,#ff326b 180px,#ff2b63 190px,#ff255d 200px,#ff1f57 210px,#ff1a52 220px,#ff154d 230px,#ff1148 240px,#ff0d44 250px,#ff0941 260px,#ff063d 270px,#ff033a 280px,#ff0037 290px,#ff0034 300px,#ff0032 310px,#ff002f 320px,#ff002d 330px,#ff002b 340px,#ff0029 350px)"></div><div style="position:absolute;left:0;top:93px;width:350px;height:3px;background:linear-gradient(90deg,#00f3ff 0px,#00edff 10px,#0ae7ff 20px,#28e1ff 30px,#47daff 40px,#67d4ff 50px,#87cdff 60px,#a8c6ff 70px,#cabfff 80px,#ecb8ff 90px,#ffa6f0 100px,#ff8dd4 110px,#ff78bd 120px,#ff67ab 130px,#ff589b 140px,#ff4c8e 150px,#ff4282 160px,#ff3978 170px,#ff3170 180px,#ff2a68 190px,#ff2361 200px,#ff1e5b 210px,#ff1955 220px,#ff1450 230px,#ff104c 240px,#ff0c47 250px,#ff0944 260px,#ff0540 270px,#ff023d 280px,#ff003a 290px,#ff0037 300px,#ff0034 310px,#ff0032 320px,#ff0030 330px,#ff002d 340px,#ff002b 350px)"></div><div style="position:absolute;left:0;top:96px;width:350px;height:3px;background:linear-gradient(90deg,#00e9ff 0px,#00e3ff 10px,#08ddff 20px,#26d7ff 30px,#43d1ff 40px,#62caff 50px,#81c4ff 60px,#a1bdff 70px,#c1b6ff 80px,#e2afff 90px,#ffa5fa 100px,#ff8bdd 110px,#ff76c5 120px,#ff65b2 130px,#ff57a1 140px,#ff4b94 150px,#ff4188 160px,#ff387d 170px,#ff3074 180px,#ff296c 190px,#ff2265 200px,#ff1d5f 210px,#ff1859 220px,#ff1354 230px,#ff0f4f 240px,#ff0b4b 250px,#ff0847 260px,#ff0443 270px,#ff0240 280px,#ff003c 290px,#ff003a 300px,#ff0037 310px,#ff0034 320px,#ff0032 330px,#ff0030 340px,#ff002e 350px)"></div><div style="position:absolute;left:0;top:99px;width:350px;height:3px;background:linear-gradient(90deg,#00e0ff 0px,#00daff 10px,#07d4ff 20px,#23ceff 30px,#40c8ff 40px,#5dc1ff 50px,#7cbbff 60px,#9ab4ff 70px,#b9aeff 80px,#d9a7ff 90px,#faa0ff 100px,#ff89e6 110px,#ff75cd 120px,#ff64b9 130px,#ff56a8 140px,#ff4a99 150px,#ff3f8d 160px,#ff3682 170px,#ff2e79 180px,#ff2771 190px,#ff2169 200px,#ff1c63 210px,#ff175d 220px,#ff1257 230px,#ff0e52 240px,#ff0a4e 250px,#ff074a 260px,#ff0446 270px,#ff0142 280px,#ff003f 290px,#ff003c 300px,#ff0039 310px,#ff0037 320px,#ff0034 330px,#ff0032 340px,#ff0030 350px)"></div><div style="position:absolute;left:0;top:102px;width:350px;height:3px;background:linear-gradient(90deg,#00d7ff 0px,#00d1ff 10px,#05ccff 20px,#21c6ff 30px,#3dbfff 40px,#59b9ff 50px,#76b3ff 60px,#94acff 70px,#b2a6ff 80px,#d19fff 90px,#f198ff 100px,#ff88ee 110px,#ff73d5 120px,#ff62c0 130px,#ff54ae 140px,#ff489f 150px,#ff3e93 160px,#ff3588 170px,#ff2d7e 180px,#ff2675 190px,#ff206d 200px,#ff1b67 210px,#ff1660 220px,#ff115b 230px,#ff0d56 240px,#ff0951 250px,#ff064d 260px,#ff0349 270px,#ff0045 280px,#ff0042 290px,#ff003f 300px,#ff003c 310px,#ff0039 320px,#ff0037 330px,#ff0034 340px,#ff0032 350px)"></div><div style="position:absolute;left:0;top:105px;width:350px;height:3px;background:linear-gradient(90deg,#00cfff 0px,#00c9ff 10px,#04c3ff 20px,#1ebdff 30px,#3ab7ff 40px,#55b1ff 50px,#71abff 60px,#8ea5ff 70px,#ab9eff 80px,#c998ff 90px,#e891ff 100px,#ff86f8 110px,#ff72dd 120px,#ff61c7 130px,#ff53b5 140px,#ff47a5 150px,#ff3d98 160px,#ff348d 170px,#ff2c83 180px,#ff257a 190px,#ff1f72 200px,#ff1a6b 210px,#ff1564 220px,#ff105e 230px,#ff0c59 240px,#ff0854 250px,#ff0550 260px,#ff024c 270px,#ff0048 280px,#ff0045 290px,#ff0041 300px,#ff003e 310px,#ff003c 320px,#ff0039 330px,#ff0037 340px,#ff0034 350px)"></div><div style="position:absolute;left:0;top:108px;width:350px;height:3px;background:linear-gradient(90deg,#00c7ff 0px,#00c1ff 10px,#02bcff 20px,#1cb6ff 30px,#37b0ff 40px,#51aaff 50px,#6da4ff 60px,#899eff 70px,#a597ff 80px,#c291ff 90px,#df8aff 100px,#fd83ff 110px,#ff70e5 120px,#ff5fce 130px,#ff51bc 140px,#ff45ac 150px,#ff3b9e 160px,#ff3292 170px,#ff2b87 180px,#ff247e 190px,#ff1e76 200px,#ff186f 210px,#ff1468 220px,#ff0f62 230px,#ff0b5d 240px,#ff0858 250px,#ff0453 260px,#ff014f 270px,#ff004b 280px,#ff0047 290px,#ff0044 300px,#ff0041 310px,#ff003e 320px,#ff003b 330px,#ff0039 340px,#ff0036 350px)"></div><div style="position:absolute;left:0;top:111px;width:350px;height:3px;background:linear-gradient(90deg,#00c0ff 0px,#00baff 10px,#01b4ff 20px,#1aafff 30px,#34a9ff 40px,#4ea3ff 50px,#689dff 60px,#8397ff 70px,#9f91ff 80px,#bb8aff 90px,#d784ff 100px,#f47dff 110px,#ff6eed 120px,#ff5ed6 130px,#ff50c2 140px,#ff44b2 150px,#ff3aa3 160px,#ff3197 170px,#ff2a8c 180px,#ff2383 190px,#ff1d7a 200px,#ff1773 210px,#ff136c 220px,#ff0e66 230px,#ff0a60 240px,#ff075b 250px,#ff0356 260px,#ff0052 270px,#ff004e 280px,#ff004a 290px,#ff0047 300px,#ff0044 310px,#ff0041 320px,#ff003e 330px,#ff003b 340px,#ff0039 350px)"></div><div style="position:absolute;left:0;top:114px;width:350px;height:3px;background:linear-gradient(90deg,#00b9ff 0px,#00b3ff 10px,#00aeff 20px,#18a8ff 30px,#31a2ff 40px,#4b9cff 50px,#6497ff 60px,#7f91ff 70px,#998aff 80px,#b484ff 90px,#d07eff 100px,#ec77ff 110px,#ff6df6 120px,#ff5cdd 130px,#ff4ec9 140px,#ff43b8 150px,#ff39a9 160px,#ff309c 170px,#ff2891 180px,#ff2287 190px,#ff1c7f 200px,#ff1677 210px,#ff1270 220px,#ff0d69 230px,#ff0963 240px,#ff065e 250px,#ff0259 260px,#ff0055 270px,#ff0051 280px,#ff004d 290px,#ff0049 300px,#ff0046 310px,#ff0043 320px,#ff0040 330px,#ff003d 340px,#ff003b 350px)"></div><div style="position:absolute;left:0;top:117px;width:350px;height:3px;background:linear-gradient(90deg,#00b2ff 0px,#00adff 10px,#00a7ff 20px,#17a2ff 30px,#2f9cff 40px,#4796ff 50px,#6090ff 60px,#7a8bff 70px,#9485ff 80px,#ae7eff 90px,#c978ff 100px,#e472ff 110px,#ff6bfe 120px,#ff5be5 130px,#ff4dd0 140px,#ff41be 150px,#ff37af 160px,#ff2fa2 170px,#ff2796 180px,#ff208c 190px,#ff1b83 200px,#ff157b 210px,#ff1173 220px,#ff0c6d 230px,#ff0867 240px,#ff0561 250px,#ff015c 260px,#ff0058 270px,#ff0054 280px,#ff0050 290px,#ff004c 300px,#ff0049 310px,#ff0046 320px,#ff0043 330px,#ff0040 340px,#ff003d 350px)"></div><div style="position:absolute;left:0;top:120px;width:350px;height:3px;background:linear-gradient(90deg,#00abff 0px,#00a6ff 10px,#00a1ff 20px,#159bff 30px,#2c96ff 40px,#4490ff 50px,#5d8bff 60px,#7685ff 70px,#8f7fff 80px,#a879ff 90px,#c273ff 100px,#dd6dff 110px,#f866ff 120px,#ff59ec 130px,#ff4bd7 140px,#ff40c4 150px,#ff36b4 160px,#ff2da7 170px,#ff269b 180px,#ff1f90 190px,#ff1987 200px,#ff147f 210px,#ff0f77 220px,#ff0b71 230px,#ff076a 240px,#ff0465 250px,#ff0160 260px,#ff005b 270px,#ff0057 280px,#ff0053 290px,#ff004f 300px,#ff004b 310px,#ff0048 320px,#ff0045 330px,#ff0042 340px,#ff003f 350px)"></div><div style="position:absolute;left:0;top:123px;width:350px;height:3px;background:linear-gradient(90deg,#00a5ff 0px,#00a0ff 10px,#009bff 20px,#1396ff 30px,#2a90ff 40px,#428bff 50px,#5985ff 60px,#717fff 70px,#8a7aff 80px,#a374ff 90px,#bc6eff 100px,#d668ff 110px,#f062ff 120px,#ff57f4 130px,#ff4add 140px,#ff3eca 150px,#ff35ba 160px,#ff2cac 170px,#ff25a0 180px,#ff1e95 190px,#ff188c 200px,#ff1383 210px,#ff0e7b 220px,#ff0a74 230px,#ff066e 240px,#ff0368 250px,#ff0063 260px,#ff005e 270px,#ff0059 280px,#ff0055 290px,#ff0051 300px,#ff004e 310px,#ff004b 320px,#ff0047 330px,#ff0044 340px,#ff0042 350px)"></div><div style="position:absolute;left:0;top:126px;width:350px;height:3px;background:linear-gradient(90deg,#00a0ff 0px,#009bff 10px,#0095ff 20px,#1290ff 30px,#288bff 40px,#3f85ff 50px,#5680ff 60px,#6d7aff 70px,#8575ff 80px,#9e6fff 90px,#b669ff 100px,#cf63ff 110px,#e95dff 120px,#ff56fc 130px,#ff48e4 140px,#ff3dd1 150px,#ff33c0 160px,#ff2bb2 170px,#ff23a5 180px,#ff1d9a 190px,#ff1790 200px,#ff1287 210px,#ff0d7f 220px,#ff0978 230px,#ff0571 240px,#ff026c 250px,#ff0066 260px,#ff0061 270px,#ff005c 280px,#ff0058 290px,#ff0054 300px,#ff0050 310px,#ff004d 320px,#ff004a 330px,#ff0047 340px,#ff0044 350px)"></div><div style="position:absolute;left:0;top:129px;width:350px;height:3px;background:linear-gradient(90deg,#009aff 0px,#0095ff 10px,#0090ff 20px,#108bff 30px,#2686ff 40px,#3c80ff 50px,#537bff 60px,#6a75ff 70px,#8170ff 80px,#996aff 90px,#b164ff 100px,#c95fff 110px,#e259ff 120px,#fb53ff 130px,#ff47eb 140px,#ff3bd7 150px,#ff32c6 160px,#ff29b7 170px,#ff22aa 180px,#ff1c9f 190px,#ff1694 200px,#ff118b 210px,#ff0c83 220px,#ff087c 230px,#ff0475 240px,#ff016f 250px,#ff0069 260px,#ff0064 270px,#ff005f 280px,#ff005b 290px,#ff0057 300px,#ff0053 310px,#ff0050 320px,#ff004c 330px,#ff0049 340px,#ff0046 350px)"></div><div style="position:absolute;left:0;top:132px;width:350px;height:3px;background:linear-gradient(90deg,#0095ff 0px,#0090ff 10px,#008bff 20px,#0f86ff 30px,#2481ff 40px,#3a7cff 50px,#5076ff 60px,#6671ff 70px,#7d6bff 80px,#9466ff 90px,#ab60ff 100px,#c35aff 110px,#db55ff 120px,#f34fff 130px,#ff45f3 140px,#ff3ade 150px,#ff30cc 160px,#ff28bc 170px,#ff21af 180px,#ff1aa3 190px,#ff1599 200px,#ff108f 210px,#ff0b87 220px,#ff077f 230px,#ff0379 240px,#ff0072 250px,#ff006c 260px,#ff0067 270px,#ff0062 280px,#ff005e 290px,#ff005a 300px,#ff0056 310px,#ff0052 320px,#ff004f 330px,#ff004c 340px,#ff0049 350px)"></div><div style="position:absolute;left:0;top:135px;width:350px;height:3px;background:linear-gradient(90deg,#0090ff 0px,#008bff 10px,#0086ff 20px,#0d81ff 30px,#227cff 40px,#3777ff 50px,#4d72ff 60px,#636cff 70px,#7967ff 80px,#8f62ff 90px,#a65cff 100px,#bd56ff 110px,#d551ff 120px,#ec4bff 130px,#ff44fa 140px,#ff38e4 150px,#ff2fd2 160px,#ff27c2 170px,#ff20b4 180px,#ff19a8 190px,#ff149d 200px,#ff0f94 210px,#ff0a8b 220px,#ff0683 230px,#ff027c 240px,#ff0076 250px,#ff0070 260px,#ff006a 270px,#ff0065 280px,#ff0061 290px,#ff005c 300px,#ff0058 310px,#ff0055 320px,#ff0051 330px,#ff004e 340px,#ff004b 350px)"></div><div style="position:absolute;left:0;top:138px;width:350px;height:3px;background:linear-gradient(90deg,#008bff 0px,#0086ff 10px,#0081ff 20px,#0c7dff 30px,#2178ff 40px,#3572ff 50px,#4a6dff 60px,#5f68ff 70px,#7563ff 80px,#8b5eff 90px,#a158ff 100px,#b853ff 110px,#ce4dff 120px,#e647ff 130px,#fd42ff 140px,#ff37eb 150px,#ff2dd8 160px,#ff25c8 170px,#ff1eb9 180px,#ff18ad 190px,#ff12a2 200px,#ff0d98 210px,#ff098f 220px,#ff0587 230px,#ff0180 240px,#ff0079 250px,#ff0073 260px,#ff006d 270px,#ff0068 280px,#ff0064 290px,#ff005f 300px,#ff005b 310px,#ff0057 320px,#ff0054 330px,#ff0050 340px,#ff004d 350px)"></div><div style="position:absolute;left:0;top:141px;width:350px;height:3px;background:linear-gradient(90deg,#0087ff 0px,#0082ff 10px,#007dff 20px,#0b78ff 30px,#1f73ff 40px,#336eff 50px,#4869ff 60px,#5c64ff 70px,#715fff 80px,#875aff 90px,#9c54ff 100px,#b24fff 110px,#c949ff 120px,#df44ff 130px,#f63eff 140px,#ff35f1 150px,#ff2cde 160px,#ff24cd 170px,#ff1dbe 180px,#ff17b2 190px,#ff11a6 200px,#ff0c9c 210px,#ff0893 220px,#ff048b 230px,#ff0083 240px,#ff007c 250px,#ff0076 260px,#ff0071 270px,#ff006b 280px,#ff0066 290px,#ff0062 300px,#ff005e 310px,#ff005a 320px,#ff0056 330px,#ff0053 340px,#ff004f 350px)"></div><div style="position:absolute;left:0;top:144px;width:350px;height:3px;background:linear-gradient(90deg,#0082ff 0px,#007dff 10px,#0079ff 20px,#0a74ff 30px,#1d6fff 40px,#316aff 50px,#4565ff 60px,#5960ff 70px,#6e5bff 80px,#8356ff 90px,#9851ff 100px,#ad4bff 110px,#c346ff 120px,#d941ff 130px,#f03bff 140px,#ff34f8 150px,#ff2be4 160px,#ff23d3 170px,#ff1cc4 180px,#ff15b6 190px,#ff10ab 200px,#ff0ba0 210px,#ff0797 220px,#ff038f 230px,#ff0087 240px,#ff0080 250px,#ff007a 260px,#ff0074 270px,#ff006e 280px,#ff0069 290px,#ff0065 300px,#ff0060 310px,#ff005c 320px,#ff0059 330px,#ff0055 340px,#ff0052 350px)"></div><div style="position:absolute;left:0;top:147px;width:350px;height:3px;background:linear-gradient(90deg,#007eff 0px,#0079ff 10px,#0075ff 20px,#0970ff 30px,#1c6bff 40px,#2f66ff 50px,#4362ff 60px,#575dff 70px,#6b58ff 80px,#7f52ff 90px,#944dff 100px,#a948ff 110px,#be43ff 120px,#d33dff 130px,#e938ff 140px,#ff32ff 150px,#ff29ea 160px,#ff21d8 170px,#ff1ac9 180px,#ff14bb 190px,#ff0faf 200px,#ff0aa5 210px,#ff069b 220px,#ff0292 230px,#ff008b 240px,#ff0083 250px,#ff007d 260px,#ff0077 270px,#ff0071 280px,#ff006c 290px,#ff0067 300px,#ff0063 310px,#ff005f 320px,#ff005b 330px,#ff0057 340px,#ff0054 350px)"></div><div style="position:absolute;left:0;top:150px;width:350px;height:3px;background:linear-gradient(90deg,#007aff 0px,#0075ff 10px,#0071ff 20px,#086cff 30px,#1a67ff 40px,#2d63ff 50px,#405eff 60px,#5459ff 70px,#6854ff 80px,#7b4fff 90px,#904aff 100px,#a445ff 110px,#b940ff 120px,#ce3aff 130px,#e335ff 140px,#f930ff 150px,#ff28f0 160px,#ff20de 170px,#ff19ce 180px,#ff13c0 190px,#ff0eb4 200px,#ff09a9 210px,#ff059f 220px,#ff0196 230px,#ff008e 240px,#ff0087 250px,#ff0080 260px,#ff007a 270px,#ff0074 280px,#ff006f 290px,#ff006a 300px,#ff0066 310px,#ff0061 320px,#ff005e 330px,#ff005a 340px,#ff0056 350px)"></div><div style="position:absolute;left:0;top:153px;width:350px;height:3px;background:linear-gradient(90deg,#0076ff 0px,#0072ff 10px,#006dff 20px,#0768ff 30px,#1964ff 40px,#2b5fff 50px,#3e5aff 60px,#5156ff 70px,#6451ff 80px,#784cff 90px,#8c47ff 100px,#a042ff 110px,#b43dff 120px,#c937ff 130px,#dd32ff 140px,#f22dff 150px,#ff26f6 160px,#ff1ee4 170px,#ff18d3 180px,#ff12c5 190px,#ff0cb9 200px,#ff08ad 210px,#ff04a3 220px,#ff009a 230px,#ff0092 240px,#ff008a 250px,#ff0083 260px,#ff007d 270px,#ff0077 280px,#ff0072 290px,#ff006d 300px,#ff0068 310px,#ff0064 320px,#ff0060 330px,#ff005c 340px,#ff0059 350px)"></div><div style="position:absolute;left:0;top:156px;width:350px;height:3px;background:linear-gradient(90deg,#0072ff 0px,#006eff 10px,#0069ff 20px,#0665ff 30px,#1860ff 40px,#2a5cff 50px,#3c57ff 60px,#4f52ff 70px,#624eff 80px,#7549ff 90px,#8844ff 100px,#9c3fff 110px,#af3aff 120px,#c335ff 130px,#d830ff 140px,#ec2aff 150px,#ff25fd 160px,#ff1de9 170px,#ff16d9 180px,#ff10ca 190px,#ff0bbd 200px,#ff07b2 210px,#ff02a7 220px,#ff009e 230px,#ff0095 240px,#ff008e 250px,#ff0087 260px,#ff0080 270px,#ff007a 280px,#ff0075 290px,#ff0070 300px,#ff006b 310px,#ff0067 320px,#ff0063 330px,#ff005f 340px,#ff005b 350px)"></div><div style="position:absolute;left:0;top:159px;width:350px;height:3px;background:linear-gradient(90deg,#006fff 0px,#006aff 10px,#0066ff 20px,#0561ff 30px,#165dff 40px,#2858ff 50px,#3a54ff 60px,#4c4fff 70px,#5f4bff 80px,#7146ff 90px,#8441ff 100px,#983cff 110px,#ab37ff 120px,#bf32ff 130px,#d32dff 140px,#e728ff 150px,#fb23ff 160px,#ff1cef 170px,#ff15de 180px,#ff0fcf 190px,#ff0ac2 200px,#ff05b6 210px,#ff01ab 220px,#ff00a2 230px,#ff0099 240px,#ff0091 250px,#ff008a 260px,#ff0084 270px,#ff007d 280px,#ff0078 290px,#ff0073 300px,#ff006e 310px,#ff0069 320px,#ff0065 330px,#ff0061 340px,#ff005d 350px)"></div><div style="position:absolute;left:0;top:162px;width:350px;height:3px;background:linear-gradient(90deg,#006bff 0px,#0067ff 10px,#0063ff 20px,#045eff 30px,#155aff 40px,#2655ff 50px,#3851ff 60px,#4a4cff 70px,#5c48ff 80px,#6e43ff 90px,#813eff 100px,#9439ff 110px,#a734ff 120px,#ba30ff 130px,#cd2bff 140px,#e126ff 150px,#f520ff 160px,#ff1af5 170px,#ff14e4 180px,#ff0ed4 190px,#ff09c7 200px,#ff04ba 210px,#ff00b0 220px,#ff00a6 230px,#ff009d 240px,#ff0095 250px,#ff008d 260px,#ff0087 270px,#ff0080 280px,#ff007b 290px,#ff0075 300px,#ff0070 310px,#ff006c 320px,#ff0068 330px,#ff0064 340px,#ff0060 350px)"></div><div style="position:absolute;left:0;top:165px;width:350px;height:3px;background:linear-gradient(90deg,#0068ff 0px,#0064ff 10px,#005fff 20px,#035bff 30px,#1457ff 40px,#2552ff 50px,#364eff 60px,#4849ff 70px,#5945ff 80px,#6b40ff 90px,#7e3bff 100px,#9037ff 110px,#a332ff 120px,#b52dff 130px,#c828ff 140px,#dc23ff 150px,#ef1eff 160px,#ff19fb 170px,#ff12e9 180px,#ff0dd9 190px,#ff08cb 200px,#ff03bf 210px,#ff00b4 220px,#ff00aa 230px,#ff00a1 240px,#ff0098 250px,#ff0091 260px,#ff008a 270px,#ff0084 280px,#ff007e 290px,#ff0078 300px,#ff0073 310px,#ff006e 320px,#ff006a 330px,#ff0066 340px,#ff0062 350px)"></div><div style="position:absolute;left:0;top:168px;width:350px;height:3px;background:linear-gradient(90deg,#0065ff 0px,#0060ff 10px,#005cff 20px,#0258ff 30px,#1354ff 40px,#234fff 50px,#344bff 60px,#4647ff 70px,#5742ff 80px,#693dff 90px,#7a39ff 100px,#8c34ff 110px,#9f30ff 120px,#b12bff 130px,#c426ff 140px,#d721ff 150px,#ea1cff 160px,#fd17ff 170px,#ff11ee 180px,#ff0bde 190px,#ff06d0 200px,#ff02c3 210px,#ff00b8 220px,#ff00ae 230px,#ff00a4 240px,#ff009c 250px,#ff0094 260px,#ff008d 270px,#ff0087 280px,#ff0081 290px,#ff007b 300px,#ff0076 310px,#ff0071 320px,#ff006d 330px,#ff0068 340px,#ff0064 350px)"></div><div style="position:absolute;left:0;top:171px;width:350px;height:3px;background:linear-gradient(90deg,#0061ff 0px,#005dff 10px,#0059ff 20px,#0155ff 30px,#1151ff 40px,#224dff 50px,#3348ff 60px,#4344ff 70px,#553fff 80px,#663bff 90px,#7736ff 100px,#8932ff 110px,#9b2dff 120px,#ad28ff 130px,#bf24ff 140px,#d21fff 150px,#e41aff 160px,#f715ff 170px,#ff0ff4 180px,#ff0ae3 190px,#ff05d5 200px,#ff01c8 210px,#ff00bc 220px,#ff00b2 230px,#ff00a8 240px,#ff00a0 250px,#ff0098 260px,#ff0090 270px,#ff008a 280px,#ff0084 290px,#ff007e 300px,#ff0079 310px,#ff0074 320px,#ff006f 330px,#ff006b 340px,#ff0067 350px)"></div><div style="position:absolute;left:0;top:174px;width:350px;height:3px;background:linear-gradient(90deg,#005eff 0px,#005aff 10px,#0056ff 20px,#0052ff 30px,#104eff 40px,#214aff 50px,#3146ff 60px,#4241ff 70px,#523dff 80px,#6338ff 90px,#7434ff 100px,#862fff 110px,#972bff 120px,#a926ff 130px,#bb22ff 140px,#cd1dff 150px,#df18ff 160px,#f213ff 170px,#ff0ef9 180px,#ff09e9 190px,#ff04da 200px,#ff00cc 210px,#ff00c0 220px,#ff00b6 230px,#ff00ac 240px,#ff00a3 250px,#ff009b 260px,#ff0094 270px,#ff008d 280px,#ff0087 290px,#ff0081 300px,#ff007b 310px,#ff0076 320px,#ff0072 330px,#ff006d 340px,#ff0069 350px)"></div><div style="position:absolute;left:0;top:177px;width:350px;height:3px;background:linear-gradient(90deg,#005cff 0px,#0058ff 10px,#0054ff 20px,#004fff 30px,#0f4bff 40px,#1f47ff 50px,#2f43ff 60px,#403fff 70px,#503aff 80px,#6136ff 90px,#7132ff 100px,#822dff 110px,#9429ff 120px,#a524ff 130px,#b720ff 140px,#c81bff 150px,#da16ff 160px,#ed11ff 170px,#ff0dff 180px,#ff07ee 190px,#ff03de 200px,#ff00d1 210px,#ff00c5 220px,#ff00ba 230px,#ff00b0 240px,#ff00a7 250px,#ff009e 260px,#ff0097 270px,#ff0090 280px,#ff008a 290px,#ff0084 300px,#ff007e 310px,#ff0079 320px,#ff0074 330px,#ff0070 340px,#ff006c 350px)"></div><div style="position:absolute;left:0;top:180px;width:350px;height:3px;background:linear-gradient(90deg,#0059ff 0px,#0055ff 10px,#0051ff 20px,#004dff 30px,#0e49ff 40px,#1e45ff 50px,#2e40ff 60px,#3e3cff 70px,#4e38ff 80px,#5e34ff 90px,#6f2fff 100px,#7f2bff 110px,#9027ff 120px,#a122ff 130px,#b31eff 140px,#c419ff 150px,#d614ff 160px,#e710ff 170px,#f90bff 180px,#ff06f3 190px,#ff01e3 200px,#ff00d5 210px,#ff00c9 220px,#ff00be 230px,#ff00b4 240px,#ff00aa 250px,#ff00a2 260px,#ff009a 270px,#ff0093 280px,#ff008d 290px,#ff0087 300px,#ff0081 310px,#ff007c 320px,#ff0077 330px,#ff0072 340px,#ff006e 350px)"></div><div style="position:absolute;left:0;top:183px;width:350px;height:3px;background:linear-gradient(90deg,#0056ff 0px,#0052ff 10px,#004eff 20px,#004aff 30px,#0d46ff 40px,#1d42ff 50px,#2c3eff 60px,#3c3aff 70px,#4c36ff 80px,#5c32ff 90px,#6c2dff 100px,#7c29ff 110px,#8d25ff 120px,#9e20ff 130px,#af1cff 140px,#c017ff 150px,#d113ff 160px,#e20eff 170px,#f409ff 180px,#ff05f8 190px,#ff00e8 200px,#ff00da 210px,#ff00cd 220px,#ff00c2 230px,#ff00b7 240px,#ff00ae 250px,#ff00a5 260px,#ff009e 270px,#ff0096 280px,#ff0090 290px,#ff0089 300px,#ff0084 310px,#ff007e 320px,#ff0079 330px,#ff0075 340px,#ff0070 350px)"></div><div style="position:absolute;left:0;top:186px;width:350px;height:3px;background:linear-gradient(90deg,#0053ff 0px,#0050ff 10px,#004cff 20px,#0048ff 30px,#0c44ff 40px,#1b40ff 50px,#2b3cff 60px,#3a38ff 70px,#4a34ff 80px,#5a2fff 90px,#692bff 100px,#7a27ff 110px,#8a23ff 120px,#9a1eff 130px,#ab1aff 140px,#bc16ff 150px,#cd11ff 160px,#de0cff 170px,#ef08ff 180px,#ff03fd 190px,#ff00ed 200px,#ff00de 210px,#ff00d1 220px,#ff00c6 230px,#ff00bb 240px,#ff00b2 250px,#ff00a9 260px,#ff00a1 270px,#ff0099 280px,#ff0093 290px,#ff008c 300px,#ff0087 310px,#ff0081 320px,#ff007c 330px,#ff0077 340px,#ff0073 350px)"></div><div style="position:absolute;left:0;top:189px;width:350px;height:3px;background:linear-gradient(90deg,#0051ff 0px,#004dff 10px,#0049ff 20px,#0045ff 30px,#0b41ff 40px,#1a3eff 50px,#293aff 60px,#3836ff 70px,#4831ff 80px,#572dff 90px,#6729ff 100px,#7725ff 110px,#8721ff 120px,#971dff 130px,#a718ff 140px,#b814ff 150px,#c80fff 160px,#d90bff 170px,#ea06ff 180px,#fb02ff 190px,#ff00f2 200px,#ff00e3 210px,#ff00d6 220px,#ff00ca 230px,#ff00bf 240px,#ff00b5 250px,#ff00ac 260px,#ff00a4 270px,#ff009d 280px,#ff0096 290px,#ff008f 300px,#ff0089 310px,#ff0084 320px,#ff007f 330px,#ff007a 340px,#ff0075 350px)"></div><div style="position:absolute;left:0;top:192px;width:350px;height:3px;background:linear-gradient(90deg,#004eff 0px,#004bff 10px,#0047ff 20px,#0043ff 30px,#0b3fff 40px,#193bff 50px,#2837ff 60px,#3733ff 70px,#462fff 80px,#552bff 90px,#6527ff 100px,#7423ff 110px,#841fff 120px,#941bff 130px,#a416ff 140px,#b412ff 150px,#c40eff 160px,#d509ff 170px,#e505ff 180px,#f600ff 190px,#ff00f7 200px,#ff00e8 210px,#ff00da 220px,#ff00ce 230px,#ff00c3 240px,#ff00b9 250px,#ff00b0 260px,#ff00a8 270px,#ff00a0 280px,#ff0099 290px,#ff0092 300px,#ff008c 310px,#ff0087 320px,#ff0081 330px,#ff007c 340px,#ff0078 350px)"></div><div style="position:absolute;left:0;top:195px;width:350px;height:3px;background:linear-gradient(90deg,#004cff 0px,#0048ff 10px,#0045ff 20px,#0041ff 30px,#0a3dff 40px,#1839ff 50px,#2735ff 60px,#3531ff 70px,#442dff 80px,#5329ff 90px,#6225ff 100px,#7121ff 110px,#811dff 120px,#9019ff 130px,#a015ff 140px,#b011ff 150px,#c00cff 160px,#d008ff 170px,#e104ff 180px,#f100ff 190px,#ff00fc 200px,#ff00ec 210px,#ff00df 220px,#ff00d2 230px,#ff00c7 240px,#ff00bd 250px,#ff00b3 260px,#ff00ab 270px,#ff00a3 280px,#ff009c 290px,#ff0095 300px,#ff008f 310px,#ff0089 320px,#ff0084 330px,#ff007f 340px,#ff007a 350px)"></div><div style="position:absolute;left:0;top:198px;width:350px;height:3px;background:linear-gradient(90deg,#004aff 0px,#0046ff 10px,#0042ff 20px,#003fff 30px,#093bff 40px,#1737ff 50px,#2533ff 60px,#342fff 70px,#422bff 80px,#5128ff 90px,#6024ff 100px,#6f20ff 110px,#7e1bff 120px,#8d17ff 130px,#9d13ff 140px,#ad0fff 150px,#bc0bff 160px,#cc07ff 170px,#dc02ff 180px,#ed00ff 190px,#fd00ff 200px,#ff00f1 210px,#ff00e3 220px,#ff00d6 230px,#ff00cb 240px,#ff00c0 250px,#ff00b7 260px,#ff00ae 270px,#ff00a6 280px,#ff009f 290px,#ff0098 300px,#ff0092 310px,#ff008c 320px,#ff0086 330px,#ff0081 340px,#ff007d 350px)"></div><div style="position:absolute;left:0;top:201px;width:350px;height:3px;background:linear-gradient(90deg,#0047ff 0px,#0044ff 10px,#0040ff 20px,#003cff 30px,#0839ff 40px,#1635ff 50px,#2431ff 60px,#322dff 70px,#412aff 80px,#4f26ff 90px,#5e22ff 100px,#6c1eff 110px,#7b1aff 120px,#8a16ff 130px,#9a12ff 140px,#a90eff 150px,#b909ff 160px,#c805ff 170px,#d801ff 180px,#e800ff 190px,#f800ff 200px,#ff00f6 210px,#ff00e7 220px,#ff00da 230px,#ff00cf 240px,#ff00c4 250px,#ff00ba 260px,#ff00b2 270px,#ff00aa 280px,#ff00a2 290px,#ff009b 300px,#ff0095 310px,#ff008f 320px,#ff0089 330px,#ff0084 340px,#ff007f 350px)"></div><div style="position:absolute;left:0;top:204px;width:350px;height:3px;background:linear-gradient(90deg,#0045ff 0px,#0042ff 10px,#003eff 20px,#003aff 30px,#0737ff 40px,#1533ff 50px,#232fff 60px,#312cff 70px,#3f28ff 80px,#4d24ff 90px,#5c20ff 100px,#6a1cff 110px,#7918ff 120px,#8814ff 130px,#9710ff 140px,#a60cff 150px,#b508ff 160px,#c404ff 170px,#d400ff 180px,#e400ff 190px,#f300ff 200px,#ff00fb 210px,#ff00ec 220px,#ff00df 230px,#ff00d3 240px,#ff00c8 250px,#ff00be 260px,#ff00b5 270px,#ff00ad 280px,#ff00a5 290px,#ff009e 300px,#ff0098 310px,#ff0091 320px,#ff008c 330px,#ff0086 340px,#ff0081 350px)"></div><div style="position:absolute;left:0;top:207px;width:350px;height:3px;background:linear-gradient(90deg,#0043ff 0px,#0040ff 10px,#003cff 20px,#0038ff 30px,#0735ff 40px,#1431ff 50px,#222dff 60px,#2f2aff 70px,#3d26ff 80px,#4b22ff 90px,#5a1eff 100px,#681bff 110px,#7617ff 120px,#8513ff 130px,#940fff 140px,#a20bff 150px,#b107ff 160px,#c103ff 170px,#d000ff 180px,#df00ff 190px,#ef00ff 200px,#ff00ff 210px,#ff00f0 220px,#ff00e3 230px,#ff00d7 240px,#ff00cc 250px,#ff00c2 260px,#ff00b8 270px,#ff00b0 280px,#ff00a8 290px,#ff00a1 300px,#ff009a 310px,#ff0094 320px,#ff008e 330px,#ff0089 340px,#ff0084 350px)"></div><div style="position:absolute;left:0;top:210px;width:350px;height:3px;background:linear-gradient(90deg,#0041ff 0px,#003eff 10px,#003aff 20px,#0037ff 30px,#0633ff 40px,#132fff 50px,#212cff 60px,#2e28ff 70px,#3c24ff 80px,#4a21ff 90px,#581dff 100px,#6619ff 110px,#7415ff 120px,#8211ff 130px,#910dff 140px,#9f09ff 150px,#ae05ff 160px,#bd01ff 170px,#cc00ff 180px,#db00ff 190px,#ea00ff 200px,#fa00ff 210px,#ff00f5 220px,#ff00e7 230px,#ff00db 240px,#ff00cf 250px,#ff00c5 260px,#ff00bc 270px,#ff00b3 280px,#ff00ab 290px,#ff00a4 300px,#ff009d 310px,#ff0097 320px,#ff0091 330px,#ff008c 340px,#ff0086 350px)"></div><div style="position:absolute;left:0;top:213px;width:350px;height:3px;background:linear-gradient(90deg,#003fff 0px,#003cff 10px,#0038ff 20px,#0035ff 30px,#0531ff 40px,#122eff 50px,#1f2aff 60px,#2d26ff 70px,#3a23ff 80px,#481fff 90px,#561bff 100px,#6317ff 110px,#7114ff 120px,#8010ff 130px,#8e0cff 140px,#9c08ff 150px,#ab04ff 160px,#b900ff 170px,#c800ff 180px,#d700ff 190px,#e600ff 200px,#f500ff 210px,#ff00f9 220px,#ff00eb 230px,#ff00df 240px,#ff00d3 250px,#ff00c9 260px,#ff00bf 270px,#ff00b7 280px,#ff00ae 290px,#ff00a7 300px,#ff00a0 310px,#ff009a 320px,#ff0094 330px,#ff008e 340px,#ff0089 350px)"></div><div style="position:absolute;left:0;top:216px;width:350px;height:3px;background:linear-gradient(90deg,#003dff 0px,#003aff 10px,#0036ff 20px,#0033ff 30px,#042fff 40px,#112cff 50px,#1e28ff 60px,#2c25ff 70px,#3921ff 80px,#461dff 90px,#541aff 100px,#6116ff 110px,#6f12ff 120px,#7d0eff 130px,#8b0bff 140px,#9907ff 150px,#a803ff 160px,#b600ff 170px,#c400ff 180px,#d300ff 190px,#e200ff 200px,#f100ff 210px,#ff00fe 220px,#ff00f0 230px,#ff00e3 240px,#ff00d7 250px,#ff00cc 260px,#ff00c3 270px,#ff00ba 280px,#ff00b2 290px,#ff00aa 300px,#ff00a3 310px,#ff009c 320px,#ff0096 330px,#ff0091 340px,#ff008b 350px)"></div><div style="position:absolute;left:0;top:219px;width:350px;height:3px;background:linear-gradient(90deg,#003bff 0px,#0038ff 10px,#0034ff 20px,#0031ff 30px,#042eff 40px,#102aff 50px,#1d27ff 60px,#2a23ff 70px,#371fff 80px,#451cff 90px,#5218ff 100px,#5f15ff 110px,#6d11ff 120px,#7b0dff 130px,#8809ff 140px,#9606ff 150px,#a402ff 160px,#b300ff 170px,#c100ff 180px,#cf00ff 190px,#de00ff 200px,#ed00ff 210px,#fc00ff 220px,#ff00f4 230px,#ff00e7 240px,#ff00db 250px,#ff00d0 260px,#ff00c6 270px,#ff00bd 280px,#ff00b5 290px,#ff00ad 300px,#ff00a6 310px,#ff009f 320px,#ff0099 330px,#ff0093 340px,#ff008e 350px)"></div><div style="position:absolute;left:0;top:222px;width:350px;height:3px;background:linear-gradient(90deg,#0039ff 0px,#0036ff 10px,#0033ff 20px,#002fff 30px,#032cff 40px,#1028ff 50px,#1c25ff 60px,#2921ff 70px,#361eff 80px,#431aff 90px,#5017ff 100px,#5d13ff 110px,#6b10ff 120px,#780cff 130px,#8608ff 140px,#9404ff 150px,#a101ff 160px,#af00ff 170px,#bd00ff 180px,#cc00ff 190px,#da00ff 200px,#e900ff 210px,#f700ff 220px,#ff00f8 230px,#ff00eb 240px,#ff00df 250px,#ff00d4 260px,#ff00ca 270px,#ff00c0 280px,#ff00b8 290px,#ff00b0 300px,#ff00a9 310px,#ff00a2 320px,#ff009c 330px,#ff0096 340px,#ff0090 350px)"></div><div style="position:absolute;left:0;top:225px;width:350px;height:3px;background:linear-gradient(90deg,#0038ff 0px,#0034ff 10px,#0031ff 20px,#002eff 30px,#022aff 40px,#0f27ff 50px,#1b23ff 60px,#2820ff 70px,#351cff 80px,#4119ff 90px,#4e15ff 100px,#5b12ff 110px,#690eff 120px,#760bff 130px,#8307ff 140px,#9103ff 150px,#9e00ff 160px,#ac00ff 170px,#ba00ff 180px,#c800ff 190px,#d600ff 200px,#e400ff 210px,#f300ff 220px,#ff00fd 230px,#ff00ef 240px,#ff00e3 250px,#ff00d7 260px,#ff00cd 270px,#ff00c4 280px,#ff00bb 290px,#ff00b3 300px,#ff00ac 310px,#ff00a5 320px,#ff009e 330px,#ff0098 340px,#ff0093 350px)"></div><div style="position:absolute;left:0;top:228px;width:350px;height:3px;background:linear-gradient(90deg,#0036ff 0px,#0033ff 10px,#002fff 20px,#002cff 30px,#0229ff 40px,#0e25ff 50px,#1a22ff 60px,#271eff 70px,#331bff 80px,#4018ff 90px,#4d14ff 100px,#5a11ff 110px,#670dff 120px,#7409ff 130px,#8106ff 140px,#8e02ff 150px,#9c00ff 160px,#a900ff 170px,#b700ff 180px,#c500ff 190px,#d300ff 200px,#e100ff 210px,#ef00ff 220px,#fd00ff 230px,#ff00f3 240px,#ff00e7 250px,#ff00db 260px,#ff00d1 270px,#ff00c7 280px,#ff00be 290px,#ff00b6 300px,#ff00af 310px,#ff00a8 320px,#ff00a1 330px,#ff009b 340px,#ff0095 350px)"></div><div style="position:absolute;left:0;top:231px;width:350px;height:3px;background:linear-gradient(90deg,#0034ff 0px,#0031ff 10px,#002eff 20px,#002aff 30px,#0127ff 40px,#0d24ff 50px,#1920ff 60px,#261dff 70px,#321aff 80px,#3e16ff 90px,#4b13ff 100px,#580fff 110px,#650cff 120px,#7108ff 130px,#7e05ff 140px,#8c01ff 150px,#9900ff 160px,#a600ff 170px,#b400ff 180px,#c100ff 190px,#cf00ff 200px,#dd00ff 210px,#eb00ff 220px,#f900ff 230px,#ff00f7 240px,#ff00ea 250px,#ff00df 260px,#ff00d4 270px,#ff00cb 280px,#ff00c2 290px,#ff00b9 300px,#ff00b2 310px,#ff00ab 320px,#ff00a4 330px,#ff009e 340px,#ff0098 350px)"></div><div style="position:absolute;left:0;top:234px;width:350px;height:3px;background:linear-gradient(90deg,#0032ff 0px,#002fff 10px,#002cff 20px,#0029ff 30px,#0126ff 40px,#0c22ff 50px,#181fff 60px,#251cff 70px,#3118ff 80px,#3d15ff 90px,#4911ff 100px,#560eff 110px,#630bff 120px,#6f07ff 130px,#7c04ff 140px,#8900ff 150px,#9600ff 160px,#a300ff 170px,#b100ff 180px,#be00ff 190px,#cb00ff 200px,#d900ff 210px,#e700ff 220px,#f500ff 230px,#ff00fb 240px,#ff00ee 250px,#ff00e3 260px,#ff00d8 270px,#ff00ce 280px,#ff00c5 290px,#ff00bc 300px,#ff00b5 310px,#ff00ad 320px,#ff00a7 330px,#ff00a0 340px,#ff009a 350px)"></div><div style="position:absolute;left:0;top:237px;width:350px;height:3px;background:linear-gradient(90deg,#0031ff 0px,#002eff 10px,#002bff 20px,#0027ff 30px,#0024ff 40px,#0c21ff 50px,#181eff 60px,#241aff 70px,#3017ff 80px,#3c14ff 90px,#4810ff 100px,#540dff 110px,#6109ff 120px,#6d06ff 130px,#7a02ff 140px,#8700ff 150px,#9400ff 160px,#a000ff 170px,#ae00ff 180px,#bb00ff 190px,#c800ff 200px,#d500ff 210px,#e300ff 220px,#f100ff 230px,#fe00ff 240px,#ff00f2 250px,#ff00e6 260px,#ff00db 270px,#ff00d1 280px,#ff00c8 290px,#ff00bf 300px,#ff00b8 310px,#ff00b0 320px,#ff00a9 330px,#ff00a3 340px,#ff009d 350px)"></div><div style="position:absolute;left:0;top:240px;width:350px;height:3px;background:linear-gradient(90deg,#002fff 0px,#002cff 10px,#0029ff 20px,#0026ff 30px,#0023ff 40px,#0b1fff 50px,#171cff 60px,#2219ff 70px,#2e16ff 80px,#3a12ff 90px,#460fff 100px,#530cff 110px,#5f08ff 120px,#6b05ff 130px,#7801ff 140px,#8400ff 150px,#9100ff 160px,#9e00ff 170px,#ab00ff 180px,#b800ff 190px,#c500ff 200px,#d200ff 210px,#df00ff 220px,#ed00ff 230px,#fa00ff 240px,#ff00f6 250px,#ff00ea 260px,#ff00df 270px,#ff00d5 280px,#ff00cb 290px,#ff00c3 300px,#ff00bb 310px,#ff00b3 320px,#ff00ac 330px,#ff00a6 340px,#ff00a0 350px)"></div><div style="position:absolute;left:0;top:243px;width:350px;height:3px;background:linear-gradient(90deg,#002eff 0px,#002bff 10px,#0028ff 20px,#0024ff 30px,#0021ff 40px,#0a1eff 50px,#161bff 60px,#2118ff 70px,#2d14ff 80px,#3911ff 90px,#450eff 100px,#510aff 110px,#5d07ff 120px,#6904ff 130px,#7600ff 140px,#8200ff 150px,#8e00ff 160px,#9b00ff 170px,#a800ff 180px,#b500ff 190px,#c200ff 200px,#cf00ff 210px,#dc00ff 220px,#e900ff 230px,#f600ff 240px,#ff00fa 250px,#ff00ee 260px,#ff00e3 270px,#ff00d8 280px,#ff00cf 290px,#ff00c6 300px,#ff00be 310px,#ff00b6 320px,#ff00af 330px,#ff00a8 340px,#ff00a2 350px)"></div><div style="position:absolute;left:0;top:246px;width:350px;height:3px;background:linear-gradient(90deg,#002cff 0px,#0029ff 10px,#0026ff 20px,#0023ff 30px,#0020ff 40px,#0a1dff 50px,#151aff 60px,#2116ff 70px,#2c13ff 80px,#3810ff 90px,#440dff 100px,#4f09ff 110px,#5b06ff 120px,#6703ff 130px,#7300ff 140px,#8000ff 150px,#8c00ff 160px,#9800ff 170px,#a500ff 180px,#b200ff 190px,#be00ff 200px,#cb00ff 210px,#d800ff 220px,#e500ff 230px,#f200ff 240px,#ff00fe 250px,#ff00f2 260px,#ff00e6 270px,#ff00dc 280px,#ff00d2 290px,#ff00c9 300px,#ff00c1 310px,#ff00b9 320px,#ff00b2 330px,#ff00ab 340px,#ff00a5 350px)"></div><div style="position:absolute;left:0;top:249px;width:350px;height:3px;background:linear-gradient(90deg,#002bff 0px,#0028ff 10px,#0025ff 20px,#0022ff 30px,#001fff 40px,#091bff 50px,#1418ff 60px,#2015ff 70px,#2b12ff 80px,#370fff 90px,#420cff 100px,#4e08ff 110px,#5a05ff 120px,#6502ff 130px,#7100ff 140px,#7e00ff 150px,#8a00ff 160px,#9600ff 170px,#a200ff 180px,#af00ff 190px,#bb00ff 200px,#c800ff 210px,#d500ff 220px,#e200ff 230px,#ef00ff 240px,#fc00ff 250px,#ff00f5 260px,#ff00ea 270px,#ff00df 280px,#ff00d5 290px,#ff00cc 300px,#ff00c4 310px,#ff00bc 320px,#ff00b4 330px,#ff00ae 340px,#ff00a7 350px)"></div><div style="position:absolute;left:0;top:252px;width:350px;height:3px;background:linear-gradient(90deg,#0029ff 0px,#0026ff 10px,#0023ff 20px,#0020ff 30px,#001dff 40px,#081aff 50px,#1317ff 60px,#1f14ff 70px,#2a11ff 80px,#350eff 90px,#410aff 100px,#4c07ff 110px,#5804ff 120px,#6401ff 130px,#6f00ff 140px,#7b00ff 150px,#8700ff 160px,#9300ff 170px,#a000ff 180px,#ac00ff 190px,#b800ff 200px,#c500ff 210px,#d100ff 220px,#de00ff 230px,#eb00ff 240px,#f800ff 250px,#ff00f9 260px,#ff00ed 270px,#ff00e2 280px,#ff00d8 290px,#ff00cf 300px,#ff00c7 310px,#ff00bf 320px,#ff00b7 330px,#ff00b0 340px,#ff00aa 350px)"></div><div style="position:absolute;left:0;top:255px;width:350px;height:3px;background:linear-gradient(90deg,#0028ff 0px,#0025ff 10px,#0022ff 20px,#001fff 30px,#001cff 40px,#0819ff 50px,#1316ff 60px,#1e13ff 70px,#2910ff 80px,#340dff 90px,#3f09ff 100px,#4b06ff 110px,#5603ff 120px,#6200ff 130px,#6e00ff 140px,#7900ff 150px,#8500ff 160px,#9100ff 170px,#9d00ff 180px,#a900ff 190px,#b500ff 200px,#c200ff 210px,#ce00ff 220px,#db00ff 230px,#e700ff 240px,#f400ff 250px,#ff00fd 260px,#ff00f1 270px,#ff00e6 280px,#ff00dc 290px,#ff00d2 300px,#ff00ca 310px,#ff00c2 320px,#ff00ba 330px,#ff00b3 340px,#ff00ac 350px)"></div><div style="position:absolute;left:0;top:258px;width:350px;height:3px;background:linear-gradient(90deg,#0027ff 0px,#0024ff 10px,#0021ff 20px,#001eff 30px,#001bff 40px,#0718ff 50px,#1215ff 60px,#1d12ff 70px,#280fff 80px,#330bff 90px,#3e08ff 100px,#4905ff 110px,#5502ff 120px,#6000ff 130px,#6c00ff 140px,#7700ff 150px,#8300ff 160px,#8f00ff 170px,#9b00ff 180px,#a700ff 190px,#b300ff 200px,#bf00ff 210px,#cb00ff 220px,#d700ff 230px,#e400ff 240px,#f000ff 250px,#fd00ff 260px,#ff00f5 270px,#ff00e9 280px,#ff00df 290px,#ff00d5 300px,#ff00cd 310px,#ff00c4 320px,#ff00bd 330px,#ff00b6 340px,#ff00af 350px)"></div><div style="position:absolute;left:0;top:261px;width:350px;height:3px;background:linear-gradient(90deg,#0025ff 0px,#0022ff 10px,#001fff 20px,#001cff 30px,#001aff 40px,#0617ff 50px,#1114ff 60px,#1c11ff 70px,#270dff 80px,#320aff 90px,#3d07ff 100px,#4804ff 110px,#5301ff 120px,#5e00ff 130px,#6a00ff 140px,#7500ff 150px,#8100ff 160px,#8c00ff 170px,#9800ff 180px,#a400ff 190px,#b000ff 200px,#bc00ff 210px,#c800ff 220px,#d400ff 230px,#e000ff 240px,#ed00ff 250px,#f900ff 260px,#ff00f8 270px,#ff00ed 280px,#ff00e2 290px,#ff00d9 300px,#ff00d0 310px,#ff00c7 320px,#ff00c0 330px,#ff00b8 340px,#ff00b2 350px)"></div><div style="position:absolute;left:0;top:264px;width:350px;height:3px;background:linear-gradient(90deg,#0024ff 0px,#0021ff 10px,#001eff 20px,#001bff 30px,#0018ff 40px,#0615ff 50px,#1012ff 60px,#1b0fff 70px,#260cff 80px,#3109ff 90px,#3c06ff 100px,#4703ff 110px,#5200ff 120px,#5d00ff 130px,#6800ff 140px,#7300ff 150px,#7f00ff 160px,#8a00ff 170px,#9600ff 180px,#a100ff 190px,#ad00ff 200px,#b900ff 210px,#c500ff 220px,#d100ff 230px,#dd00ff 240px,#e900ff 250px,#f600ff 260px,#ff00fc 270px,#ff00f0 280px,#ff00e6 290px,#ff00dc 300px,#ff00d3 310px,#ff00ca 320px,#ff00c2 330px,#ff00bb 340px,#ff00b4 350px)"></div><div style="position:absolute;left:0;top:267px;width:350px;height:3px;background:linear-gradient(90deg,#0023ff 0px,#0020ff 10px,#001dff 20px,#001aff 30px,#0017ff 40px,#0514ff 50px,#1011ff 60px,#1a0eff 70px,#250bff 80px,#3008ff 90px,#3a05ff 100px,#4502ff 110px,#5000ff 120px,#5b00ff 130px,#6600ff 140px,#7100ff 150px,#7d00ff 160px,#8800ff 170px,#9300ff 180px,#9f00ff 190px,#ab00ff 200px,#b600ff 210px,#c200ff 220px,#ce00ff 230px,#da00ff 240px,#e600ff 250px,#f200ff 260px,#fe00ff 270px,#ff00f4 280px,#ff00e9 290px,#ff00df 300px,#ff00d6 310px,#ff00cd 320px,#ff00c5 330px,#ff00be 340px,#ff00b7 350px)"></div><div style="position:absolute;left:0;top:270px;width:350px;height:3px;background:linear-gradient(90deg,#0021ff 0px,#001fff 10px,#001cff 20px,#0019ff 30px,#0016ff 40px,#0513ff 50px,#0f10ff 60px,#1a0dff 70px,#240aff 80px,#2f07ff 90px,#3904ff 100px,#4401ff 110px,#4f00ff 120px,#5a00ff 130px,#6500ff 140px,#7000ff 150px,#7b00ff 160px,#8600ff 170px,#9100ff 180px,#9d00ff 190px,#a800ff 200px,#b400ff 210px,#bf00ff 220px,#cb00ff 230px,#d700ff 240px,#e300ff 250px,#ef00ff 260px,#fb00ff 270px,#ff00f7 280px,#ff00ec 290px,#ff00e2 300px,#ff00d9 310px,#ff00d0 320px,#ff00c8 330px,#ff00c1 340px,#ff00ba 350px)"></div><div style="position:absolute;left:0;top:273px;width:350px;height:3px;background:linear-gradient(90deg,#0020ff 0px,#001dff 10px,#001bff 20px,#0018ff 30px,#0015ff 40px,#0412ff 50px,#0e0fff 60px,#190cff 70px,#2309ff 80px,#2e06ff 90px,#3803ff 100px,#4300ff 110px,#4d00ff 120px,#5800ff 130px,#6300ff 140px,#6e00ff 150px,#7900ff 160px,#8400ff 170px,#8f00ff 180px,#9a00ff 190px,#a600ff 200px,#b100ff 210px,#bc00ff 220px,#c800ff 230px,#d400ff 240px,#df00ff 250px,#eb00ff 260px,#f700ff 270px,#ff00fb 280px,#ff00f0 290px,#ff00e6 300px,#ff00dc 310px,#ff00d3 320px,#ff00cb 330px,#ff00c3 340px,#ff00bc 350px)"></div><div style="position:absolute;left:0;top:276px;width:350px;height:3px;background:linear-gradient(90deg,#001fff 0px,#001cff 10px,#0019ff 20px,#0017ff 30px,#0014ff 40px,#0411ff 50px,#0e0eff 60px,#180bff 70px,#2208ff 80px,#2d05ff 90px,#3703ff 100px,#4100ff 110px,#4c00ff 120px,#5700ff 130px,#6100ff 140px,#6c00ff 150px,#7700ff 160px,#8200ff 170px,#8d00ff 180px,#9800ff 190px,#a300ff 200px,#ae00ff 210px,#ba00ff 220px,#c500ff 230px,#d100ff 240px,#dc00ff 250px,#e800ff 260px,#f400ff 270px,#ff00ff 280px,#ff00f3 290px,#ff00e9 300px,#ff00df 310px,#ff00d6 320px,#ff00ce 330px,#ff00c6 340px,#ff00bf 350px)"></div><div style="position:absolute;left:0;top:279px;width:350px;height:3px;background:linear-gradient(90deg,#001eff 0px,#001bff 10px,#0018ff 20px,#0016ff 30px,#0013ff 40px,#0310ff 50px,#0d0dff 60px,#170aff 70px,#2107ff 80px,#2c05ff 90px,#3602ff 100px,#4000ff 110px,#4b00ff 120px,#5500ff 130px,#6000ff 140px,#6a00ff 150px,#7500ff 160px,#8000ff 170px,#8b00ff 180px,#9600ff 190px,#a100ff 200px,#ac00ff 210px,#b700ff 220px,#c200ff 230px,#ce00ff 240px,#d900ff 250px,#e500ff 260px,#f000ff 270px,#fc00ff 280px,#ff00f7 290px,#ff00ec 300px,#ff00e2 310px,#ff00d9 320px,#ff00d1 330px,#ff00c9 340px,#ff00c1 350px)"></div><div style="position:absolute;left:0;top:282px;width:350px;height:3px;background:linear-gradient(90deg,#001dff 0px,#001aff 10px,#0017ff 20px,#0015ff 30px,#0012ff 40px,#030fff 50px,#0d0cff 60px,#1609ff 70px,#2107ff 80px,#2b04ff 90px,#3501ff 100px,#3f00ff 110px,#4900ff 120px,#5400ff 130px,#5e00ff 140px,#6900ff 150px,#7300ff 160px,#7e00ff 170px,#8900ff 180px,#9300ff 190px,#9e00ff 200px,#a900ff 210px,#b400ff 220px,#c000ff 230px,#cb00ff 240px,#d600ff 250px,#e100ff 260px,#ed00ff 270px,#f800ff 280px,#ff00fa 290px,#ff00ef 300px,#ff00e5 310px,#ff00dc 320px,#ff00d4 330px,#ff00cc 340px,#ff00c4 350px)"></div><div style="position:absolute;left:0;top:285px;width:350px;height:3px;background:linear-gradient(90deg,#001cff 0px,#0019ff 10px,#0016ff 20px,#0013ff 30px,#0011ff 40px,#020eff 50px,#0c0bff 60px,#1608ff 70px,#2006ff 80px,#2a03ff 90px,#3400ff 100px,#3e00ff 110px,#4800ff 120px,#5200ff 130px,#5d00ff 140px,#6700ff 150px,#7100ff 160px,#7c00ff 170px,#8700ff 180px,#9100ff 190px,#9c00ff 200px,#a700ff 210px,#b200ff 220px,#bd00ff 230px,#c800ff 240px,#d300ff 250px,#de00ff 260px,#ea00ff 270px,#f500ff 280px,#ff00fe 290px,#ff00f3 300px,#ff00e9 310px,#ff00df 320px,#ff00d6 330px,#ff00ce 340px,#ff00c7 350px)"></div><div style="position:absolute;left:0;top:288px;width:350px;height:3px;background:linear-gradient(90deg,#001aff 0px,#0018ff 10px,#0015ff 20px,#0012ff 30px,#0010ff 40px,#020dff 50px,#0b0aff 60px,#1508ff 70px,#1f05ff 80px,#2902ff 90px,#3300ff 100px,#3d00ff 110px,#4700ff 120px,#5100ff 130px,#5b00ff 140px,#6500ff 150px,#7000ff 160px,#7a00ff 170px,#8500ff 180px,#8f00ff 190px,#9a00ff 200px,#a500ff 210px,#af00ff 220px,#ba00ff 230px,#c500ff 240px,#d000ff 250px,#db00ff 260px,#e600ff 270px,#f200ff 280px,#fd00ff 290px,#ff00f6 300px,#ff00ec 310px,#ff00e2 320px,#ff00d9 330px,#ff00d1 340px,#ff00c9 350px)"></div><div style="position:absolute;left:0;top:291px;width:350px;height:3px;background:linear-gradient(90deg,#0019ff 0px,#0017ff 10px,#0014ff 20px,#0011ff 30px,#000fff 40px,#010cff 50px,#0b09ff 60px,#1407ff 70px,#1e04ff 80px,#2801ff 90px,#3200ff 100px,#3c00ff 110px,#4600ff 120px,#5000ff 130px,#5a00ff 140px,#6400ff 150px,#6e00ff 160px,#7800ff 170px,#8300ff 180px,#8d00ff 190px,#9800ff 200px,#a200ff 210px,#ad00ff 220px,#b800ff 230px,#c200ff 240px,#cd00ff 250px,#d800ff 260px,#e300ff 270px,#ee00ff 280px,#fa00ff 290px,#ff00f9 300px,#ff00ef 310px,#ff00e5 320px,#ff00dc 330px,#ff00d4 340px,#ff00cc 350px)"></div><div style="position:absolute;left:0;top:294px;width:350px;height:3px;background:linear-gradient(90deg,#0018ff 0px,#0016ff 10px,#0013ff 20px,#0010ff 30px,#000eff 40px,#010bff 50px,#0a08ff 60px,#1406ff 70px,#1d03ff 80px,#2700ff 90px,#3100ff 100px,#3a00ff 110px,#4400ff 120px,#4e00ff 130px,#5800ff 140px,#6200ff 150px,#6c00ff 160px,#7700ff 170px,#8100ff 180px,#8b00ff 190px,#9600ff 200px,#a000ff 210px,#ab00ff 220px,#b500ff 230px,#c000ff 240px,#cb00ff 250px,#d500ff 260px,#e000ff 270px,#eb00ff 280px,#f600ff 290px,#ff00fd 300px,#ff00f2 310px,#ff00e8 320px,#ff00df 330px,#ff00d7 340px,#ff00cf 350px)"></div><div style="position:absolute;left:0;top:297px;width:350px;height:3px;background:linear-gradient(90deg,#0017ff 0px,#0015ff 10px,#0012ff 20px,#0010ff 30px,#000dff 40px,#000aff 50px,#0a08ff 60px,#1305ff 70px,#1d02ff 80px,#2600ff 90px,#3000ff 100px,#3900ff 110px,#4300ff 120px,#4d00ff 130px,#5700ff 140px,#6100ff 150px,#6b00ff 160px,#7500ff 170px,#7f00ff 180px,#8900ff 190px,#9300ff 200px,#9e00ff 210px,#a800ff 220px,#b300ff 230px,#bd00ff 240px,#c800ff 250px,#d300ff 260px,#dd00ff 270px,#e800ff 280px,#f300ff 290px,#fe00ff 300px,#ff00f5 310px,#ff00eb 320px,#ff00e2 330px,#ff00da 340px,#ff00d2 350px)"></div><div style="position:absolute;left:0;top:300px;width:350px;height:3px;background:linear-gradient(90deg,#0016ff 0px,#0014ff 10px,#0011ff 20px,#000fff 30px,#000cff 40px,#0009ff 50px,#0907ff 60px,#1204ff 70px,#1c01ff 80px,#2500ff 90px,#2f00ff 100px,#3800ff 110px,#4200ff 120px,#4c00ff 130px,#5500ff 140px,#5f00ff 150px,#6900ff 160px,#7300ff 170px,#7d00ff 180px,#8700ff 190px,#9100ff 200px,#9c00ff 210px,#a600ff 220px,#b000ff 230px,#bb00ff 240px,#c500ff 250px,#d000ff 260px,#da00ff 270px,#e500ff 280px,#f000ff 290px,#fb00ff 300px,#ff00f8 310px,#ff00ee 320px,#ff00e5 330px,#ff00dc 340px,#ff00d4 350px)"></div><div style="position:absolute;left:0;top:303px;width:350px;height:3px;background:linear-gradient(90deg,#0015ff 0px,#0013ff 10px,#0010ff 20px,#000eff 30px,#000bff 40px,#0008ff 50px,#0906ff 60px,#1203ff 70px,#1b01ff 80px,#2400ff 90px,#2e00ff 100px,#3700ff 110px,#4100ff 120px,#4a00ff 130px,#5400ff 140px,#5e00ff 150px,#6800ff 160px,#7100ff 170px,#7b00ff 180px,#8500ff 190px,#8f00ff 200px,#9a00ff 210px,#a400ff 220px,#ae00ff 230px,#b800ff 240px,#c300ff 250px,#cd00ff 260px,#d800ff 270px,#e200ff 280px,#ed00ff 290px,#f800ff 300px,#ff00fc 310px,#ff00f1 320px,#ff00e8 330px,#ff00df 340px,#ff00d7 350px)"></div><div style="position:absolute;left:0;top:306px;width:350px;height:3px;background:linear-gradient(90deg,#0014ff 0px,#0012ff 10px,#000fff 20px,#000dff 30px,#000aff 40px,#0008ff 50px,#0805ff 60px,#1102ff 70px,#1a00ff 80px,#2400ff 90px,#2d00ff 100px,#3600ff 110px,#4000ff 120px,#4900ff 130px,#5300ff 140px,#5c00ff 150px,#6600ff 160px,#7000ff 170px,#7a00ff 180px,#8400ff 190px,#8d00ff 200px,#9700ff 210px,#a200ff 220px,#ac00ff 230px,#b600ff 240px,#c000ff 250px,#ca00ff 260px,#d500ff 270px,#df00ff 280px,#ea00ff 290px,#f400ff 300px,#ff00ff 310px,#ff00f5 320px,#ff00eb 330px,#ff00e2 340px,#ff00da 350px)"></div><div style="position:absolute;left:0;top:309px;width:350px;height:3px;background:linear-gradient(90deg,#0013ff 0px,#0011ff 10px,#000eff 20px,#000cff 30px,#0009ff 40px,#0007ff 50px,#0704ff 60px,#1102ff 70px,#1a00ff 80px,#2300ff 90px,#2c00ff 100px,#3500ff 110px,#3f00ff 120px,#4800ff 130px,#5200ff 140px,#5b00ff 150px,#6500ff 160px,#6e00ff 170px,#7800ff 180px,#8200ff 190px,#8c00ff 200px,#9500ff 210px,#9f00ff 220px,#a900ff 230px,#b300ff 240px,#be00ff 250px,#c800ff 260px,#d200ff 270px,#dc00ff 280px,#e700ff 290px,#f100ff 300px,#fc00ff 310px,#ff00f8 320px,#ff00ee 330px,#ff00e5 340px,#ff00dd 350px)"></div><div style="position:absolute;left:0;top:312px;width:350px;height:3px;background:linear-gradient(90deg,#0013ff 0px,#0010ff 10px,#000eff 20px,#000bff 30px,#0009ff 40px,#0006ff 50px,#0703ff 60px,#1001ff 70px,#1900ff 80px,#2200ff 90px,#2b00ff 100px,#3400ff 110px,#3e00ff 120px,#4700ff 130px,#5000ff 140px,#5a00ff 150px,#6300ff 160px,#6d00ff 170px,#7600ff 180px,#8000ff 190px,#8a00ff 200px,#9300ff 210px,#9d00ff 220px,#a700ff 230px,#b100ff 240px,#bb00ff 250px,#c500ff 260px,#cf00ff 270px,#da00ff 280px,#e400ff 290px,#ee00ff 300px,#f900ff 310px,#ff00fb 320px,#ff00f1 330px,#ff00e8 340px,#ff00df 350px)"></div><div style="position:absolute;left:0;top:315px;width:350px;height:3px;background:linear-gradient(90deg,#0012ff 0px,#000fff 10px,#000dff 20px,#000aff 30px,#0008ff 40px,#0005ff 50px,#0603ff 60px,#0f00ff 70px,#1800ff 80px,#2100ff 90px,#2a00ff 100px,#3300ff 110px,#3d00ff 120px,#4600ff 130px,#4f00ff 140px,#5800ff 150px,#6200ff 160px,#6b00ff 170px,#7500ff 180px,#7e00ff 190px,#8800ff 200px,#9100ff 210px,#9b00ff 220px,#a500ff 230px,#af00ff 240px,#b900ff 250px,#c300ff 260px,#cd00ff 270px,#d700ff 280px,#e100ff 290px,#eb00ff 300px,#f600ff 310px,#ff00fe 320px,#ff00f4 330px,#ff00eb 340px,#ff00e2 350px)"></div><div style="position:absolute;left:0;top:318px;width:350px;height:3px;background:linear-gradient(90deg,#0011ff 0px,#000eff 10px,#000cff 20px,#0009ff 30px,#0007ff 40px,#0004ff 50px,#0602ff 60px,#0f00ff 70px,#1800ff 80px,#2100ff 90px,#2900ff 100px,#3200ff 110px,#3c00ff 120px,#4500ff 130px,#4e00ff 140px,#5700ff 150px,#6000ff 160px,#6a00ff 170px,#7300ff 180px,#7c00ff 190px,#8600ff 200px,#9000ff 210px,#9900ff 220px,#a300ff 230px,#ad00ff 240px,#b600ff 250px,#c000ff 260px,#ca00ff 270px,#d400ff 280px,#de00ff 290px,#e900ff 300px,#f300ff 310px,#fd00ff 320px,#ff00f7 330px,#ff00ee 340px,#ff00e5 350px)"></div><div style="position:absolute;left:0;top:321px;width:350px;height:3px;background:linear-gradient(90deg,#0010ff 0px,#000dff 10px,#000bff 20px,#0009ff 30px,#0006ff 40px,#0004ff 50px,#0501ff 60px,#0e00ff 70px,#1700ff 80px,#2000ff 90px,#2900ff 100px,#3200ff 110px,#3b00ff 120px,#4400ff 130px,#4d00ff 140px,#5600ff 150px,#5f00ff 160px,#6800ff 170px,#7100ff 180px,#7b00ff 190px,#8400ff 200px,#8e00ff 210px,#9700ff 220px,#a100ff 230px,#aa00ff 240px,#b400ff 250px,#be00ff 260px,#c800ff 270px,#d200ff 280px,#dc00ff 290px,#e600ff 300px,#f000ff 310px,#fa00ff 320px,#ff00fa 330px,#ff00f0 340px,#ff00e8 350px)"></div><div style="position:absolute;left:0;top:324px;width:350px;height:3px;background:linear-gradient(90deg,#000fff 0px,#000dff 10px,#000aff 20px,#0008ff 30px,#0005ff 40px,#0003ff 50px,#0500ff 60px,#0e00ff 70px,#1600ff 80px,#1f00ff 90px,#2800ff 100px,#3100ff 110px,#3a00ff 120px,#4200ff 130px,#4b00ff 140px,#5400ff 150px,#5e00ff 160px,#6700ff 170px,#7000ff 180px,#7900ff 190px,#8300ff 200px,#8c00ff 210px,#9500ff 220px,#9f00ff 230px,#a800ff 240px,#b200ff 250px,#bc00ff 260px,#c500ff 270px,#cf00ff 280px,#d900ff 290px,#e300ff 300px,#ed00ff 310px,#f700ff 320px,#ff00fd 330px,#ff00f3 340px,#ff00ea 350px)"></div><div style="position:absolute;left:0;top:327px;width:350px;height:3px;background:linear-gradient(90deg,#000eff 0px,#000cff 10px,#0009ff 20px,#0007ff 30px,#0005ff 40px,#0002ff 50px,#0500ff 60px,#0d00ff 70px,#1600ff 80px,#1e00ff 90px,#2700ff 100px,#3000ff 110px,#3900ff 120px,#4100ff 130px,#4a00ff 140px,#5300ff 150px,#5c00ff 160px,#6500ff 170px,#6e00ff 180px,#7800ff 190px,#8100ff 200px,#8a00ff 210px,#9300ff 220px,#9d00ff 230px,#a600ff 240px,#b000ff 250px,#b900ff 260px,#c300ff 270px,#cd00ff 280px,#d600ff 290px,#e000ff 300px,#ea00ff 310px,#f400ff 320px,#fe00ff 330px,#ff00f6 340px,#ff00ed 350px)"></div><div style="position:absolute;left:0;top:330px;width:350px;height:3px;background:linear-gradient(90deg,#000dff 0px,#000bff 10px,#0009ff 20px,#0006ff 30px,#0004ff 40px,#0001ff 50px,#0400ff 60px,#0d00ff 70px,#1500ff 80px,#1e00ff 90px,#2600ff 100px,#2f00ff 110px,#3800ff 120px,#4000ff 130px,#4900ff 140px,#5200ff 150px,#5b00ff 160px,#6400ff 170px,#6d00ff 180px,#7600ff 190px,#7f00ff 200px,#8800ff 210px,#9200ff 220px,#9b00ff 230px,#a400ff 240px,#ae00ff 250px,#b700ff 260px,#c100ff 270px,#ca00ff 280px,#d400ff 290px,#de00ff 300px,#e700ff 310px,#f100ff 320px,#fb00ff 330px,#ff00f9 340px,#ff00f0 350px)"></div></div></div>
<div class="a" style="left:1021.50px;top:122.00px;width:642.00px;height:2.00px;background:#a8a8a8"></div>
<div class="a" style="left:1021.50px;top:613.00px;width:642.00px;height:2.00px;background:#a8a8a8"></div>
<div class="a" style="left:1021.50px;top:122.00px;width:2.00px;height:493.00px;background:#a8a8a8"></div>
<div class="a" style="left:1661.50px;top:122.00px;width:2.00px;height:493.00px;background:#a8a8a8"></div>
<div class="t" style="left:1284.00px;top:105.17px;font-size:13.8px;line-height:13.8px;color:#d8d8d8;font-weight:400;transform:scaleX(1.0271);transform-origin:0 0;">CIE 1976 u'v'</div>
<div class="a" style="left:1017.00px;top:613.25px;width:5.00px;height:1.50px;background:#d0d0d0"></div>
<div class="t" style="left:1008.20px;top:608.30px;font-size:14px;line-height:14px;color:#d4d4d4;font-weight:400;">0</div>
<div class="a" style="left:1017.00px;top:572.38px;width:5.00px;height:1.50px;background:#d0d0d0"></div>
<div class="t" style="left:988.75px;top:567.43px;font-size:14px;line-height:14px;color:#d4d4d4;font-weight:400;">0,05</div>
<div class="a" style="left:1017.00px;top:531.50px;width:5.00px;height:1.50px;background:#d0d0d0"></div>
<div class="t" style="left:996.53px;top:526.55px;font-size:14px;line-height:14px;color:#d4d4d4;font-weight:400;">0,1</div>
<div class="a" style="left:1017.00px;top:490.62px;width:5.00px;height:1.50px;background:#d0d0d0"></div>
<div class="t" style="left:988.75px;top:485.68px;font-size:14px;line-height:14px;color:#d4d4d4;font-weight:400;">0,15</div>
<div class="a" style="left:1017.00px;top:449.75px;width:5.00px;height:1.50px;background:#d0d0d0"></div>
<div class="t" style="left:996.53px;top:444.80px;font-size:14px;line-height:14px;color:#d4d4d4;font-weight:400;">0,2</div>
<div class="a" style="left:1017.00px;top:408.88px;width:5.00px;height:1.50px;background:#d0d0d0"></div>
<div class="t" style="left:988.75px;top:403.93px;font-size:14px;line-height:14px;color:#d4d4d4;font-weight:400;">0,25</div>
<div class="a" style="left:1017.00px;top:368.00px;width:5.00px;height:1.50px;background:#d0d0d0"></div>
<div class="t" style="left:996.53px;top:363.05px;font-size:14px;line-height:14px;color:#d4d4d4;font-weight:400;">0,3</div>
<div class="a" style="left:1017.00px;top:327.12px;width:5.00px;height:1.50px;background:#d0d0d0"></div>
<div class="t" style="left:988.75px;top:322.18px;font-size:14px;line-height:14px;color:#d4d4d4;font-weight:400;">0,35</div>
<div class="a" style="left:1017.00px;top:286.25px;width:5.00px;height:1.50px;background:#d0d0d0"></div>
<div class="t" style="left:996.53px;top:281.30px;font-size:14px;line-height:14px;color:#d4d4d4;font-weight:400;">0,4</div>
<div class="a" style="left:1017.00px;top:245.38px;width:5.00px;height:1.50px;background:#d0d0d0"></div>
<div class="t" style="left:988.75px;top:240.42px;font-size:14px;line-height:14px;color:#d4d4d4;font-weight:400;">0,45</div>
<div class="a" style="left:1017.00px;top:204.50px;width:5.00px;height:1.50px;background:#d0d0d0"></div>
<div class="t" style="left:996.53px;top:199.55px;font-size:14px;line-height:14px;color:#d4d4d4;font-weight:400;">0,5</div>
<div class="a" style="left:1017.00px;top:163.62px;width:5.00px;height:1.50px;background:#d0d0d0"></div>
<div class="t" style="left:988.75px;top:158.67px;font-size:14px;line-height:14px;color:#d4d4d4;font-weight:400;">0,55</div>
<div class="a" style="left:1021.75px;top:614.00px;width:1.50px;height:6.00px;background:#d0d0d0"></div>
<div class="t" style="left:1018.60px;top:623.60px;font-size:14px;line-height:14px;color:#d8d8d8;font-weight:400;">0</div>
<div class="a" style="left:1074.95px;top:614.00px;width:1.50px;height:6.00px;background:#d0d0d0"></div>
<div class="t" style="left:1062.08px;top:623.60px;font-size:14px;line-height:14px;color:#d8d8d8;font-weight:400;">0,05</div>
<div class="a" style="left:1128.15px;top:614.00px;width:1.50px;height:6.00px;background:#d0d0d0"></div>
<div class="t" style="left:1119.17px;top:623.60px;font-size:14px;line-height:14px;color:#d8d8d8;font-weight:400;">0,1</div>
<div class="a" style="left:1181.35px;top:614.00px;width:1.50px;height:6.00px;background:#d0d0d0"></div>
<div class="t" style="left:1168.47px;top:623.60px;font-size:14px;line-height:14px;color:#d8d8d8;font-weight:400;">0,15</div>
<div class="a" style="left:1234.55px;top:614.00px;width:1.50px;height:6.00px;background:#d0d0d0"></div>
<div class="t" style="left:1225.57px;top:623.60px;font-size:14px;line-height:14px;color:#d8d8d8;font-weight:400;">0,2</div>
<div class="a" style="left:1287.75px;top:614.00px;width:1.50px;height:6.00px;background:#d0d0d0"></div>
<div class="t" style="left:1274.88px;top:623.60px;font-size:14px;line-height:14px;color:#d8d8d8;font-weight:400;">0,25</div>
<div class="a" style="left:1340.95px;top:614.00px;width:1.50px;height:6.00px;background:#d0d0d0"></div>
<div class="t" style="left:1331.97px;top:623.60px;font-size:14px;line-height:14px;color:#d8d8d8;font-weight:400;">0,3</div>
<div class="a" style="left:1394.15px;top:614.00px;width:1.50px;height:6.00px;background:#d0d0d0"></div>
<div class="t" style="left:1381.28px;top:623.60px;font-size:14px;line-height:14px;color:#d8d8d8;font-weight:400;">0,35</div>
<div class="a" style="left:1447.35px;top:614.00px;width:1.50px;height:6.00px;background:#d0d0d0"></div>
<div class="t" style="left:1438.37px;top:623.60px;font-size:14px;line-height:14px;color:#d8d8d8;font-weight:400;">0,4</div>
<div class="a" style="left:1500.55px;top:614.00px;width:1.50px;height:6.00px;background:#d0d0d0"></div>
<div class="t" style="left:1487.67px;top:623.60px;font-size:14px;line-height:14px;color:#d8d8d8;font-weight:400;">0,45</div>
<div class="a" style="left:1553.75px;top:614.00px;width:1.50px;height:6.00px;background:#d0d0d0"></div>
<div class="t" style="left:1544.77px;top:623.60px;font-size:14px;line-height:14px;color:#d8d8d8;font-weight:400;">0,5</div>
<div class="a" style="left:1606.95px;top:614.00px;width:1.50px;height:6.00px;background:#d0d0d0"></div>
<div class="t" style="left:1594.08px;top:623.60px;font-size:14px;line-height:14px;color:#d8d8d8;font-weight:400;">0,55</div>
<svg class="a" style="left:1023px;top:123px" width="639" height="491" viewBox="1023 123 639 491"><rect x="1148.2" y="145.4" width="13.6" height="13.6" fill="none" stroke="rgba(255,255,255,0.85)" stroke-width="1.7"/><rect x="1159.9" y="157.1" width="13.6" height="13.6" fill="none" stroke="rgba(255,255,255,0.85)" stroke-width="1.7"/><rect x="1172.2" y="169.2" width="13.6" height="13.6" fill="none" stroke="rgba(255,255,255,0.85)" stroke-width="1.7"/><rect x="1186.7" y="183.9" width="13.6" height="13.6" fill="none" stroke="rgba(255,255,255,0.85)" stroke-width="1.7"/><rect x="1205.2" y="201.9" width="13.6" height="13.6" fill="none" stroke="rgba(255,255,255,0.85)" stroke-width="1.7"/><rect x="1232.8" y="153.7" width="13.6" height="13.6" fill="none" stroke="rgba(255,255,255,0.85)" stroke-width="1.7"/><rect x="1232.0" y="165.2" width="13.6" height="13.6" fill="none" stroke="rgba(255,255,255,0.85)" stroke-width="1.7"/><rect x="1231.0" y="177.6" width="13.6" height="13.6" fill="none" stroke="rgba(255,255,255,0.85)" stroke-width="1.7"/><rect x="1229.7" y="190.5" width="13.6" height="13.6" fill="none" stroke="rgba(255,255,255,0.85)" stroke-width="1.7"/><rect x="1228.4" y="204.7" width="13.6" height="13.6" fill="none" stroke="rgba(255,255,255,0.85)" stroke-width="1.7"/><rect x="1163.5" y="233.6" width="13.6" height="13.6" fill="none" stroke="rgba(255,255,255,0.85)" stroke-width="1.7"/><rect x="1175.6" y="230.5" width="13.6" height="13.6" fill="none" stroke="rgba(255,255,255,0.85)" stroke-width="1.7"/><rect x="1187.4" y="228.7" width="13.6" height="13.6" fill="none" stroke="rgba(255,255,255,0.85)" stroke-width="1.7"/><rect x="1201.3" y="227.1" width="13.6" height="13.6" fill="none" stroke="rgba(255,255,255,0.85)" stroke-width="1.7"/><rect x="1212.9" y="225.3" width="13.6" height="13.6" fill="none" stroke="rgba(255,255,255,0.85)" stroke-width="1.7"/><rect x="1495.2" y="177.1" width="13.6" height="13.6" fill="none" stroke="rgba(255,255,255,0.85)" stroke-width="1.7"/><rect x="1430.9" y="188.3" width="13.6" height="13.6" fill="none" stroke="rgba(255,255,255,0.85)" stroke-width="1.7"/><rect x="1375.8" y="198.0" width="13.6" height="13.6" fill="none" stroke="rgba(255,255,255,0.85)" stroke-width="1.7"/><rect x="1327.1" y="205.4" width="13.6" height="13.6" fill="none" stroke="rgba(255,255,255,0.85)" stroke-width="1.7"/><rect x="1274.5" y="214.1" width="13.6" height="13.6" fill="none" stroke="rgba(255,255,255,0.85)" stroke-width="1.7"/><rect x="1340.7" y="335.0" width="13.6" height="13.6" fill="none" stroke="rgba(255,255,255,0.85)" stroke-width="1.7"/><rect x="1307.6" y="303.8" width="13.6" height="13.6" fill="none" stroke="rgba(255,255,255,0.85)" stroke-width="1.7"/><rect x="1281.2" y="278.0" width="13.6" height="13.6" fill="none" stroke="rgba(255,255,255,0.85)" stroke-width="1.7"/><rect x="1262.2" y="258.0" width="13.6" height="13.6" fill="none" stroke="rgba(255,255,255,0.85)" stroke-width="1.7"/><rect x="1243.2" y="239.0" width="13.6" height="13.6" fill="none" stroke="rgba(255,255,255,0.85)" stroke-width="1.7"/><rect x="1202.3" y="476.8" width="13.6" height="13.6" fill="none" stroke="rgba(255,255,255,0.85)" stroke-width="1.7"/><rect x="1210.2" y="391.0" width="13.6" height="13.6" fill="none" stroke="rgba(255,255,255,0.85)" stroke-width="1.7"/><rect x="1216.5" y="334.5" width="13.6" height="13.6" fill="none" stroke="rgba(255,255,255,0.85)" stroke-width="1.7"/><rect x="1220.4" y="289.2" width="13.6" height="13.6" fill="none" stroke="rgba(255,255,255,0.85)" stroke-width="1.7"/><rect x="1222.8" y="252.2" width="13.6" height="13.6" fill="none" stroke="rgba(255,255,255,0.85)" stroke-width="1.7"/><circle cx="1158.5" cy="153.7" r="4.5" fill="#18ac18" stroke="#111" stroke-width="1.1"/><circle cx="1167.2" cy="164.4" r="4.5" fill="#5ca85c" stroke="#111" stroke-width="1.1"/><circle cx="1178.4" cy="177.6" r="4.5" fill="#7aa87a" stroke="#111" stroke-width="1.1"/><circle cx="1192.6" cy="191.7" r="4.5" fill="#8cae8c" stroke="#111" stroke-width="1.1"/><circle cx="1211" cy="210.7" r="4.5" fill="#9eaea0" stroke="#111" stroke-width="1.1"/><circle cx="1238.3" cy="160.5" r="4.5" fill="#c4b628" stroke="#111" stroke-width="1.1"/><circle cx="1235.5" cy="172.8" r="4.5" fill="#bcb65c" stroke="#111" stroke-width="1.1"/><circle cx="1233.9" cy="185" r="4.5" fill="#bab676" stroke="#111" stroke-width="1.1"/><circle cx="1233.9" cy="198" r="4.5" fill="#b6b488" stroke="#111" stroke-width="1.1"/><circle cx="1232.6" cy="214.8" r="4.5" fill="#b4b4a0" stroke="#111" stroke-width="1.1"/><circle cx="1171.5" cy="243.7" r="4.5" fill="#34aec0" stroke="#111" stroke-width="1.1"/><circle cx="1182.4" cy="241.6" r="4.5" fill="#5eaebc" stroke="#111" stroke-width="1.1"/><circle cx="1193.2" cy="239" r="4.5" fill="#7aaeb8" stroke="#111" stroke-width="1.1"/><circle cx="1207.1" cy="237.8" r="4.5" fill="#8eaeb4" stroke="#111" stroke-width="1.1"/><circle cx="1217.9" cy="235.2" r="4.5" fill="#a0b0b0" stroke="#111" stroke-width="1.1"/><circle cx="1502" cy="183.4" r="4.5" fill="#b41c1c" stroke="#111" stroke-width="1.1"/><circle cx="1445" cy="192.7" r="4.5" fill="#b04848" stroke="#111" stroke-width="1.1"/><circle cx="1382.6" cy="203.9" r="4.5" fill="#ac6060" stroke="#111" stroke-width="1.1"/><circle cx="1330" cy="214.6" r="4.5" fill="#aa7676" stroke="#111" stroke-width="1.1"/><circle cx="1277.4" cy="223.9" r="4.5" fill="#a88c8c" stroke="#111" stroke-width="1.1"/><circle cx="1338.8" cy="350" r="4.5" fill="#b428b4" stroke="#111" stroke-width="1.1"/><circle cx="1310" cy="317.9" r="4.5" fill="#b454b4" stroke="#111" stroke-width="1.1"/><circle cx="1284.2" cy="290.6" r="4.5" fill="#b070b0" stroke="#111" stroke-width="1.1"/><circle cx="1265.2" cy="270.6" r="4.5" fill="#aa88aa" stroke="#111" stroke-width="1.1"/><circle cx="1246.2" cy="250.2" r="4.5" fill="#a89aa8" stroke="#111" stroke-width="1.1"/><circle cx="1205.7" cy="485" r="4.5" fill="#2020b0" stroke="#111" stroke-width="1.1"/><circle cx="1216" cy="410.5" r="4.5" fill="#5858c0" stroke="#111" stroke-width="1.1"/><circle cx="1221.8" cy="347.6" r="4.5" fill="#7474c0" stroke="#111" stroke-width="1.1"/><circle cx="1224.2" cy="303.3" r="4.5" fill="#8888bc" stroke="#111" stroke-width="1.1"/><circle cx="1227.2" cy="263.8" r="4.5" fill="#9c9cb4" stroke="#111" stroke-width="1.1"/><circle cx="1231.5" cy="232" r="4.5" fill="#ffffff" stroke="#111" stroke-width="1.1"/><rect x="1225.6" y="222.2" width="13.6" height="13.6" fill="none" stroke="#000" stroke-width="1.9"/></svg>
<div class="a" style="left:1443.00px;top:460.80px;width:214.00px;height:146.40px;background:#a4a4a4"></div>
<div class="a" style="left:1445px;top:462.8px;width:210px;height:142.4px;overflow:hidden"><div style="position:absolute;left:0;top:0;width:100%;height:100%;background:linear-gradient(125deg,#a8ff00 0%,#d4ff00 28%,#ffff00 50%,#ffd400 76%,#ffae00 100%)"></div><div style="position:absolute;left:0;top:0;width:100%;height:100%;clip-path:polygon(0 0,210px 0,210px 128px,0 15.8px);background:linear-gradient(125deg,#5c9600 0%,#849a00 32%,#9a9800 52%,#9a8400 76%,#8a6200 100%)"></div></div>
<svg class="a" style="left:1443px;top:460px" width="214" height="148" viewBox="1443 460 214 148"><circle cx="1535.6" cy="533.8" r="4.5" fill="#c4b628" stroke="#111" stroke-width="1.1"/><rect x="1542.3" y="525.8" width="14" height="14" fill="none" stroke="#f4f4f4" stroke-width="1.8"/></svg>
<div class="t" style="left:64.00px;top:657.90px;font-size:28px;line-height:28px;color:#f2f2f2;font-weight:400;transform:scaleX(1.0458);transform-origin:0 0;">Avg dE2000: 1,4</div>
<div class="t" style="left:50.00px;top:699.00px;font-size:28px;line-height:28px;color:#f2f2f2;font-weight:400;transform:scaleX(1.0692);transform-origin:0 0;">Max dE2000: 3,14</div>
<div class="t" style="left:19.70px;top:747.65px;font-size:27px;line-height:27px;color:#f2f2f2;font-weight:400;transform:scaleX(1.1028);transform-origin:0 0;">Current Reading</div>
<div class="t" style="left:19.70px;top:785.60px;font-size:24px;line-height:24px;color:#f2f2f2;font-weight:400;transform:scaleX(1.0329);transform-origin:0 0;">x: 0,4159</div>
<div class="t" style="left:176.00px;top:785.60px;font-size:24px;line-height:24px;color:#f2f2f2;font-weight:400;transform:scaleX(1.0299);transform-origin:0 0;">y: 0,5055</div>
<div class="t" style="left:19.70px;top:826.10px;font-size:24px;line-height:24px;color:#f2f2f2;font-weight:400;transform:scaleX(1.0276);transform-origin:0 0;">fL: 107,3</div>
<div class="t" style="left:19.70px;top:860.20px;font-size:24px;line-height:24px;color:#f2f2f2;font-weight:400;transform:scaleX(1.0801);transform-origin:0 0;">cd/m²: 367,65</div>
<div class="a" style="left:361.70px;top:688.50px;width:249.30px;height:180.10px;background:#242424"></div>
<div class="a" style="left:361.70px;top:706.00px;width:249.30px;height:2.00px;background:#858585"></div>
<div class="a" style="left:355.70px;top:706.40px;width:6.00px;height:2.00px;background:#d0d0d0"></div>
<div class="t" style="left:332.67px;top:700.72px;font-size:13.5px;line-height:13.5px;color:#d8d8d8;font-weight:400;">104</div>
<div class="a" style="left:361.70px;top:743.00px;width:249.30px;height:2.00px;background:#858585"></div>
<div class="a" style="left:355.70px;top:743.30px;width:6.00px;height:2.00px;background:#d0d0d0"></div>
<div class="t" style="left:332.67px;top:737.62px;font-size:13.5px;line-height:13.5px;color:#d8d8d8;font-weight:400;">102</div>
<div class="a" style="left:361.70px;top:779.00px;width:249.30px;height:2.00px;background:#858585"></div>
<div class="a" style="left:355.70px;top:779.10px;width:6.00px;height:2.00px;background:#d0d0d0"></div>
<div class="t" style="left:332.67px;top:773.42px;font-size:13.5px;line-height:13.5px;color:#d8d8d8;font-weight:400;">100</div>
<div class="a" style="left:361.70px;top:815.00px;width:249.30px;height:2.00px;background:#858585"></div>
<div class="a" style="left:355.70px;top:815.10px;width:6.00px;height:2.00px;background:#d0d0d0"></div>
<div class="t" style="left:340.17px;top:809.42px;font-size:13.5px;line-height:13.5px;color:#d8d8d8;font-weight:400;">98</div>
<div class="a" style="left:361.70px;top:851.00px;width:249.30px;height:2.00px;background:#858585"></div>
<div class="a" style="left:355.70px;top:851.00px;width:6.00px;height:2.00px;background:#d0d0d0"></div>
<div class="t" style="left:340.17px;top:845.32px;font-size:13.5px;line-height:13.5px;color:#d8d8d8;font-weight:400;">96</div>
<div class="a" style="left:360.70px;top:687.50px;width:251.30px;height:2.00px;background:#9a9a9a"></div>
<div class="a" style="left:360.70px;top:867.60px;width:251.30px;height:2.00px;background:#9a9a9a"></div>
<div class="a" style="left:360.70px;top:687.50px;width:2.00px;height:182.10px;background:#9a9a9a"></div>
<div class="a" style="left:610.00px;top:687.50px;width:2.00px;height:182.10px;background:#9a9a9a"></div>
<div class="a" style="left:360.70px;top:868.60px;width:2.00px;height:8.00px;background:#d0d0d0"></div>
<div class="a" style="left:610.00px;top:868.60px;width:2.00px;height:8.00px;background:#d0d0d0"></div>
<div class="t" style="left:430.60px;top:672.23px;font-size:13.5px;line-height:13.5px;color:#d8d8d8;font-weight:400;transform:scaleX(1.0025);transform-origin:0 0;">RGB Balance</div>
<div class="t" style="left:469.13px;top:874.52px;font-size:13.5px;line-height:13.5px;color:#d8d8d8;font-weight:400;">100%</div>
<div class="a" style="left:385.00px;top:795.50px;width:67.20px;height:73.10px;background:#000"></div>
<div class="a" style="left:386.50px;top:797.00px;width:64.20px;height:71.10px;background:linear-gradient(#ff5a5a,#ff3c3c)"></div>
<div class="a" style="left:451.20px;top:778.70px;width:67.00px;height:89.90px;background:#000"></div>
<div class="a" style="left:452.70px;top:780.20px;width:64.00px;height:87.90px;background:linear-gradient(#5aac5a,#3c9a3c)"></div>
<div class="a" style="left:518.00px;top:729.40px;width:67.40px;height:139.20px;background:#000"></div>
<div class="a" style="left:519.50px;top:730.90px;width:64.40px;height:137.20px;background:linear-gradient(#5c5cff,#3030ff)"></div>
<div class="a" style="left:631.00px;top:656.00px;width:731.00px;height:238.00px;background:#080808"></div>
<div class="a" style="left:633.00px;top:658.00px;width:727.00px;height:14.50px;background:linear-gradient(#2a2a2a,#2f2f2f)"></div>
<div class="a" style="left:633.00px;top:672.50px;width:727.00px;height:14.50px;background:#121212"></div>
<div class="a" style="left:633.00px;top:687.00px;width:727.00px;height:25.20px;background:#3c3c3c"></div>
<div class="t" style="left:651.50px;top:692.27px;font-size:16.5px;line-height:16.5px;color:#f4f4f4;font-weight:700;letter-spacing:0.8px;transform:scaleX(1.2249);transform-origin:0 0;">x: CIE31</div>
<div class="t" style="left:834.50px;top:692.48px;font-size:16.5px;line-height:16.5px;color:#f4f4f4;font-weight:400;letter-spacing:1.2px;transform:scaleX(1.1964);transform-origin:0 0;">0,3279</div>
<div class="t" style="left:941.00px;top:692.48px;font-size:16.5px;line-height:16.5px;color:#f4f4f4;font-weight:400;letter-spacing:1.2px;transform:scaleX(1.1964);transform-origin:0 0;">0,3503</div>
<div class="t" style="left:1047.50px;top:692.48px;font-size:16.5px;line-height:16.5px;color:#f4f4f4;font-weight:400;letter-spacing:1.2px;transform:scaleX(1.1964);transform-origin:0 0;">0,3720</div>
<div class="t" style="left:1154.00px;top:692.48px;font-size:16.5px;line-height:16.5px;color:#f4f4f4;font-weight:400;letter-spacing:1.2px;transform:scaleX(1.1964);transform-origin:0 0;">0,3925</div>
<div class="t" style="left:1260.50px;top:692.48px;font-size:16.5px;line-height:16.5px;color:#f4f4f4;font-weight:400;letter-spacing:1.2px;transform:scaleX(1.1964);transform-origin:0 0;">0,4159</div>
<div class="a" style="left:633.00px;top:712.20px;width:727.00px;height:25.60px;background:#8a8a8a"></div>
<div class="t" style="left:651.50px;top:717.48px;font-size:16.5px;line-height:16.5px;color:#f4f4f4;font-weight:700;letter-spacing:0.8px;transform:scaleX(1.2053);transform-origin:0 0;">y: CIE31</div>
<div class="t" style="left:834.50px;top:717.68px;font-size:16.5px;line-height:16.5px;color:#f4f4f4;font-weight:400;letter-spacing:1.2px;transform:scaleX(1.1964);transform-origin:0 0;">0,3597</div>
<div class="t" style="left:941.00px;top:717.68px;font-size:16.5px;line-height:16.5px;color:#f4f4f4;font-weight:400;letter-spacing:1.2px;transform:scaleX(1.1964);transform-origin:0 0;">0,3980</div>
<div class="t" style="left:1047.50px;top:717.68px;font-size:16.5px;line-height:16.5px;color:#f4f4f4;font-weight:400;letter-spacing:1.2px;transform:scaleX(1.1964);transform-origin:0 0;">0,4350</div>
<div class="t" style="left:1154.00px;top:717.68px;font-size:16.5px;line-height:16.5px;color:#f4f4f4;font-weight:400;letter-spacing:1.2px;transform:scaleX(1.1964);transform-origin:0 0;">0,4690</div>
<div class="t" style="left:1260.50px;top:717.68px;font-size:16.5px;line-height:16.5px;color:#f4f4f4;font-weight:400;letter-spacing:1.2px;transform:scaleX(1.1964);transform-origin:0 0;">0,5055</div>
<div class="a" style="left:633.00px;top:737.80px;width:727.00px;height:25.80px;background:#3c3c3c"></div>
<div class="t" style="left:651.50px;top:743.07px;font-size:16.5px;line-height:16.5px;color:#f4f4f4;font-weight:700;letter-spacing:0.8px;transform:scaleX(1.2190);transform-origin:0 0;">Y</div>
<div class="t" style="left:834.50px;top:743.27px;font-size:16.5px;line-height:16.5px;color:#f4f4f4;font-weight:400;letter-spacing:1.2px;transform:scaleX(1.1948);transform-origin:0 0;">390,4713</div>
<div class="t" style="left:941.00px;top:743.27px;font-size:16.5px;line-height:16.5px;color:#f4f4f4;font-weight:400;letter-spacing:1.2px;transform:scaleX(1.1948);transform-origin:0 0;">383,0631</div>
<div class="t" style="left:1047.50px;top:743.27px;font-size:16.5px;line-height:16.5px;color:#f4f4f4;font-weight:400;letter-spacing:1.2px;transform:scaleX(1.1948);transform-origin:0 0;">378,3558</div>
<div class="t" style="left:1154.00px;top:743.27px;font-size:16.5px;line-height:16.5px;color:#f4f4f4;font-weight:400;letter-spacing:1.2px;transform:scaleX(1.1948);transform-origin:0 0;">372,7072</div>
<div class="t" style="left:1260.50px;top:743.27px;font-size:16.5px;line-height:16.5px;color:#f4f4f4;font-weight:400;letter-spacing:1.2px;transform:scaleX(1.1948);transform-origin:0 0;">367,6524</div>
<div class="a" style="left:633.00px;top:763.60px;width:727.00px;height:26.40px;background:#8a8a8a"></div>
<div class="t" style="left:651.50px;top:768.88px;font-size:16.5px;line-height:16.5px;color:#f4f4f4;font-weight:700;letter-spacing:0.8px;transform:scaleX(1.2548);transform-origin:0 0;">Target x:CIE31</div>
<div class="t" style="left:834.50px;top:769.08px;font-size:16.5px;line-height:16.5px;color:#f4f4f4;font-weight:400;letter-spacing:1.2px;transform:scaleX(1.1964);transform-origin:0 0;">0,3344</div>
<div class="t" style="left:941.00px;top:769.08px;font-size:16.5px;line-height:16.5px;color:#f4f4f4;font-weight:400;letter-spacing:1.2px;transform:scaleX(1.1964);transform-origin:0 0;">0,3564</div>
<div class="t" style="left:1047.50px;top:769.08px;font-size:16.5px;line-height:16.5px;color:#f4f4f4;font-weight:400;letter-spacing:1.2px;transform:scaleX(1.1964);transform-origin:0 0;">0,3773</div>
<div class="t" style="left:1154.00px;top:769.08px;font-size:16.5px;line-height:16.5px;color:#f4f4f4;font-weight:400;letter-spacing:1.2px;transform:scaleX(1.1964);transform-origin:0 0;">0,3969</div>
<div class="t" style="left:1260.50px;top:769.08px;font-size:16.5px;line-height:16.5px;color:#f4f4f4;font-weight:400;letter-spacing:1.2px;transform:scaleX(1.1964);transform-origin:0 0;">0,4193</div>
<div class="a" style="left:633.00px;top:790.00px;width:727.00px;height:25.80px;background:#3c3c3c"></div>
<div class="t" style="left:651.50px;top:795.27px;font-size:16.5px;line-height:16.5px;color:#f4f4f4;font-weight:700;letter-spacing:0.8px;transform:scaleX(1.2548);transform-origin:0 0;">Target y:CIE31</div>
<div class="t" style="left:834.50px;top:795.48px;font-size:16.5px;line-height:16.5px;color:#f4f4f4;font-weight:400;letter-spacing:1.2px;transform:scaleX(1.1964);transform-origin:0 0;">0,3648</div>
<div class="t" style="left:941.00px;top:795.48px;font-size:16.5px;line-height:16.5px;color:#f4f4f4;font-weight:400;letter-spacing:1.2px;transform:scaleX(1.1964);transform-origin:0 0;">0,4013</div>
<div class="t" style="left:1047.50px;top:795.48px;font-size:16.5px;line-height:16.5px;color:#f4f4f4;font-weight:400;letter-spacing:1.2px;transform:scaleX(1.1964);transform-origin:0 0;">0,4358</div>
<div class="t" style="left:1154.00px;top:795.48px;font-size:16.5px;line-height:16.5px;color:#f4f4f4;font-weight:400;letter-spacing:1.2px;transform:scaleX(1.1964);transform-origin:0 0;">0,4682</div>
<div class="t" style="left:1260.50px;top:795.48px;font-size:16.5px;line-height:16.5px;color:#f4f4f4;font-weight:400;letter-spacing:1.2px;transform:scaleX(1.1964);transform-origin:0 0;">0,5053</div>
<div class="a" style="left:633.00px;top:815.80px;width:727.00px;height:25.00px;background:#8a8a8a"></div>
<div class="t" style="left:651.50px;top:821.07px;font-size:16.5px;line-height:16.5px;color:#f4f4f4;font-weight:700;letter-spacing:0.8px;transform:scaleX(1.2947);transform-origin:0 0;">Target Y</div>
<div class="t" style="left:834.50px;top:821.27px;font-size:16.5px;line-height:16.5px;color:#f4f4f4;font-weight:400;letter-spacing:1.2px;transform:scaleX(1.2137);transform-origin:0 0;">390,2911</div>
<div class="t" style="left:941.00px;top:821.27px;font-size:16.5px;line-height:16.5px;color:#f4f4f4;font-weight:400;letter-spacing:1.2px;transform:scaleX(1.1948);transform-origin:0 0;">383,4403</div>
<div class="t" style="left:1047.50px;top:821.27px;font-size:16.5px;line-height:16.5px;color:#f4f4f4;font-weight:400;letter-spacing:1.2px;transform:scaleX(1.1948);transform-origin:0 0;">378,1765</div>
<div class="t" style="left:1154.00px;top:821.27px;font-size:16.5px;line-height:16.5px;color:#f4f4f4;font-weight:400;letter-spacing:1.2px;transform:scaleX(1.1948);transform-origin:0 0;">374,0455</div>
<div class="t" style="left:1260.50px;top:821.27px;font-size:16.5px;line-height:16.5px;color:#f4f4f4;font-weight:400;letter-spacing:1.2px;transform:scaleX(1.1948);transform-origin:0 0;">370,0517</div>
<div class="a" style="left:633.00px;top:840.80px;width:727.00px;height:26.40px;background:#3c3c3c"></div>
<div class="t" style="left:651.50px;top:846.07px;font-size:16.5px;line-height:16.5px;color:#f4f4f4;font-weight:700;letter-spacing:0.8px;transform:scaleX(1.2814);transform-origin:0 0;">ΔE 2000</div>
<div class="t" style="left:834.50px;top:846.27px;font-size:16.5px;line-height:16.5px;color:#f4f4f4;font-weight:400;letter-spacing:1.2px;transform:scaleX(1.1964);transform-origin:0 0;">2,0172</div>
<div class="t" style="left:941.00px;top:846.27px;font-size:16.5px;line-height:16.5px;color:#f4f4f4;font-weight:400;letter-spacing:1.2px;transform:scaleX(1.1964);transform-origin:0 0;">1,4917</div>
<div class="t" style="left:1047.50px;top:846.27px;font-size:16.5px;line-height:16.5px;color:#f4f4f4;font-weight:400;letter-spacing:1.2px;transform:scaleX(1.1964);transform-origin:0 0;">1,2561</div>
<div class="t" style="left:1154.00px;top:846.27px;font-size:16.5px;line-height:16.5px;color:#f4f4f4;font-weight:400;letter-spacing:1.2px;transform:scaleX(1.1964);transform-origin:0 0;">1,0504</div>
<div class="t" style="left:1260.50px;top:846.27px;font-size:16.5px;line-height:16.5px;color:#f4f4f4;font-weight:400;letter-spacing:1.2px;transform:scaleX(1.1964);transform-origin:0 0;">0,7279</div>
<div class="a" style="left:633.00px;top:867.20px;width:727.00px;height:24.80px;background:#8a8a8a"></div>
<div class="t" style="left:651.50px;top:872.48px;font-size:16.5px;line-height:16.5px;color:#f4f4f4;font-weight:700;letter-spacing:0.8px;transform:scaleX(1.2292);transform-origin:0 0;">ΔE ITP</div>
<div class="t" style="left:834.50px;top:872.68px;font-size:16.5px;line-height:16.5px;color:#f4f4f4;font-weight:400;letter-spacing:1.2px;transform:scaleX(1.2223);transform-origin:0 0;">3,8117</div>
<div class="t" style="left:941.00px;top:872.68px;font-size:16.5px;line-height:16.5px;color:#f4f4f4;font-weight:400;letter-spacing:1.2px;transform:scaleX(1.1964);transform-origin:0 0;">3,4827</div>
<div class="t" style="left:1047.50px;top:872.68px;font-size:16.5px;line-height:16.5px;color:#f4f4f4;font-weight:400;letter-spacing:1.2px;transform:scaleX(1.1964);transform-origin:0 0;">3,0177</div>
<div class="t" style="left:1154.00px;top:872.68px;font-size:16.5px;line-height:16.5px;color:#f4f4f4;font-weight:400;letter-spacing:1.2px;transform:scaleX(1.1964);transform-origin:0 0;">2,5321</div>
<div class="t" style="left:1260.50px;top:872.68px;font-size:16.5px;line-height:16.5px;color:#f4f4f4;font-weight:400;letter-spacing:1.2px;transform:scaleX(1.1964);transform-origin:0 0;">2,1856</div>
<div class="t" style="left:860.50px;top:665.90px;font-size:14px;line-height:14px;color:#f4f4f4;font-weight:700;letter-spacing:1px;transform:scaleX(1.3148);transform-origin:0 0;">20%</div>
<div class="t" style="left:966.50px;top:665.90px;font-size:14px;line-height:14px;color:#f4f4f4;font-weight:700;letter-spacing:1px;transform:scaleX(1.3148);transform-origin:0 0;">40%</div>
<div class="t" style="left:1072.70px;top:665.90px;font-size:14px;line-height:14px;color:#f4f4f4;font-weight:700;letter-spacing:1px;transform:scaleX(1.3148);transform-origin:0 0;">60%</div>
<div class="t" style="left:1179.00px;top:665.90px;font-size:14px;line-height:14px;color:#f4f4f4;font-weight:700;letter-spacing:1px;transform:scaleX(1.3148);transform-origin:0 0;">80%</div>
<div class="t" style="left:1280.50px;top:665.90px;font-size:14px;line-height:14px;color:#f4f4f4;font-weight:700;letter-spacing:1px;transform:scaleX(1.3086);transform-origin:0 0;">100%</div>
<div class="a" style="left:5.00px;top:932.80px;width:56.60px;height:76.20px;background:linear-gradient(#ababab,#8a8a8a 45%,#505050);border-radius:5px 5px 0 0"></div>
<div class="a" style="left:24.50px;top:935.50px;width:18.00px;height:18.00px;border-radius:50%;background:radial-gradient(circle at 50% 35%,#6a6a6a,#8a8a8a 75%,#9a9a9a)"></div>
<svg class="a" style="left:26px;top:938px" width="16" height="12"><polygon points="2,9.5 14,9.5 8,3" fill="#1e1e1e"/></svg>
<div class="a" style="left:11.40px;top:965.30px;width:43.80px;height:37.10px;background:#ffff00;border:1px solid #9a9a20;border-radius:5px"></div>
<div class="a" style="left:69.60px;top:932.80px;width:186.40px;height:76.20px;background:linear-gradient(#acacac,#8e8e8e 45%,#545454);border-radius:5px 5px 0 0"></div>
<div class="a" style="left:76.10px;top:939.30px;width:173.90px;height:44.40px;background:#c2c2a2;border:1px solid #8a8a6a;border-radius:5px"></div>
<div class="t" style="left:150.28px;top:991.77px;font-size:12.5px;line-height:12.5px;color:#262626;font-weight:700;">20%</div>
<div class="a" style="left:259.00px;top:932.80px;width:186.60px;height:76.20px;background:linear-gradient(#acacac,#8e8e8e 45%,#545454);border-radius:5px 5px 0 0"></div>
<div class="a" style="left:265.50px;top:939.30px;width:174.10px;height:44.40px;background:#c4c68a;border:1px solid #8a8a6a;border-radius:5px"></div>
<div class="t" style="left:339.78px;top:991.77px;font-size:12.5px;line-height:12.5px;color:#262626;font-weight:700;">40%</div>
<div class="a" style="left:449.30px;top:932.80px;width:186.50px;height:76.20px;background:linear-gradient(#acacac,#8e8e8e 45%,#545454);border-radius:5px 5px 0 0"></div>
<div class="a" style="left:455.80px;top:939.30px;width:174.00px;height:44.40px;background:#c3c46c;border:1px solid #8a8a6a;border-radius:5px"></div>
<div class="t" style="left:530.03px;top:991.77px;font-size:12.5px;line-height:12.5px;color:#262626;font-weight:700;">60%</div>
<div class="a" style="left:639.00px;top:932.80px;width:186.40px;height:76.20px;background:linear-gradient(#acacac,#8e8e8e 45%,#545454);border-radius:5px 5px 0 0"></div>
<div class="a" style="left:645.50px;top:939.30px;width:173.90px;height:44.40px;background:#c2c24a;border:1px solid #8a8a6a;border-radius:5px"></div>
<div class="t" style="left:719.68px;top:991.77px;font-size:12.5px;line-height:12.5px;color:#262626;font-weight:700;">80%</div>
<div class="a" style="left:828.50px;top:932.80px;width:187.50px;height:76.20px;background:linear-gradient(#1a1a1a,#262626 50%,#363636);border-radius:5px 5px 0 0"></div>
<div class="a" style="left:835.50px;top:938.50px;width:174.50px;height:45.50px;background:#c2c000;border-radius:5px"></div>
<div class="t" style="left:906.17px;top:991.95px;font-size:13px;line-height:13px;color:#f4f4f4;font-weight:700;">100%</div>
<div class="a" style="left:1016.00px;top:932.80px;width:254.00px;height:76.20px;background:linear-gradient(#4a4a4a,#333333 50%,#262626)"></div>
<div class="a" style="left:1270.00px;top:932.40px;width:60.30px;height:76.60px;background:linear-gradient(#aaaaaa,#8e8e8e 29%,#a0a0a0 31%,#7e7e7e 65%,#585858);border-radius:5px 5px 0 0"></div>
<div class="a" style="left:1270.00px;top:955.00px;width:60.30px;height:1.20px;background:#303030"></div>
<div class="a" style="left:1291.30px;top:934.80px;width:18.40px;height:18.40px;border-radius:50%;background:linear-gradient(#6e6e6e,#8a8a8a 50%,#a4a4a4)"></div>
<svg class="a" style="left:1292px;top:937px" width="16" height="12"><polygon points="2.5,9 13.5,9 8,3.2" fill="#2a2a2a"/></svg>
<div class="a" style="left:1280.50px;top:963.30px;width:38.90px;height:38.10px;background:linear-gradient(#ababab 50%,#8e8e8e 50%);border:3px solid #1c1c1c;border-radius:7px"></div>
<div class="a" style="left:1292.00px;top:974.10px;width:17.00px;height:16.90px;background:linear-gradient(#151515 50%,#000 50%)"></div>
<div class="a" style="left:1331.00px;top:932.20px;width:342.00px;height:37.80px;background:linear-gradient(#b4b4b4,#8e8e8e 50%,#606060)"></div>
<div class="a" style="left:1445.80px;top:932.20px;width:55.70px;height:37.80px;background:linear-gradient(#8c8c8c,#6c6c6c 50%,#4e4e4e)"></div>
<div class="a" style="left:1388.90px;top:932.20px;width:1.20px;height:37.80px;background:#262626"></div>
<div class="a" style="left:1444.90px;top:932.20px;width:1.20px;height:37.80px;background:#262626"></div>
<div class="a" style="left:1501.20px;top:932.20px;width:1.20px;height:37.80px;background:#262626"></div>
<div class="a" style="left:1557.80px;top:932.20px;width:1.20px;height:37.80px;background:#262626"></div>
<div class="a" style="left:1613.80px;top:932.20px;width:1.20px;height:37.80px;background:#262626"></div>
<div class="a" style="left:1331.00px;top:969.60px;width:342.00px;height:1.40px;background:#262626"></div>
<div class="a" style="left:1331.00px;top:971.00px;width:342.00px;height:38.00px;background:linear-gradient(#b6b6b6,#8c8c8c 50%,#5c5c5c)"></div>
<div class="a" style="left:1501.20px;top:971.00px;width:1.20px;height:38.00px;background:#262626"></div>
<div class="a" style="left:1669.00px;top:932.20px;width:4.00px;height:76.80px;background:linear-gradient(90deg,#555,#222)"></div>
<div class="a" style="left:1347.50px;top:938.70px;width:25.00px;height:25.00px;border-radius:50%;background:linear-gradient(#727272,#8c8c8c 50%,#a6a6a6)"></div>
<div class="a" style="left:1355.20px;top:946.40px;width:9.60px;height:9.60px;background:#2a2a2a"></div>
<div class="a" style="left:1404.40px;top:938.70px;width:25.00px;height:25.00px;border-radius:50%;background:linear-gradient(#727272,#8c8c8c 50%,#a6a6a6)"></div>
<svg class="a" style="left:1404px;top:938px" width="26" height="26"><polygon points="9.5,7.5 9.5,19 19,13.2" fill="#2a2a2a"/></svg>
<div class="a" style="left:1461.20px;top:938.70px;width:25.00px;height:25.00px;border-radius:50%;background:linear-gradient(#5a5a5a,#6a6a6a 50%,#7e7e7e)"></div>
<svg class="a" style="left:1461px;top:938px" width="26" height="26"><g fill="none" stroke="#262626" stroke-width="2"><path d="M8.5,8 H6.5 V18.5 H8.5"/><path d="M17.5,8 H19.5 V18.5 H17.5"/></g><g fill="#262626"><rect x="10" y="12.3" width="2" height="2"/><rect x="14" y="12.3" width="2" height="2"/></g></svg>
<div class="a" style="left:1518.00px;top:938.80px;width:25.00px;height:25.00px;border-radius:50%;background:linear-gradient(#727272,#8c8c8c 50%,#a6a6a6)"></div>
<svg class="a" style="left:1517px;top:938px" width="27" height="26"><path d="M13.5,13 C10.5,9.2 5.8,9.6 5.8,13 C5.8,16.4 10.5,16.8 13.5,13 C16.5,9.2 21.2,9.6 21.2,13 C21.2,16.4 16.5,16.8 13.5,13 Z" fill="none" stroke="#2a2a2a" stroke-width="2.4"/></svg>
<div class="a" style="left:1573.80px;top:938.80px;width:25.00px;height:25.00px;border-radius:50%;background:linear-gradient(#727272,#8c8c8c 50%,#a6a6a6)"></div>
<svg class="a" style="left:1573px;top:938px" width="27" height="26" viewBox="0 0 27 26"><g fill="none" stroke="#2a2a2a" stroke-width="2.4"><path d="M7.59,11.96 A6,6 0 0 1 18.1,9.14"/><path d="M19.41,14.04 A6,6 0 0 1 8.9,16.86"/></g><g fill="#2a2a2a"><polygon points="20.55,7.08 15.65,11.2 20.9,12.6"/><polygon points="6.45,18.92 11.35,14.8 6.1,13.4"/></g></svg>
<div class="a" style="left:1631.20px;top:938.80px;width:25.00px;height:25.00px;border-radius:50%;background:linear-gradient(#727272,#8c8c8c 50%,#a6a6a6)"></div>
<div class="a" style="left:1358.00px;top:977.80px;width:25.00px;height:25.00px;border-radius:50%;background:linear-gradient(#727272,#8c8c8c 50%,#a6a6a6)"></div>
<svg class="a" style="left:1358px;top:978px" width="25" height="25"><g fill="none" stroke="#2e2e2e" stroke-width="2.2"><path d="M11.5,6.5 L6.5,12.3 L11.5,18"/><path d="M17.5,6.5 L12.5,12.3 L17.5,18"/></g></svg>
<div class="t" style="left:1403.25px;top:977.40px;font-size:26px;line-height:26px;color:#333333;font-weight:700;transform:scaleX(1.0216);transform-origin:0 0;">Back</div>
<div class="t" style="left:1537.50px;top:977.70px;font-size:26px;line-height:26px;color:#333333;font-weight:700;transform:scaleX(1.1356);transform-origin:0 0;">Next</div>
<div class="a" style="left:1624.10px;top:977.80px;width:25.00px;height:25.00px;border-radius:50%;background:linear-gradient(#727272,#8c8c8c 50%,#a6a6a6)"></div>
<svg class="a" style="left:1624px;top:978px" width="25" height="25"><g fill="none" stroke="#2e2e2e" stroke-width="2.2"><path d="M7.5,6.5 L12.5,12.3 L7.5,18"/><path d="M13.5,6.5 L18.5,12.3 L13.5,18"/></g></svg>
<div class="a" style="left:1236.50px;top:3.00px;width:8.90px;height:37.00px;background:linear-gradient(90deg,#2a2a2a,#3a3a3a 55%,#555 100%)"></div>
<div class="a" style="left:1407.00px;top:3.00px;width:8.50px;height:37.00px;background:linear-gradient(90deg,#2a2a2a,#333 55%,#444 100%)"></div>
<div class="a" style="left:1050.00px;top:3.00px;width:9.60px;height:37.00px;background:linear-gradient(90deg,#252525,#3a3a3a)"></div>
<div class="a" style="left:1059.60px;top:3.30px;width:176.90px;height:36.70px;background:linear-gradient(#5a5a5a,#666666 50%,#727272);border-radius:4px 4px 0 0"></div>
<div class="a" style="left:1059.60px;top:3.30px;width:6.50px;height:36.70px;background:linear-gradient(90deg,#20d020,#10b010);border-radius:4px 0 0 0"></div>
<div class="t" style="left:1069.70px;top:6.68px;font-size:12.5px;line-height:12.5px;color:#ececec;font-weight:400;transform:scaleX(1.0538);transform-origin:0 0;">X-Rite i1Pro 3</div>
<div class="t" style="left:1070.30px;top:25.38px;font-size:12.5px;line-height:12.5px;color:#ececec;font-weight:400;transform:scaleX(1.1019);transform-origin:0 0;">Direct View</div>
<div class="a" style="left:1156.30px;top:9.50px;width:24.00px;height:24.00px;border-radius:50%;background:linear-gradient(#4a4a4a,#5e5e5e 50%,#727272)"></div>
<svg class="a" style="left:1160.3px;top:15.5px" width="16" height="12"><polygon points="1.5,3.5 14.5,3.5 8,10" fill="#f4f4f4"/></svg>
<div class="a" style="left:1191.80px;top:7.00px;width:1.20px;height:33.00px;background:#3a3a3a"></div>
<div class="a" style="left:1202.50px;top:5.40px;width:32.20px;height:32.20px;border-radius:50%;background:#0000e6;border:1.6px solid #f0f0f0"></div>
<div class="t" style="left:1208.58px;top:15.80px;font-size:12px;line-height:12px;color:#ffffff;font-weight:400;">682</div>
<div class="a" style="left:1245.40px;top:3.30px;width:161.60px;height:36.70px;background:linear-gradient(#5a5a5a,#666666 50%,#727272);border-radius:4px 4px 0 0"></div>
<div class="a" style="left:1245.40px;top:3.30px;width:6.50px;height:36.70px;background:linear-gradient(90deg,#e8e8e8,#a0a0a0);border-radius:4px 0 0 0"></div>
<div class="t" style="left:1256.40px;top:6.98px;font-size:12.5px;line-height:12.5px;color:#ececec;font-weight:400;transform:scaleX(1.0829);transform-origin:0 0;">Mobile Forge</div>
<div class="a" style="left:1375.00px;top:9.50px;width:24.00px;height:24.00px;border-radius:50%;background:linear-gradient(#4a4a4a,#5e5e5e 50%,#727272)"></div>
<svg class="a" style="left:1379.0px;top:15.5px" width="16" height="12"><polygon points="1.5,3.5 14.5,3.5 8,10" fill="#f4f4f4"/></svg>
<div class="a" style="left:1415.50px;top:3.30px;width:178.40px;height:36.70px;background:linear-gradient(#5a5a5a,#666666 50%,#727272);border-radius:4px 4px 0 0"></div>
<div class="a" style="left:1415.50px;top:3.30px;width:6.50px;height:36.70px;background:linear-gradient(90deg,#f0f000,#c8c800);border-radius:4px 0 0 0"></div>
<div class="t" style="left:1426.10px;top:6.98px;font-size:12.5px;line-height:12.5px;color:#ececec;font-weight:400;transform:scaleX(1.0871);transform-origin:0 0;">Direct Display Control</div>
<div class="a" style="left:1561.80px;top:9.50px;width:24.00px;height:24.00px;border-radius:50%;background:linear-gradient(#4a4a4a,#5e5e5e 50%,#727272)"></div>
<svg class="a" style="left:1565.8px;top:15.5px" width="16" height="12"><polygon points="1.5,3.5 14.5,3.5 8,10" fill="#f4f4f4"/></svg>
<div class="a" style="left:1598.00px;top:3.00px;width:42.00px;height:34.60px;background:linear-gradient(#8e8e8e,#626262 55%,#6c6c6c);border:1.3px solid #c0c0c0;border-radius:5px"></div>
<div class="a" style="left:1606.70px;top:7.60px;width:24.00px;height:24.00px;border-radius:50%;background:linear-gradient(#585858,#6e6e6e 50%,#929292)"></div>
<svg class="a" style="left:1607px;top:8px" width="24" height="24" viewBox="0 0 24 24"><g fill="#d4d4d4"><rect x="10.7" y="3.6" width="2.6" height="3.4" transform="rotate(0 12 12)"/><rect x="10.7" y="3.6" width="2.6" height="3.4" transform="rotate(45 12 12)"/><rect x="10.7" y="3.6" width="2.6" height="3.4" transform="rotate(90 12 12)"/><rect x="10.7" y="3.6" width="2.6" height="3.4" transform="rotate(135 12 12)"/><rect x="10.7" y="3.6" width="2.6" height="3.4" transform="rotate(180 12 12)"/><rect x="10.7" y="3.6" width="2.6" height="3.4" transform="rotate(225 12 12)"/><rect x="10.7" y="3.6" width="2.6" height="3.4" transform="rotate(270 12 12)"/><rect x="10.7" y="3.6" width="2.6" height="3.4" transform="rotate(315 12 12)"/></g><circle cx="12" cy="12" r="5.3" fill="none" stroke="#dcdcdc" stroke-width="2.3"/></svg>
<div class="a" style="left:1641.20px;top:3.00px;width:38.80px;height:34.60px;background:linear-gradient(#8e8e8e,#626262 55%,#6c6c6c);border:1.3px solid #c0c0c0;border-radius:5px"></div>
<div class="a" style="left:1668.00px;top:3.00px;width:5.00px;height:37.00px;background:linear-gradient(90deg,rgba(0,0,0,0),rgba(0,0,0,0.55))"></div>
<div class="a" style="left:1645.50px;top:7.60px;width:24.00px;height:24.00px;border-radius:50%;background:linear-gradient(#585858,#6e6e6e 50%,#929292)"></div>
<svg class="a" style="left:1650px;top:12px" width="14" height="16"><polygon points="3,8 10.5,2 10.5,14" fill="#f0f0f0"/></svg>
</body></html>
